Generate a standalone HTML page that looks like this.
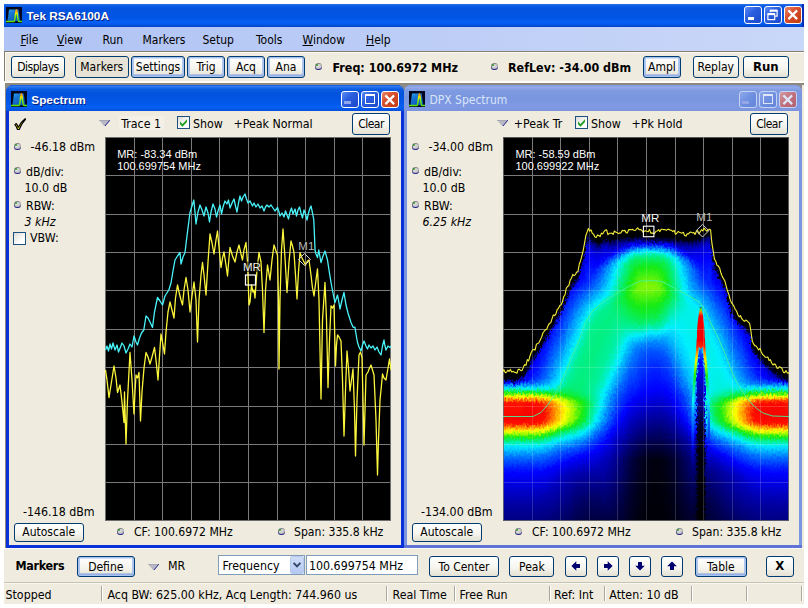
<!DOCTYPE html>
<html><head><meta charset="utf-8"><title>Tek RSA6100A</title>
<style>
html,body{margin:0;padding:0;background:#fff;}
body{width:808px;height:608px;position:relative;overflow:hidden;font-family:"DejaVu Sans Condensed","DejaVu Sans","Liberation Sans",sans-serif;font-size:12px;color:#000;}
.a{position:absolute;}
.t{position:absolute;white-space:nowrap;line-height:14px;height:14px;transform-origin:0 50%;}
.b{position:absolute;box-sizing:border-box;border:1px solid #003c74;border-radius:3px;background:linear-gradient(#fff 0%,#f6f5ef 55%,#e4e1d2 100%);text-align:center;white-space:nowrap;}
.b.d{box-shadow:inset 0 0 0 1.5px #a9c3f0,inset 0 -1px 0 1.5px #7f9fdf;}
.b.p{background:#e6e3d6;}
.b span{position:absolute;left:0;right:0;text-align:center;line-height:14px;}
.led{position:absolute;width:7px;height:7px;border-radius:50%;background:radial-gradient(circle at 35% 35%,#e8e8e8 0,#bdbdbd 60%,#9a9a9a 100%);box-shadow:inset 0 -1px 0 #20208a,inset 1px 1px 0 #888;}
.led i{position:absolute;left:1.3px;top:1.3px;width:2.2px;height:2.2px;border-radius:50%;background:#2f9a2f;}
.sep{position:absolute;top:586px;width:1px;height:15px;background:#aca899;box-shadow:1px 0 0 #fff;}
</style></head>
<body>
<div class="a" style="left:4px;top:4px;width:800px;height:23px;background:linear-gradient(#2b71e8 0%,#0a5be6 9%,#0353df 22%,#0255e5 60%,#0660f6 80%,#0453e0 92%,#0142c4 100%);"></div>
<svg class="a" style="left:6px;top:7px" width="16" height="16" viewBox="0 0 16 16"><defs><linearGradient id="ig6_7" x1="0" y1="0" x2="0.6" y2="1"><stop offset="0" stop-color="#2ea6ee"/><stop offset="0.35" stop-color="#1878d6"/><stop offset="1" stop-color="#0c58b8"/></linearGradient><linearGradient id="il6_7" x1="0" y1="0" x2="0" y2="1"><stop offset="0.12" stop-color="#ff9a00"/><stop offset="0.3" stop-color="#e6f000"/><stop offset="0.6" stop-color="#7cf000"/><stop offset="1" stop-color="#5ee000"/></linearGradient></defs><rect width="16" height="16" fill="#00061e"/><path d="M1.4 14.2L3 2.6H12.6L14.4 14.2Z" fill="url(#ig6_7)"/><path d="M0 14.6H7.8C9.3 14.6 9.5 2.8 10.4 2.8C11.3 2.8 11.5 14.6 13 14.6H16" fill="none" stroke="url(#il6_7)" stroke-width="1.5"/></svg>
<div class="t" id="ttl" style="left:26.5px;top:9.00px;font-size:11.8px;font-weight:bold;color:#fff;font-family:'Liberation Sans',sans-serif;text-shadow:1px 1px 0 #0a1f80;">Tek RSA6100A</div>
<div class="a" style="left:744px;top:6px;width:17.5px;height:17.5px;box-sizing:border-box;border:1px solid #fff;border-radius:3px;background:linear-gradient(135deg,#5c8cf4 0%,#2a5fe0 40%,#1c48c8 100%);"></div>
<div class="a" style="left:747.9px;top:17.2px;width:6.3px;height:2.9px;background:#fff;"></div>
<div class="a" style="left:764px;top:6px;width:17.5px;height:17.5px;box-sizing:border-box;border:1px solid #fff;border-radius:3px;background:linear-gradient(135deg,#5c8cf4 0%,#2a5fe0 40%,#1c48c8 100%);"></div>
<svg class="a" style="left:764px;top:6px" width="17.5" height="17.5" viewBox="0 0 18 18"><path d="M6.5 6.5V4.5H13.5V10.5H11.5" fill="none" stroke="#fff" stroke-width="1.2"/><path d="M6.5 4.9H13.5" stroke="#fff" stroke-width="2"/><rect x="4" y="8" width="7" height="6" fill="none" stroke="#fff" stroke-width="1.2"/><path d="M4 8.4H11" stroke="#fff" stroke-width="2"/></svg>
<div class="a" style="left:784.3px;top:6px;width:17.5px;height:17.5px;box-sizing:border-box;border:1px solid #fff;border-radius:3px;background:linear-gradient(135deg,#e9896b 0%,#d8502c 40%,#c03a12 100%);"></div>
<svg class="a" style="left:784.3px;top:6px" width="17.5" height="17.5" viewBox="0 0 18 18"><path d="M4.5 4.5L13.5 13.5M13.5 4.5L4.5 13.5" stroke="#fff" stroke-width="2.2" stroke-linecap="butt"/></svg>
<div class="a" style="left:802px;top:4px;width:2px;height:23px;background:#0a2cb8;"></div>
<div class="a" style="left:4px;top:27px;width:800px;height:24px;background:linear-gradient(90deg,#afc3f4,#c9d7f8);"></div>
<div class="t" id="m0" style="left:20.5px;top:33.00px;font-size:12px;"><u>F</u>ile</div>
<div class="t" id="m1" style="left:57px;top:33.00px;font-size:12px;"><u>V</u>iew</div>
<div class="t" id="m2" style="left:102.5px;top:33.00px;font-size:12px;">Run</div>
<div class="t" id="m3" style="left:142.5px;top:33.00px;font-size:12px;">Markers</div>
<div class="t" id="m4" style="left:202.5px;top:33.00px;font-size:12px;">Setup</div>
<div class="t" id="m5" style="left:256px;top:33.00px;font-size:12px;">Tools</div>
<div class="t" id="m6" style="left:302.5px;top:33.00px;font-size:12px;"><u>W</u>indow</div>
<div class="t" id="m7" style="left:366px;top:33.00px;font-size:12px;"><u>H</u>elp</div>
<div class="a" style="left:4px;top:51px;width:800px;height:30px;box-sizing:border-box;background:#efebde;border-top:1.5px solid #857f6c;border-left:1.5px solid #857f6c;box-shadow:inset 1px 1px 0 #fbfaf4;"></div>
<div class="a" style="left:4px;top:81px;width:800px;height:2px;background:#fdfcf8;"></div>
<div class="a" style="left:4px;top:83px;width:800px;height:466px;background:#efebde;"></div>
<div class="a" style="left:4px;top:83px;width:800px;height:2px;background:#8d8a7d;"></div>
<div class="a" style="left:4px;top:83px;width:2px;height:466px;background:linear-gradient(90deg,#fff 50%,#8d8a7d 50%);"></div>
<div class="b " style="left:11px;top:56px;width:54px;height:22px;"><span id="b0" style="top:3.00px;font-size:12px;letter-spacing:-0.5px;">Displays</span></div>
<div class="b p" style="left:75px;top:56px;width:53.5px;height:22px;"><span id="b1" style="top:3.00px;font-size:12px;">Markers</span></div>
<div class="b d" style="left:131px;top:56px;width:54px;height:22px;"><span id="b2" style="top:3.00px;font-size:12px;">Settings</span></div>
<div class="b d" style="left:187px;top:56px;width:38px;height:22px;"><span id="b3" style="top:3.00px;font-size:12px;">Trig</span></div>
<div class="b d" style="left:227px;top:56px;width:38px;height:22px;"><span id="b4" style="top:3.00px;font-size:12px;">Acq</span></div>
<div class="b d" style="left:267px;top:56px;width:38px;height:22px;"><span id="b5" style="top:3.00px;font-size:12px;">Ana</span></div>
<div class="led" style="left:314.5px;top:63.0px"><i></i></div>
<div class="t" id="freq" style="left:332.5px;top:60.50px;font-size:12.4px;font-weight:bold;">Freq: 100.6972 MHz</div>
<div class="led" style="left:490.5px;top:62.5px"><i></i></div>
<div class="t" id="ref" style="left:508px;top:60.50px;font-size:12.4px;font-weight:bold;">RefLev: -34.00 dBm</div>
<div class="b d" style="left:643px;top:56px;width:38px;height:22px;"><span id="b6" style="top:3.00px;font-size:12px;">Ampl</span></div>
<div class="b " style="left:693px;top:56px;width:45.5px;height:22px;"><span id="b7" style="top:3.00px;font-size:12px;">Replay</span></div>
<div class="b " style="left:743px;top:56px;width:45.5px;height:22px;"><span id="b8" style="top:3.00px;font-size:13px;font-weight:bold;">Run</span></div>
<div class="a" style="left:6px;top:85px;width:796px;height:6px;background:#8c8c8c;"></div>
<div class="a" style="left:6px;top:85px;width:398px;height:463px;background:#0831d9;border-radius:7px 7px 0 0;"></div>
<div class="a" style="left:6px;top:85px;width:398px;height:25.5px;background:linear-gradient(#0a5ce4 0%,#2f79f0 6%,#0b5ce2 16%,#0252dd 35%,#0358ea 70%,#0660f4 85%,#0550dc 100%);border-radius:7px 7px 0 0;"></div>
<div class="a" style="left:6px;top:544.5px;width:398px;height:3.5px;background:#0831d9;"></div>
<div class="a" style="left:9px;top:110.5px;width:392px;height:434.0px;background:#efebde;"></div>
<svg class="a" style="left:11px;top:91px" width="16" height="16" viewBox="0 0 16 16"><defs><linearGradient id="ig11_91" x1="0" y1="0" x2="0.6" y2="1"><stop offset="0" stop-color="#2ea6ee"/><stop offset="0.35" stop-color="#1878d6"/><stop offset="1" stop-color="#0c58b8"/></linearGradient><linearGradient id="il11_91" x1="0" y1="0" x2="0" y2="1"><stop offset="0.12" stop-color="#ff9a00"/><stop offset="0.3" stop-color="#e6f000"/><stop offset="0.6" stop-color="#7cf000"/><stop offset="1" stop-color="#5ee000"/></linearGradient></defs><rect width="16" height="16" fill="#00061e"/><path d="M1.4 14.2L3 2.6H12.6L14.4 14.2Z" fill="url(#ig11_91)"/><path d="M0 14.6H7.8C9.3 14.6 9.5 2.8 10.4 2.8C11.3 2.8 11.5 14.6 13 14.6H16" fill="none" stroke="url(#il11_91)" stroke-width="1.5"/></svg>
<div class="t" id="c1t" style="left:31.3px;top:92.50px;font-size:11.8px;font-weight:bold;color:#fff;font-family:'Liberation Sans',sans-serif;text-shadow:1px 1px 0 #0a1f80;">Spectrum</div>
<div class="a" style="left:341px;top:90.5px;width:17.5px;height:17.5px;box-sizing:border-box;border:1px solid #fff;border-radius:3px;background:linear-gradient(135deg,#5c8cf4 0%,#2a5fe0 40%,#1c48c8 100%);"></div>
<div class="a" style="left:344.4px;top:101.2px;width:6.3px;height:2.9px;background:#8fa6ee;"></div>
<div class="a" style="left:361px;top:90.5px;width:17.5px;height:17.5px;box-sizing:border-box;border:1px solid #fff;border-radius:3px;background:linear-gradient(135deg,#5c8cf4 0%,#2a5fe0 40%,#1c48c8 100%);"></div>
<div class="a" style="left:364.9px;top:94.4px;width:9.7px;height:9.7px;box-sizing:border-box;border:1.2px solid #fff;border-top-width:2.9px;"></div>
<div class="a" style="left:381.2px;top:90.5px;width:17.5px;height:17.5px;box-sizing:border-box;border:1px solid #fff;border-radius:3px;background:linear-gradient(135deg,#e9896b 0%,#d8502c 40%,#c03a12 100%);"></div>
<svg class="a" style="left:381.2px;top:90.5px" width="17.5" height="17.5" viewBox="0 0 18 18"><path d="M4.5 4.5L13.5 13.5M13.5 4.5L4.5 13.5" stroke="#fff" stroke-width="2.2" stroke-linecap="butt"/></svg>
<div class="a" style="left:404px;top:85px;width:398px;height:463px;background:#7b96e0;border-radius:7px 7px 0 0;"></div>
<div class="a" style="left:404px;top:85px;width:398px;height:25.5px;background:linear-gradient(#7b99e1 0%,#93aaea 8%,#7e9ae0 22%,#7a96df 50%,#8099e4 85%,#7b94dc 100%);border-radius:7px 7px 0 0;"></div>
<div class="a" style="left:404px;top:544.5px;width:398px;height:3.5px;background:#5f73d6;"></div>
<div class="a" style="left:407px;top:110.5px;width:392px;height:434.0px;background:#efebde;"></div>
<svg class="a" style="left:409px;top:91px" width="16" height="16" viewBox="0 0 16 16"><defs><linearGradient id="ig409_91" x1="0" y1="0" x2="0.6" y2="1"><stop offset="0" stop-color="#2ea6ee"/><stop offset="0.35" stop-color="#1878d6"/><stop offset="1" stop-color="#0c58b8"/></linearGradient><linearGradient id="il409_91" x1="0" y1="0" x2="0" y2="1"><stop offset="0.12" stop-color="#ff9a00"/><stop offset="0.3" stop-color="#e6f000"/><stop offset="0.6" stop-color="#7cf000"/><stop offset="1" stop-color="#5ee000"/></linearGradient></defs><rect width="16" height="16" fill="#00061e"/><path d="M1.4 14.2L3 2.6H12.6L14.4 14.2Z" fill="url(#ig409_91)"/><path d="M0 14.6H7.8C9.3 14.6 9.5 2.8 10.4 2.8C11.3 2.8 11.5 14.6 13 14.6H16" fill="none" stroke="url(#il409_91)" stroke-width="1.5"/></svg>
<div class="t" id="c2t" style="left:429.4px;top:92.50px;font-size:12px;color:#d8e4f8;">DPX Spectrum</div>
<div class="a" style="left:739px;top:90.5px;width:17.5px;height:17.5px;box-sizing:border-box;border:1px solid #c4d2f4;border-radius:3px;background:linear-gradient(135deg,#8ca8ec 0%,#6f8fe0 50%,#6383d8 100%);"></div>
<div class="a" style="left:742.4px;top:101.2px;width:6.3px;height:2.9px;background:#93a7e6;"></div>
<div class="a" style="left:759px;top:90.5px;width:17.5px;height:17.5px;box-sizing:border-box;border:1px solid #c4d2f4;border-radius:3px;background:linear-gradient(135deg,#8ca8ec 0%,#6f8fe0 50%,#6383d8 100%);"></div>
<div class="a" style="left:762.9px;top:94.4px;width:9.7px;height:9.7px;box-sizing:border-box;border:1.2px solid #dfe6f8;border-top-width:2.9px;"></div>
<div class="a" style="left:779.2px;top:90.5px;width:17.5px;height:17.5px;box-sizing:border-box;border:1px solid #c4d2f4;border-radius:3px;background:linear-gradient(135deg,#d49aa0 0%,#c1717e 50%,#b0606e 100%);"></div>
<svg class="a" style="left:779.2px;top:90.5px" width="17.5" height="17.5" viewBox="0 0 18 18"><path d="M4.5 4.5L13.5 13.5M13.5 4.5L4.5 13.5" stroke="#dfe6f8" stroke-width="2.2" stroke-linecap="butt"/></svg>
<svg class="a" style="left:13.5px;top:117.8px" width="12.4" height="12.4" viewBox="0 0 14 14"><path d="M1 7.5L2.6 6.3C3.6 7.6 4.3 8.8 4.9 10.4C6.8 6.4 9.4 3.2 12.6 0.8L13 1.5C10 4.6 7.6 8.4 5.9 13H3.9C3.3 10.8 2.4 9.1 1 7.5Z" fill="#ffe800" stroke="#000" stroke-width="1.3" stroke-linejoin="round"/></svg>
<svg class="a" style="left:99px;top:119.5px" width="11" height="6.5" viewBox="0 0 11 6.5"><path d="M0 0H11L5.5 6.5Z" fill="#b9b9c6"/><path d="M11 0L5.5 6.5" stroke="#1a1a8a" stroke-width="1" fill="none"/><path d="M0 0H11" stroke="#8a8a99" stroke-width="0.8"/></svg>
<div class="a" style="left:119px;top:116px;width:45px;height:14px;background:#f4f0e7;"></div>
<div class="t" id="tr1" style="left:121.3px;top:117.00px;font-size:12.3px;">Trace 1</div>
<div class="a" style="left:177px;top:116px;width:13px;height:13px;box-sizing:border-box;border:1px solid #1c5180;background:linear-gradient(135deg,#dcdcd7,#fff 70%);"></div>
<svg class="a" style="left:177px;top:116px" width="13" height="13" viewBox="0 0 13 13"><path d="M3 5.5L5.5 8L10 3.2V6L5.5 10.8L3 8.3Z" fill="#21a121"/></svg>
<div class="t" id="sh1" style="left:193px;top:117.00px;font-size:12.3px;">Show</div>
<div class="t" id="pk1" style="left:233.5px;top:117.00px;font-size:12.3px;">+Peak Normal</div>
<div class="b " style="left:352px;top:113px;width:38px;height:22px;"><span id="cl1" style="top:3.00px;font-size:12px;letter-spacing:-0.5px;">Clear</span></div>
<div class="led" style="left:13.5px;top:143.0px"><i></i></div>
<div class="t" id="l1a" style="left:30.5px;top:140.30px;font-size:12.3px;">-46.18 dBm</div>
<div class="led" style="left:13.5px;top:167.0px"><i></i></div>
<div class="t" id="l1b" style="left:26px;top:164.50px;font-size:12.3px;">dB/div:</div>
<div class="t" id="l1c" style="left:24.5px;top:180.70px;font-size:12.3px;">10.0 dB</div>
<div class="led" style="left:13.5px;top:200.8px"><i></i></div>
<div class="t" id="l1d" style="left:26px;top:198.50px;font-size:12.3px;">RBW:</div>
<div class="t" id="l1e" style="left:24.5px;top:214.70px;font-size:12.3px;font-style:italic;">3 kHz</div>
<div class="a" style="left:13px;top:232px;width:13px;height:13px;box-sizing:border-box;border:1px solid #1c5180;background:linear-gradient(135deg,#dcdcd7,#fff 70%);"></div>
<div class="t" id="l1f" style="left:30px;top:230.60px;font-size:12.3px;">VBW:</div>
<div class="t" id="l1g" style="left:23px;top:504.50px;font-size:12.3px;">-146.18 dBm</div>
<div class="b " style="left:14px;top:522.5px;width:69.5px;height:19.0px;"><span id="as1" style="top:1.50px;font-size:12px;">Autoscale</span></div>
<div class="led" style="left:116.5px;top:527.5px"><i></i></div>
<div class="t" id="cf1" style="left:134px;top:525.00px;font-size:12.1px;">CF: 100.6972 MHz</div>
<div class="led" style="left:277.5px;top:527.5px"><i></i></div>
<div class="t" id="sp1" style="left:294px;top:525.00px;font-size:12.1px;">Span: 335.8 kHz</div>
<svg class="a" style="left:497px;top:119.5px" width="11" height="6.5" viewBox="0 0 11 6.5"><path d="M0 0H11L5.5 6.5Z" fill="#b9b9c6"/><path d="M11 0L5.5 6.5" stroke="#1a1a8a" stroke-width="1" fill="none"/><path d="M0 0H11" stroke="#8a8a99" stroke-width="0.8"/></svg>
<div class="t" id="tr2" style="left:513.7px;top:117.00px;font-size:12.3px;">+Peak Tr</div>
<div class="a" style="left:575px;top:116px;width:13px;height:13px;box-sizing:border-box;border:1px solid #1c5180;background:linear-gradient(135deg,#dcdcd7,#fff 70%);"></div>
<svg class="a" style="left:575px;top:116px" width="13" height="13" viewBox="0 0 13 13"><path d="M3 5.5L5.5 8L10 3.2V6L5.5 10.8L3 8.3Z" fill="#21a121"/></svg>
<div class="t" id="sh2" style="left:591px;top:117.00px;font-size:12.3px;">Show</div>
<div class="t" id="pk2" style="left:631.5px;top:117.00px;font-size:12.3px;">+Pk Hold</div>
<div class="b " style="left:750px;top:113px;width:38px;height:22px;"><span id="cl2" style="top:3.00px;font-size:12px;letter-spacing:-0.5px;">Clear</span></div>
<div class="led" style="left:411.5px;top:143.0px"><i></i></div>
<div class="t" id="l2a" style="left:428.5px;top:140.30px;font-size:12.3px;">-34.00 dBm</div>
<div class="led" style="left:411.5px;top:167.0px"><i></i></div>
<div class="t" id="l2b" style="left:424px;top:164.50px;font-size:12.3px;">dB/div:</div>
<div class="t" id="l2c" style="left:422.5px;top:180.70px;font-size:12.3px;">10.0 dB</div>
<div class="led" style="left:411.5px;top:200.8px"><i></i></div>
<div class="t" id="l2d" style="left:424px;top:198.50px;font-size:12.3px;">RBW:</div>
<div class="t" id="l2e" style="left:422.5px;top:214.70px;font-size:12.3px;font-style:italic;">6.25 kHz</div>
<div class="t" id="l2g" style="left:421px;top:504.50px;font-size:12.3px;">-134.00 dBm</div>
<div class="b " style="left:412px;top:522.5px;width:69.5px;height:19.0px;"><span id="as2" style="top:1.50px;font-size:12px;">Autoscale</span></div>
<div class="led" style="left:514.5px;top:527.5px"><i></i></div>
<div class="t" id="cf2" style="left:532px;top:525.00px;font-size:12.1px;">CF: 100.6972 MHz</div>
<div class="led" style="left:675.5px;top:527.5px"><i></i></div>
<div class="t" id="sp2" style="left:692px;top:525.00px;font-size:12.1px;">Span: 335.8 kHz</div>
<svg class="a" style="left:105px;top:137px" width="286" height="384" viewBox="0 0 286 384">
<rect width="286" height="384" fill="#000"/>
<path d="M29.5 0V383.6M57.5 0V383.6M86.5 0V383.6M114.5 0V383.6M143.5 0V383.6M172.5 0V383.6M200.5 0V383.6M229.5 0V383.6M257.5 0V383.6M0 38.5H286M0 77.5H286M0 115.5H286M0 153.5H286M0 192.5H286M0 230.5H286M0 269.5H286M0 307.5H286M0 345.5H286" stroke="#7a7a7a" stroke-width="1" fill="none" opacity="1.0"/>
<rect x="0.5" y="0.5" width="285" height="383" fill="none" stroke="#6e6e6e"/>
<polyline points="0.5,213.0 2.0,209.0 3.5,214.0 5.0,207.0 6.5,212.0 8.0,206.0 10.0,213.0 12.0,208.0 13.5,215.0 15.5,210.0 17.0,206.0 19.0,209.0 21.0,216.0 23.0,212.0 25.0,207.0 27.0,210.0 29.0,199.0 31.0,205.0 32.5,208.0 34.5,201.0 36.5,196.0 38.8,193.0 41.0,179.0 43.0,181.0 45.0,185.0 47.5,190.5 49.5,175.0 52.5,160.5 55.0,164.0 57.5,168.0 60.0,159.0 63.8,153.0 66.0,146.0 68.0,134.0 70.0,123.0 72.5,119.0 75.0,115.5 76.0,127.0 78.0,120.0 80.0,115.5 81.5,103.0 83.0,91.0 85.0,75.5 87.0,69.0 88.8,63.0 90.0,75.0 91.0,87.0 93.0,75.0 95.0,68.0 97.0,73.0 99.0,79.0 101.0,70.0 103.0,76.0 104.5,85.0 106.0,75.0 108.0,67.0 110.0,72.0 111.5,80.0 113.0,74.0 115.0,68.0 116.5,77.0 118.0,70.0 120.0,64.0 122.0,67.0 123.5,63.0 125.0,71.0 127.0,66.0 129.0,62.0 130.5,69.0 132.0,75.0 133.5,66.0 135.0,59.0 136.5,64.0 138.0,60.0 140.0,57.0 141.5,62.0 143.0,66.0 145.0,64.0 147.5,69.0 149.0,66.0 151.0,70.0 153.0,67.0 155.0,71.0 157.0,69.0 159.0,74.0 160.5,70.0 162.0,68.0 164.0,70.0 166.0,68.0 168.0,71.0 170.0,74.0 172.5,70.5 174.0,75.0 175.0,79.0 177.0,76.0 179.0,80.0 180.5,74.0 182.0,78.0 183.5,82.0 185.0,75.0 186.5,71.0 188.0,77.0 190.0,72.0 191.5,79.0 193.0,73.0 194.5,70.0 196.0,76.0 197.5,81.0 199.0,73.0 200.5,77.0 202.0,83.0 203.5,76.0 205.0,71.0 206.0,69.0 207.5,76.0 208.8,83.0 209.5,99.0 210.0,113.0 211.0,117.0 212.5,120.5 213.8,113.0 215.0,120.0 216.0,125.5 218.0,119.0 220.0,114.0 222.5,123.0 224.0,133.0 226.0,145.5 228.0,156.0 230.0,165.5 232.5,158.0 234.0,166.0 235.0,172.0 237.0,163.0 239.0,155.5 241.0,168.0 243.0,176.0 246.0,185.5 248.0,190.0 250.0,190.5 251.0,197.0 252.5,205.5 254.0,210.0 256.0,214.0 257.5,208.0 259.0,204.0 261.0,209.0 262.5,212.0 264.0,208.0 266.0,211.0 268.0,209.0 270.0,213.0 272.0,210.0 274.0,215.0 276.0,218.0 277.5,209.0 279.0,203.0 280.0,209.0 281.0,213.0 283.0,209.0 285.0,210.5 286.0,209.0" fill="none" stroke="#48f4fa" stroke-width="1.3" stroke-linejoin="round"/>
<polyline points="0.5,233.0 2.0,243.0 4.0,260.5 6.0,248.0 9.0,229.0 11.0,241.0 12.5,255.5 14.0,251.0 15.0,248.0 17.0,265.0 19.0,285.5 19.5,255.0 21.0,307.0 22.5,263.0 25.0,215.5 27.0,243.0 29.0,277.0 30.0,255.0 31.0,238.0 32.5,241.0 34.0,235.5 35.5,284.0 37.0,255.0 39.0,231.0 41.0,215.5 43.0,220.0 45.0,227.0 47.0,220.0 49.5,210.5 51.0,223.0 53.0,243.0 54.5,219.0 56.0,197.0 58.0,208.0 59.5,217.0 61.0,195.0 63.0,175.0 65.0,165.0 67.0,173.0 69.0,181.0 70.5,161.0 72.5,148.0 74.0,155.0 76.0,163.0 77.5,168.0 79.0,153.0 81.0,140.5 83.0,153.0 85.0,175.0 87.0,159.0 89.0,145.0 91.0,163.0 92.5,205.0 94.0,163.0 96.0,138.0 97.5,125.5 99.0,138.0 101.0,158.0 103.0,125.0 105.0,97.0 107.0,106.0 109.0,117.0 111.0,103.0 112.5,94.0 114.0,110.0 116.0,130.5 117.5,121.0 119.0,115.0 121.0,128.0 122.5,139.0 124.0,121.0 125.0,110.5 127.5,119.0 130.0,125.0 132.0,115.0 134.0,108.0 136.0,117.0 137.5,123.0 139.0,113.0 141.0,105.5 142.5,125.0 144.0,168.0 145.0,165.0 146.5,148.0 148.0,155.0 149.0,153.0 150.0,161.0 152.0,133.0 154.0,115.5 156.0,125.0 157.5,153.0 159.0,195.5 160.5,153.0 162.5,128.0 164.0,137.0 165.0,143.0 167.0,123.0 169.0,108.0 171.0,114.0 172.5,118.0 173.5,163.0 174.0,232.0 175.0,163.0 176.5,113.0 178.0,92.0 180.0,121.0 182.0,155.5 184.0,125.0 186.0,104.0 187.5,109.0 189.0,115.5 190.5,138.0 192.0,162.0 193.5,135.0 195.0,115.5 197.0,121.0 199.0,125.0 200.5,128.0 202.5,124.0 204.0,123.0 206.0,138.0 207.5,151.0 209.0,159.0 211.0,143.0 212.5,132.0 214.0,163.0 216.0,262.0 217.5,183.0 220.0,145.5 221.5,183.0 223.0,250.5 224.5,203.0 226.0,169.0 227.5,171.0 229.0,168.0 230.5,229.0 231.5,208.0 232.5,198.0 234.0,200.0 236.0,204.0 237.5,243.0 239.0,299.0 240.5,253.0 242.0,214.0 243.5,231.0 245.0,254.0 246.5,243.0 248.0,232.0 249.5,273.0 250.5,319.0 252.0,263.0 254.0,218.0 255.5,215.0 257.0,220.5 258.0,263.0 259.0,308.0 260.0,273.0 261.0,238.0 263.0,235.0 264.5,231.0 266.0,228.0 267.5,233.0 269.0,238.0 271.0,283.0 272.5,338.0 273.5,303.0 275.0,263.0 276.5,248.0 277.5,237.0 279.0,241.0 281.0,243.0 283.0,231.0 284.5,222.0 286.0,233.0" fill="none" stroke="#fbf53c" stroke-width="1.3" stroke-linejoin="round"/>
<rect x="140.5" y="138" width="10" height="10" fill="none" stroke="#fff" stroke-width="1.2"/>
<rect x="138" y="124.5" width="17" height="10.5" fill="#000" opacity="0.55"/>
<text x="138" y="134" font-family="'Liberation Sans',sans-serif" font-size="11.5" fill="#ececec">MR</text>
<path d="M199.5 116.5l6 6l-6 6l-6 -6z" fill="none" stroke="#d0d0d0" stroke-width="1"/>
<rect x="193" y="103.5" width="15" height="10.5" fill="#000" opacity="0.55"/>
<text x="193.3" y="113.19999999999999" font-family="'Liberation Sans',sans-serif" font-size="11.5" fill="#b8b8b8">M1</text>
<text x="12.200000000000003" y="20.80000000000001" font-family="'Liberation Sans',sans-serif" font-size="11" fill="#fff">MR: -83.34 dBm</text>
<text x="12.200000000000003" y="33.099999999999994" font-family="'Liberation Sans',sans-serif" font-size="11" fill="#fff">100.699754 MHz</text>
</svg>
<svg class="a" style="left:503px;top:137px" width="286" height="384" viewBox="0 0 286 384">
<rect width="286" height="384" fill="#000"/>
<defs><linearGradient id="h0" gradientUnits="userSpaceOnUse" x1="0" y1="0" x2="0" y2="384"><stop offset="0.0013" stop-color="#000000"/><stop offset="0.6263" stop-color="#000000"/><stop offset="0.6315" stop-color="#000045"/><stop offset="0.6393" stop-color="#0000e9"/><stop offset="0.6419" stop-color="#002aff"/><stop offset="0.6445" stop-color="#0070ff"/><stop offset="0.6523" stop-color="#00d9ff"/><stop offset="0.6549" stop-color="#00f0ee"/><stop offset="0.6654" stop-color="#12eb1f"/><stop offset="0.6706" stop-color="#87f605"/><stop offset="0.6758" stop-color="#f4fe00"/><stop offset="0.6784" stop-color="#ffda00"/><stop offset="0.6862" stop-color="#ff5300"/><stop offset="0.6914" stop-color="#ff1200"/><stop offset="0.7331" stop-color="#f50500"/><stop offset="0.7461" stop-color="#ff0f00"/><stop offset="0.7643" stop-color="#fff000"/><stop offset="0.7669" stop-color="#edfe00"/><stop offset="0.7721" stop-color="#abfa00"/><stop offset="0.7799" stop-color="#2eee10"/><stop offset="0.7826" stop-color="#12eb1e"/><stop offset="0.7904" stop-color="#04ef76"/><stop offset="0.8008" stop-color="#00f0dd"/><stop offset="0.8060" stop-color="#00eaff"/><stop offset="0.8346" stop-color="#006fff"/><stop offset="0.8607" stop-color="#001fff"/><stop offset="0.8763" stop-color="#0001ff"/><stop offset="0.9596" stop-color="#00009f"/><stop offset="0.9987" stop-color="#000083"/></linearGradient><linearGradient id="h1" gradientUnits="userSpaceOnUse" x1="0" y1="0" x2="0" y2="384"><stop offset="0.0013" stop-color="#000000"/><stop offset="0.6289" stop-color="#000000"/><stop offset="0.6315" stop-color="#000013"/><stop offset="0.6341" stop-color="#00003f"/><stop offset="0.6419" stop-color="#0000ef"/><stop offset="0.6445" stop-color="#0033ff"/><stop offset="0.6497" stop-color="#00b8ff"/><stop offset="0.6523" stop-color="#00d9ff"/><stop offset="0.6549" stop-color="#00f0ee"/><stop offset="0.6654" stop-color="#12eb1f"/><stop offset="0.6706" stop-color="#87f605"/><stop offset="0.6758" stop-color="#f4fe00"/><stop offset="0.6784" stop-color="#ffda00"/><stop offset="0.6862" stop-color="#ff5300"/><stop offset="0.6914" stop-color="#ff1200"/><stop offset="0.7331" stop-color="#f50500"/><stop offset="0.7461" stop-color="#ff0f00"/><stop offset="0.7643" stop-color="#fff000"/><stop offset="0.7669" stop-color="#edfe00"/><stop offset="0.7721" stop-color="#abfa00"/><stop offset="0.7799" stop-color="#2eee10"/><stop offset="0.7826" stop-color="#12eb1e"/><stop offset="0.7904" stop-color="#04ef76"/><stop offset="0.8008" stop-color="#00f0dd"/><stop offset="0.8060" stop-color="#00eaff"/><stop offset="0.8346" stop-color="#006fff"/><stop offset="0.8607" stop-color="#001fff"/><stop offset="0.8763" stop-color="#0001ff"/><stop offset="0.9596" stop-color="#00009f"/><stop offset="0.9987" stop-color="#000083"/></linearGradient><linearGradient id="h2" gradientUnits="userSpaceOnUse" x1="0" y1="0" x2="0" y2="384"><stop offset="0.0013" stop-color="#000000"/><stop offset="0.6263" stop-color="#000000"/><stop offset="0.6289" stop-color="#000011"/><stop offset="0.6315" stop-color="#000038"/><stop offset="0.6393" stop-color="#0000db"/><stop offset="0.6419" stop-color="#001cff"/><stop offset="0.6471" stop-color="#0097ff"/><stop offset="0.6523" stop-color="#00d9ff"/><stop offset="0.6549" stop-color="#00f0ee"/><stop offset="0.6654" stop-color="#12eb1f"/><stop offset="0.6706" stop-color="#87f605"/><stop offset="0.6758" stop-color="#f4fe00"/><stop offset="0.6784" stop-color="#ffda00"/><stop offset="0.6862" stop-color="#ff5300"/><stop offset="0.6914" stop-color="#ff1200"/><stop offset="0.7331" stop-color="#f50500"/><stop offset="0.7461" stop-color="#ff0f00"/><stop offset="0.7643" stop-color="#fff000"/><stop offset="0.7669" stop-color="#edfe00"/><stop offset="0.7721" stop-color="#abfa00"/><stop offset="0.7799" stop-color="#2eee10"/><stop offset="0.7826" stop-color="#12eb1e"/><stop offset="0.7904" stop-color="#04ef76"/><stop offset="0.8008" stop-color="#00f0dd"/><stop offset="0.8060" stop-color="#00eaff"/><stop offset="0.8346" stop-color="#006fff"/><stop offset="0.8607" stop-color="#001fff"/><stop offset="0.8763" stop-color="#0001ff"/><stop offset="0.9596" stop-color="#00009f"/><stop offset="0.9987" stop-color="#000083"/></linearGradient><linearGradient id="h3" gradientUnits="userSpaceOnUse" x1="0" y1="0" x2="0" y2="384"><stop offset="0.0013" stop-color="#000000"/><stop offset="0.6237" stop-color="#000000"/><stop offset="0.6263" stop-color="#000010"/><stop offset="0.6289" stop-color="#000032"/><stop offset="0.6393" stop-color="#0006ff"/><stop offset="0.6445" stop-color="#0078ff"/><stop offset="0.6523" stop-color="#00d9ff"/><stop offset="0.6549" stop-color="#00f0ee"/><stop offset="0.6654" stop-color="#12eb1f"/><stop offset="0.6706" stop-color="#87f605"/><stop offset="0.6758" stop-color="#f4fe00"/><stop offset="0.6784" stop-color="#ffda00"/><stop offset="0.6862" stop-color="#ff5300"/><stop offset="0.6914" stop-color="#ff1200"/><stop offset="0.7331" stop-color="#f50500"/><stop offset="0.7461" stop-color="#ff0f00"/><stop offset="0.7643" stop-color="#fff000"/><stop offset="0.7669" stop-color="#edfe00"/><stop offset="0.7721" stop-color="#abfa00"/><stop offset="0.7799" stop-color="#2eee10"/><stop offset="0.7826" stop-color="#12eb1e"/><stop offset="0.7904" stop-color="#04ef76"/><stop offset="0.8008" stop-color="#00f0dd"/><stop offset="0.8060" stop-color="#00eaff"/><stop offset="0.8346" stop-color="#006fff"/><stop offset="0.8607" stop-color="#001fff"/><stop offset="0.8763" stop-color="#0001ff"/><stop offset="0.9596" stop-color="#00009f"/><stop offset="0.9987" stop-color="#000083"/></linearGradient><linearGradient id="h4" gradientUnits="userSpaceOnUse" x1="0" y1="0" x2="0" y2="384"><stop offset="0.0013" stop-color="#000000"/><stop offset="0.6289" stop-color="#000000"/><stop offset="0.6341" stop-color="#000054"/><stop offset="0.6419" stop-color="#0007ff"/><stop offset="0.6471" stop-color="#0097ff"/><stop offset="0.6523" stop-color="#00d9ff"/><stop offset="0.6549" stop-color="#00f0ee"/><stop offset="0.6654" stop-color="#12eb1f"/><stop offset="0.6706" stop-color="#87f605"/><stop offset="0.6758" stop-color="#f4fe00"/><stop offset="0.6784" stop-color="#ffda00"/><stop offset="0.6862" stop-color="#ff5300"/><stop offset="0.6914" stop-color="#ff1200"/><stop offset="0.7331" stop-color="#f50500"/><stop offset="0.7461" stop-color="#ff0f00"/><stop offset="0.7643" stop-color="#fff000"/><stop offset="0.7669" stop-color="#edfe00"/><stop offset="0.7721" stop-color="#abfa00"/><stop offset="0.7799" stop-color="#2eee10"/><stop offset="0.7826" stop-color="#12eb1e"/><stop offset="0.7904" stop-color="#04ef76"/><stop offset="0.8008" stop-color="#00f0dd"/><stop offset="0.8060" stop-color="#00eaff"/><stop offset="0.8346" stop-color="#006fff"/><stop offset="0.8607" stop-color="#001fff"/><stop offset="0.8763" stop-color="#0001ff"/><stop offset="0.9596" stop-color="#00009f"/><stop offset="0.9987" stop-color="#000083"/></linearGradient><linearGradient id="h5" gradientUnits="userSpaceOnUse" x1="0" y1="0" x2="0" y2="384"><stop offset="0.0013" stop-color="#000000"/><stop offset="0.6315" stop-color="#000000"/><stop offset="0.6341" stop-color="#000015"/><stop offset="0.6367" stop-color="#000047"/><stop offset="0.6445" stop-color="#0006ff"/><stop offset="0.6497" stop-color="#009cff"/><stop offset="0.6523" stop-color="#00d9ff"/><stop offset="0.6549" stop-color="#00f0ee"/><stop offset="0.6654" stop-color="#12eb1f"/><stop offset="0.6706" stop-color="#87f605"/><stop offset="0.6758" stop-color="#f4fe00"/><stop offset="0.6784" stop-color="#ffda00"/><stop offset="0.6862" stop-color="#ff5300"/><stop offset="0.6914" stop-color="#ff1200"/><stop offset="0.7331" stop-color="#f50500"/><stop offset="0.7461" stop-color="#ff1000"/><stop offset="0.7643" stop-color="#fff000"/><stop offset="0.7669" stop-color="#edfe00"/><stop offset="0.7721" stop-color="#abfa00"/><stop offset="0.7799" stop-color="#2eee10"/><stop offset="0.7826" stop-color="#12eb1e"/><stop offset="0.7904" stop-color="#04ef76"/><stop offset="0.8008" stop-color="#00f0dd"/><stop offset="0.8060" stop-color="#00eaff"/><stop offset="0.8346" stop-color="#006fff"/><stop offset="0.8607" stop-color="#001fff"/><stop offset="0.8763" stop-color="#0001ff"/><stop offset="0.9596" stop-color="#00009f"/><stop offset="0.9987" stop-color="#000083"/></linearGradient><linearGradient id="h6" gradientUnits="userSpaceOnUse" x1="0" y1="0" x2="0" y2="384"><stop offset="0.0013" stop-color="#000000"/><stop offset="0.6289" stop-color="#000000"/><stop offset="0.6341" stop-color="#000054"/><stop offset="0.6419" stop-color="#0007ff"/><stop offset="0.6471" stop-color="#0097ff"/><stop offset="0.6523" stop-color="#00d9ff"/><stop offset="0.6549" stop-color="#00f0ee"/><stop offset="0.6654" stop-color="#12eb1f"/><stop offset="0.6706" stop-color="#87f605"/><stop offset="0.6758" stop-color="#f4fe00"/><stop offset="0.6784" stop-color="#ffda00"/><stop offset="0.6862" stop-color="#ff5300"/><stop offset="0.6914" stop-color="#ff1200"/><stop offset="0.7331" stop-color="#f50500"/><stop offset="0.7461" stop-color="#ff1000"/><stop offset="0.7643" stop-color="#fff000"/><stop offset="0.7669" stop-color="#edfe00"/><stop offset="0.7721" stop-color="#abfa00"/><stop offset="0.7799" stop-color="#2eee10"/><stop offset="0.7826" stop-color="#12eb1e"/><stop offset="0.7904" stop-color="#04ef76"/><stop offset="0.8008" stop-color="#00f0dd"/><stop offset="0.8060" stop-color="#00eaff"/><stop offset="0.8346" stop-color="#006fff"/><stop offset="0.8607" stop-color="#001fff"/><stop offset="0.8763" stop-color="#0001ff"/><stop offset="0.9596" stop-color="#00009f"/><stop offset="0.9987" stop-color="#000083"/></linearGradient><linearGradient id="h7" gradientUnits="userSpaceOnUse" x1="0" y1="0" x2="0" y2="384"><stop offset="0.0013" stop-color="#000000"/><stop offset="0.6237" stop-color="#000000"/><stop offset="0.6263" stop-color="#000010"/><stop offset="0.6289" stop-color="#000032"/><stop offset="0.6393" stop-color="#0006ff"/><stop offset="0.6445" stop-color="#0078ff"/><stop offset="0.6523" stop-color="#00d9ff"/><stop offset="0.6549" stop-color="#00f0ee"/><stop offset="0.6654" stop-color="#12eb1f"/><stop offset="0.6706" stop-color="#87f605"/><stop offset="0.6758" stop-color="#f4fe00"/><stop offset="0.6784" stop-color="#ffda00"/><stop offset="0.6862" stop-color="#ff5300"/><stop offset="0.6914" stop-color="#ff1200"/><stop offset="0.7331" stop-color="#f50500"/><stop offset="0.7461" stop-color="#ff1000"/><stop offset="0.7643" stop-color="#fff000"/><stop offset="0.7669" stop-color="#edfe00"/><stop offset="0.7721" stop-color="#abfa00"/><stop offset="0.7799" stop-color="#2eee10"/><stop offset="0.7826" stop-color="#12eb1e"/><stop offset="0.7904" stop-color="#04ef76"/><stop offset="0.8008" stop-color="#00f0dd"/><stop offset="0.8060" stop-color="#00eaff"/><stop offset="0.8346" stop-color="#006eff"/><stop offset="0.8607" stop-color="#001fff"/><stop offset="0.8763" stop-color="#0001ff"/><stop offset="0.9596" stop-color="#00009f"/><stop offset="0.9987" stop-color="#000083"/></linearGradient><linearGradient id="h8" gradientUnits="userSpaceOnUse" x1="0" y1="0" x2="0" y2="384"><stop offset="0.0013" stop-color="#000000"/><stop offset="0.6211" stop-color="#000000"/><stop offset="0.6237" stop-color="#000005"/><stop offset="0.6263" stop-color="#000025"/><stop offset="0.6315" stop-color="#000078"/><stop offset="0.6367" stop-color="#0000e1"/><stop offset="0.6393" stop-color="#001fff"/><stop offset="0.6419" stop-color="#005aff"/><stop offset="0.6523" stop-color="#00d9ff"/><stop offset="0.6549" stop-color="#00f0ee"/><stop offset="0.6654" stop-color="#12eb1f"/><stop offset="0.6706" stop-color="#87f605"/><stop offset="0.6758" stop-color="#f4fe00"/><stop offset="0.6784" stop-color="#ffda00"/><stop offset="0.6862" stop-color="#ff5300"/><stop offset="0.6914" stop-color="#ff1200"/><stop offset="0.7331" stop-color="#f50500"/><stop offset="0.7461" stop-color="#ff1000"/><stop offset="0.7643" stop-color="#fff000"/><stop offset="0.7669" stop-color="#edfe00"/><stop offset="0.7721" stop-color="#aafa00"/><stop offset="0.7799" stop-color="#2eee11"/><stop offset="0.7826" stop-color="#12eb1e"/><stop offset="0.7904" stop-color="#04ef76"/><stop offset="0.8008" stop-color="#00f0dd"/><stop offset="0.8060" stop-color="#00eaff"/><stop offset="0.8346" stop-color="#006eff"/><stop offset="0.8607" stop-color="#001fff"/><stop offset="0.8763" stop-color="#0001ff"/><stop offset="0.9570" stop-color="#0000a2"/><stop offset="0.9987" stop-color="#000083"/></linearGradient><linearGradient id="h9" gradientUnits="userSpaceOnUse" x1="0" y1="0" x2="0" y2="384"><stop offset="0.0013" stop-color="#000000"/><stop offset="0.6185" stop-color="#000000"/><stop offset="0.6263" stop-color="#000059"/><stop offset="0.6341" stop-color="#0000e4"/><stop offset="0.6367" stop-color="#001eff"/><stop offset="0.6523" stop-color="#00d9ff"/><stop offset="0.6549" stop-color="#00f0ee"/><stop offset="0.6654" stop-color="#12eb1f"/><stop offset="0.6706" stop-color="#87f605"/><stop offset="0.6758" stop-color="#f4fe00"/><stop offset="0.6784" stop-color="#ffda00"/><stop offset="0.6862" stop-color="#ff5300"/><stop offset="0.6914" stop-color="#ff1200"/><stop offset="0.7331" stop-color="#f50500"/><stop offset="0.7461" stop-color="#ff1000"/><stop offset="0.7643" stop-color="#fff000"/><stop offset="0.7669" stop-color="#edfe00"/><stop offset="0.7721" stop-color="#aafa00"/><stop offset="0.7799" stop-color="#2eee11"/><stop offset="0.7826" stop-color="#12eb1e"/><stop offset="0.7904" stop-color="#04ef76"/><stop offset="0.8008" stop-color="#00f0dd"/><stop offset="0.8060" stop-color="#00eaff"/><stop offset="0.8346" stop-color="#006eff"/><stop offset="0.8607" stop-color="#001fff"/><stop offset="0.8763" stop-color="#0001ff"/><stop offset="0.9570" stop-color="#0000a2"/><stop offset="0.9987" stop-color="#000083"/></linearGradient><linearGradient id="h10" gradientUnits="userSpaceOnUse" x1="0" y1="0" x2="0" y2="384"><stop offset="0.0013" stop-color="#000000"/><stop offset="0.6107" stop-color="#000000"/><stop offset="0.6133" stop-color="#000010"/><stop offset="0.6237" stop-color="#00008b"/><stop offset="0.6315" stop-color="#0000f8"/><stop offset="0.6341" stop-color="#000eff"/><stop offset="0.6419" stop-color="#005bff"/><stop offset="0.6523" stop-color="#00d9ff"/><stop offset="0.6549" stop-color="#00f0ee"/><stop offset="0.6654" stop-color="#12eb1f"/><stop offset="0.6706" stop-color="#87f605"/><stop offset="0.6758" stop-color="#f4fe00"/><stop offset="0.6784" stop-color="#ffda00"/><stop offset="0.6862" stop-color="#ff5300"/><stop offset="0.6914" stop-color="#ff1200"/><stop offset="0.6992" stop-color="#f80600"/><stop offset="0.7331" stop-color="#f50500"/><stop offset="0.7461" stop-color="#ff1000"/><stop offset="0.7643" stop-color="#fff000"/><stop offset="0.7669" stop-color="#edfe00"/><stop offset="0.7721" stop-color="#aafa00"/><stop offset="0.7799" stop-color="#2eee11"/><stop offset="0.7826" stop-color="#12eb1e"/><stop offset="0.7904" stop-color="#04ef76"/><stop offset="0.8008" stop-color="#00f0dd"/><stop offset="0.8060" stop-color="#00eaff"/><stop offset="0.8346" stop-color="#006eff"/><stop offset="0.8607" stop-color="#001fff"/><stop offset="0.8763" stop-color="#0001ff"/><stop offset="0.9570" stop-color="#0000a2"/><stop offset="0.9987" stop-color="#000083"/></linearGradient><linearGradient id="h11" gradientUnits="userSpaceOnUse" x1="0" y1="0" x2="0" y2="384"><stop offset="0.0013" stop-color="#000000"/><stop offset="0.6029" stop-color="#000000"/><stop offset="0.6055" stop-color="#000006"/><stop offset="0.6237" stop-color="#0000d9"/><stop offset="0.6315" stop-color="#0000ff"/><stop offset="0.6393" stop-color="#0041ff"/><stop offset="0.6523" stop-color="#00d9ff"/><stop offset="0.6549" stop-color="#00f0ee"/><stop offset="0.6654" stop-color="#12eb1f"/><stop offset="0.6706" stop-color="#86f605"/><stop offset="0.6758" stop-color="#f3fe00"/><stop offset="0.6784" stop-color="#ffdb00"/><stop offset="0.6862" stop-color="#ff5300"/><stop offset="0.6914" stop-color="#ff1200"/><stop offset="0.6992" stop-color="#f80700"/><stop offset="0.7331" stop-color="#f50500"/><stop offset="0.7461" stop-color="#ff1000"/><stop offset="0.7643" stop-color="#fff000"/><stop offset="0.7669" stop-color="#edfe00"/><stop offset="0.7721" stop-color="#aafa00"/><stop offset="0.7799" stop-color="#2eee11"/><stop offset="0.7826" stop-color="#12eb1f"/><stop offset="0.7904" stop-color="#04ef76"/><stop offset="0.8008" stop-color="#00f0dd"/><stop offset="0.8060" stop-color="#00eaff"/><stop offset="0.8346" stop-color="#006eff"/><stop offset="0.8607" stop-color="#001fff"/><stop offset="0.8763" stop-color="#0001ff"/><stop offset="0.9570" stop-color="#0000a2"/><stop offset="0.9987" stop-color="#000083"/></linearGradient><linearGradient id="h12" gradientUnits="userSpaceOnUse" x1="0" y1="0" x2="0" y2="384"><stop offset="0.0013" stop-color="#000000"/><stop offset="0.5951" stop-color="#000000"/><stop offset="0.5977" stop-color="#000006"/><stop offset="0.6081" stop-color="#000093"/><stop offset="0.6159" stop-color="#0000e4"/><stop offset="0.6315" stop-color="#0008ff"/><stop offset="0.6393" stop-color="#0044ff"/><stop offset="0.6523" stop-color="#00d9ff"/><stop offset="0.6549" stop-color="#00f0ee"/><stop offset="0.6654" stop-color="#12eb1f"/><stop offset="0.6706" stop-color="#86f605"/><stop offset="0.6758" stop-color="#f3fe00"/><stop offset="0.6784" stop-color="#ffdb00"/><stop offset="0.6862" stop-color="#ff5400"/><stop offset="0.6914" stop-color="#ff1300"/><stop offset="0.6992" stop-color="#f80700"/><stop offset="0.7305" stop-color="#f40500"/><stop offset="0.7461" stop-color="#ff1100"/><stop offset="0.7643" stop-color="#fff100"/><stop offset="0.7669" stop-color="#ecfe00"/><stop offset="0.7721" stop-color="#aafa00"/><stop offset="0.7799" stop-color="#2dee11"/><stop offset="0.7826" stop-color="#12eb1f"/><stop offset="0.7904" stop-color="#04ef77"/><stop offset="0.8008" stop-color="#00f0de"/><stop offset="0.8060" stop-color="#00eaff"/><stop offset="0.8346" stop-color="#006eff"/><stop offset="0.8607" stop-color="#001fff"/><stop offset="0.8763" stop-color="#0001ff"/><stop offset="0.9570" stop-color="#0000a1"/><stop offset="0.9987" stop-color="#000083"/></linearGradient><linearGradient id="h13" gradientUnits="userSpaceOnUse" x1="0" y1="0" x2="0" y2="384"><stop offset="0.0013" stop-color="#000000"/><stop offset="0.5872" stop-color="#000000"/><stop offset="0.5898" stop-color="#000012"/><stop offset="0.6055" stop-color="#0000e2"/><stop offset="0.6081" stop-color="#0000f2"/><stop offset="0.6263" stop-color="#0001ff"/><stop offset="0.6341" stop-color="#0021ff"/><stop offset="0.6393" stop-color="#0049ff"/><stop offset="0.6523" stop-color="#00daff"/><stop offset="0.6549" stop-color="#00f0ee"/><stop offset="0.6654" stop-color="#12eb20"/><stop offset="0.6706" stop-color="#85f605"/><stop offset="0.6758" stop-color="#f2fe00"/><stop offset="0.6784" stop-color="#ffdb00"/><stop offset="0.6862" stop-color="#ff5400"/><stop offset="0.6914" stop-color="#ff1300"/><stop offset="0.6966" stop-color="#fa0800"/><stop offset="0.7305" stop-color="#f40500"/><stop offset="0.7461" stop-color="#ff1200"/><stop offset="0.7643" stop-color="#fff100"/><stop offset="0.7669" stop-color="#ebfe00"/><stop offset="0.7721" stop-color="#a9fa00"/><stop offset="0.7799" stop-color="#2ced11"/><stop offset="0.7826" stop-color="#12eb20"/><stop offset="0.7904" stop-color="#03ef77"/><stop offset="0.8008" stop-color="#00f0de"/><stop offset="0.8060" stop-color="#00e9ff"/><stop offset="0.8346" stop-color="#006eff"/><stop offset="0.8607" stop-color="#001eff"/><stop offset="0.8763" stop-color="#0000ff"/><stop offset="0.9570" stop-color="#0000a1"/><stop offset="0.9987" stop-color="#000083"/></linearGradient><linearGradient id="h14" gradientUnits="userSpaceOnUse" x1="0" y1="0" x2="0" y2="384"><stop offset="0.0013" stop-color="#000000"/><stop offset="0.5742" stop-color="#000000"/><stop offset="0.5768" stop-color="#000012"/><stop offset="0.5924" stop-color="#0000e3"/><stop offset="0.5951" stop-color="#0000f4"/><stop offset="0.6133" stop-color="#0001ff"/><stop offset="0.6263" stop-color="#0010ff"/><stop offset="0.6341" stop-color="#002cff"/><stop offset="0.6419" stop-color="#0066ff"/><stop offset="0.6523" stop-color="#00dbff"/><stop offset="0.6549" stop-color="#00f0ed"/><stop offset="0.6654" stop-color="#12ec21"/><stop offset="0.6706" stop-color="#84f605"/><stop offset="0.6758" stop-color="#f1fe00"/><stop offset="0.6784" stop-color="#ffdd00"/><stop offset="0.6888" stop-color="#ff3200"/><stop offset="0.6940" stop-color="#fd0900"/><stop offset="0.7305" stop-color="#f50500"/><stop offset="0.7461" stop-color="#ff1300"/><stop offset="0.7643" stop-color="#fff300"/><stop offset="0.7721" stop-color="#a7fa00"/><stop offset="0.7799" stop-color="#2bed11"/><stop offset="0.7826" stop-color="#12ec21"/><stop offset="0.7904" stop-color="#03ef79"/><stop offset="0.8008" stop-color="#00f0df"/><stop offset="0.8060" stop-color="#00e9ff"/><stop offset="0.8346" stop-color="#006dff"/><stop offset="0.8607" stop-color="#001eff"/><stop offset="0.8763" stop-color="#0000ff"/><stop offset="0.9570" stop-color="#0000a1"/><stop offset="0.9987" stop-color="#000082"/></linearGradient><linearGradient id="h15" gradientUnits="userSpaceOnUse" x1="0" y1="0" x2="0" y2="384"><stop offset="0.0013" stop-color="#000000"/><stop offset="0.5690" stop-color="#000000"/><stop offset="0.5716" stop-color="#000012"/><stop offset="0.5872" stop-color="#0000e7"/><stop offset="0.5898" stop-color="#0000f8"/><stop offset="0.6003" stop-color="#0001ff"/><stop offset="0.6315" stop-color="#002cff"/><stop offset="0.6419" stop-color="#006dff"/><stop offset="0.6523" stop-color="#00dcff"/><stop offset="0.6549" stop-color="#00f0ec"/><stop offset="0.6602" stop-color="#00f089"/><stop offset="0.6654" stop-color="#12ec22"/><stop offset="0.6680" stop-color="#42f00e"/><stop offset="0.6758" stop-color="#effe00"/><stop offset="0.6784" stop-color="#ffdf00"/><stop offset="0.6888" stop-color="#ff3500"/><stop offset="0.6940" stop-color="#fe0900"/><stop offset="0.7279" stop-color="#f50500"/><stop offset="0.7435" stop-color="#fd0900"/><stop offset="0.7461" stop-color="#ff1600"/><stop offset="0.7643" stop-color="#fff500"/><stop offset="0.7721" stop-color="#a4f901"/><stop offset="0.7799" stop-color="#28ed11"/><stop offset="0.7826" stop-color="#12ec23"/><stop offset="0.7904" stop-color="#03ef7a"/><stop offset="0.8008" stop-color="#00f0e1"/><stop offset="0.8060" stop-color="#00e8ff"/><stop offset="0.8320" stop-color="#0075ff"/><stop offset="0.8607" stop-color="#001dff"/><stop offset="0.8737" stop-color="#0003ff"/><stop offset="0.9570" stop-color="#0000a0"/><stop offset="0.9987" stop-color="#000082"/></linearGradient><linearGradient id="h16" gradientUnits="userSpaceOnUse" x1="0" y1="0" x2="0" y2="384"><stop offset="0.0013" stop-color="#000000"/><stop offset="0.5612" stop-color="#000000"/><stop offset="0.5794" stop-color="#0000f9"/><stop offset="0.5872" stop-color="#0000ff"/><stop offset="0.6159" stop-color="#001aff"/><stop offset="0.6315" stop-color="#0039ff"/><stop offset="0.6419" stop-color="#0074ff"/><stop offset="0.6523" stop-color="#00deff"/><stop offset="0.6549" stop-color="#00f0eb"/><stop offset="0.6602" stop-color="#00f08a"/><stop offset="0.6654" stop-color="#11ec24"/><stop offset="0.6680" stop-color="#3fef0e"/><stop offset="0.6758" stop-color="#ecfe00"/><stop offset="0.6784" stop-color="#ffe200"/><stop offset="0.6862" stop-color="#ff5d00"/><stop offset="0.6940" stop-color="#ff0a00"/><stop offset="0.7201" stop-color="#f50500"/><stop offset="0.7435" stop-color="#fe0a00"/><stop offset="0.7487" stop-color="#ff3500"/><stop offset="0.7643" stop-color="#fff900"/><stop offset="0.7669" stop-color="#e4fd00"/><stop offset="0.7799" stop-color="#24ed12"/><stop offset="0.7826" stop-color="#11ec26"/><stop offset="0.7982" stop-color="#00f0cc"/><stop offset="0.8034" stop-color="#00f0f9"/><stop offset="0.8060" stop-color="#00e6ff"/><stop offset="0.8320" stop-color="#0074ff"/><stop offset="0.8607" stop-color="#001cff"/><stop offset="0.8737" stop-color="#0002ff"/><stop offset="0.9570" stop-color="#00009f"/><stop offset="0.9987" stop-color="#000081"/></linearGradient><linearGradient id="h17" gradientUnits="userSpaceOnUse" x1="0" y1="0" x2="0" y2="384"><stop offset="0.0013" stop-color="#000000"/><stop offset="0.5508" stop-color="#000000"/><stop offset="0.5534" stop-color="#000013"/><stop offset="0.5690" stop-color="#0000eb"/><stop offset="0.5716" stop-color="#0000fd"/><stop offset="0.5768" stop-color="#0001ff"/><stop offset="0.6133" stop-color="#0022ff"/><stop offset="0.6289" stop-color="#003eff"/><stop offset="0.6419" stop-color="#007dff"/><stop offset="0.6523" stop-color="#00e1ff"/><stop offset="0.6549" stop-color="#00f0e9"/><stop offset="0.6602" stop-color="#00f08b"/><stop offset="0.6654" stop-color="#11ec27"/><stop offset="0.6680" stop-color="#3bef0f"/><stop offset="0.6758" stop-color="#e7fe00"/><stop offset="0.6784" stop-color="#ffe700"/><stop offset="0.6888" stop-color="#ff4000"/><stop offset="0.6940" stop-color="#ff0e00"/><stop offset="0.6966" stop-color="#fd0900"/><stop offset="0.7435" stop-color="#ff0d00"/><stop offset="0.7513" stop-color="#ff5a00"/><stop offset="0.7643" stop-color="#fffe00"/><stop offset="0.7721" stop-color="#98f802"/><stop offset="0.7799" stop-color="#1dec13"/><stop offset="0.7904" stop-color="#02f082"/><stop offset="0.7982" stop-color="#00f0cf"/><stop offset="0.8034" stop-color="#00f0fd"/><stop offset="0.8060" stop-color="#00e4ff"/><stop offset="0.8320" stop-color="#0072ff"/><stop offset="0.8607" stop-color="#001bff"/><stop offset="0.8737" stop-color="#0000ff"/><stop offset="0.9544" stop-color="#0000a1"/><stop offset="0.9987" stop-color="#000080"/></linearGradient><linearGradient id="h18" gradientUnits="userSpaceOnUse" x1="0" y1="0" x2="0" y2="384"><stop offset="0.0013" stop-color="#000000"/><stop offset="0.5456" stop-color="#000000"/><stop offset="0.5482" stop-color="#000013"/><stop offset="0.5638" stop-color="#0000f0"/><stop offset="0.5664" stop-color="#0003ff"/><stop offset="0.6107" stop-color="#002bff"/><stop offset="0.6289" stop-color="#004aff"/><stop offset="0.6419" stop-color="#0086ff"/><stop offset="0.6523" stop-color="#00e4ff"/><stop offset="0.6549" stop-color="#00f0e7"/><stop offset="0.6602" stop-color="#00f08c"/><stop offset="0.6654" stop-color="#10ec2a"/><stop offset="0.6680" stop-color="#35ee10"/><stop offset="0.6732" stop-color="#affa00"/><stop offset="0.6758" stop-color="#e0fd00"/><stop offset="0.6784" stop-color="#ffed00"/><stop offset="0.6888" stop-color="#ff4900"/><stop offset="0.6966" stop-color="#ff0a00"/><stop offset="0.7409" stop-color="#ff0a00"/><stop offset="0.7487" stop-color="#ff4600"/><stop offset="0.7643" stop-color="#f8ff00"/><stop offset="0.7799" stop-color="#14eb14"/><stop offset="0.7930" stop-color="#00f0a3"/><stop offset="0.8034" stop-color="#00eeff"/><stop offset="0.8320" stop-color="#0070ff"/><stop offset="0.8711" stop-color="#0003ff"/><stop offset="0.9544" stop-color="#0000a0"/><stop offset="0.9987" stop-color="#00007f"/></linearGradient><linearGradient id="h19" gradientUnits="userSpaceOnUse" x1="0" y1="0" x2="0" y2="384"><stop offset="0.0013" stop-color="#000000"/><stop offset="0.5326" stop-color="#000000"/><stop offset="0.5352" stop-color="#000013"/><stop offset="0.5508" stop-color="#0000f0"/><stop offset="0.5534" stop-color="#0003ff"/><stop offset="0.6263" stop-color="#0051ff"/><stop offset="0.6393" stop-color="#0080ff"/><stop offset="0.6523" stop-color="#00e7ff"/><stop offset="0.6549" stop-color="#00f0e4"/><stop offset="0.6602" stop-color="#00f08d"/><stop offset="0.6654" stop-color="#10ec2f"/><stop offset="0.6680" stop-color="#2eee11"/><stop offset="0.6732" stop-color="#a7fa00"/><stop offset="0.6784" stop-color="#fff600"/><stop offset="0.6862" stop-color="#ff7900"/><stop offset="0.6914" stop-color="#ff3a00"/><stop offset="0.6966" stop-color="#ff1600"/><stop offset="0.7018" stop-color="#fe0a00"/><stop offset="0.7383" stop-color="#ff0a00"/><stop offset="0.7461" stop-color="#ff3b00"/><stop offset="0.7617" stop-color="#fff000"/><stop offset="0.7643" stop-color="#edfe00"/><stop offset="0.7695" stop-color="#aafa00"/><stop offset="0.7773" stop-color="#2fee10"/><stop offset="0.7799" stop-color="#12eb1e"/><stop offset="0.7956" stop-color="#00f0c4"/><stop offset="0.8034" stop-color="#00e9ff"/><stop offset="0.8320" stop-color="#006cff"/><stop offset="0.8711" stop-color="#0000ff"/><stop offset="0.9518" stop-color="#0000a1"/><stop offset="0.9987" stop-color="#00007d"/></linearGradient><linearGradient id="h20" gradientUnits="userSpaceOnUse" x1="0" y1="0" x2="0" y2="384"><stop offset="0.0013" stop-color="#000000"/><stop offset="0.5247" stop-color="#000000"/><stop offset="0.5273" stop-color="#000006"/><stop offset="0.5378" stop-color="#0000a3"/><stop offset="0.5456" stop-color="#0007ff"/><stop offset="0.5924" stop-color="#0031ff"/><stop offset="0.6263" stop-color="#0060ff"/><stop offset="0.6393" stop-color="#008bff"/><stop offset="0.6523" stop-color="#00eaff"/><stop offset="0.6602" stop-color="#00f08f"/><stop offset="0.6654" stop-color="#0fec34"/><stop offset="0.6680" stop-color="#25ed12"/><stop offset="0.6732" stop-color="#9bf802"/><stop offset="0.6784" stop-color="#feff00"/><stop offset="0.6810" stop-color="#ffd500"/><stop offset="0.6888" stop-color="#ff6500"/><stop offset="0.6966" stop-color="#ff2700"/><stop offset="0.7096" stop-color="#ff0b00"/><stop offset="0.7305" stop-color="#ff0a00"/><stop offset="0.7383" stop-color="#ff1b00"/><stop offset="0.7435" stop-color="#ff3700"/><stop offset="0.7487" stop-color="#ff6500"/><stop offset="0.7617" stop-color="#fffd00"/><stop offset="0.7695" stop-color="#9af802"/><stop offset="0.7773" stop-color="#20ec12"/><stop offset="0.7878" stop-color="#02f080"/><stop offset="0.7982" stop-color="#00f0e5"/><stop offset="0.8008" stop-color="#00f0fc"/><stop offset="0.8034" stop-color="#00e3ff"/><stop offset="0.8294" stop-color="#0071ff"/><stop offset="0.8685" stop-color="#0002ff"/><stop offset="0.9518" stop-color="#00009f"/><stop offset="0.9987" stop-color="#00007c"/></linearGradient><linearGradient id="h21" gradientUnits="userSpaceOnUse" x1="0" y1="0" x2="0" y2="384"><stop offset="0.0013" stop-color="#000000"/><stop offset="0.5169" stop-color="#000000"/><stop offset="0.5195" stop-color="#000014"/><stop offset="0.5352" stop-color="#0000f8"/><stop offset="0.5378" stop-color="#000bff"/><stop offset="0.5872" stop-color="#0039ff"/><stop offset="0.6263" stop-color="#006fff"/><stop offset="0.6393" stop-color="#0097ff"/><stop offset="0.6523" stop-color="#00eeff"/><stop offset="0.6602" stop-color="#00f091"/><stop offset="0.6680" stop-color="#1bec13"/><stop offset="0.6784" stop-color="#f0fe00"/><stop offset="0.6810" stop-color="#ffe200"/><stop offset="0.6888" stop-color="#ff7700"/><stop offset="0.6966" stop-color="#ff3a00"/><stop offset="0.7044" stop-color="#ff2500"/><stop offset="0.7201" stop-color="#ff1900"/><stop offset="0.7331" stop-color="#ff2200"/><stop offset="0.7409" stop-color="#ff3c00"/><stop offset="0.7487" stop-color="#ff7800"/><stop offset="0.7591" stop-color="#ffed00"/><stop offset="0.7617" stop-color="#f0fe00"/><stop offset="0.7669" stop-color="#aefa00"/><stop offset="0.7747" stop-color="#34ee10"/><stop offset="0.7773" stop-color="#13eb19"/><stop offset="0.7904" stop-color="#00f0a7"/><stop offset="0.8008" stop-color="#00ebff"/><stop offset="0.8294" stop-color="#006cff"/><stop offset="0.8685" stop-color="#0000fe"/><stop offset="0.9466" stop-color="#0000a2"/><stop offset="0.9987" stop-color="#00007a"/></linearGradient><linearGradient id="h22" gradientUnits="userSpaceOnUse" x1="0" y1="0" x2="0" y2="384"><stop offset="0.0013" stop-color="#000000"/><stop offset="0.5065" stop-color="#000000"/><stop offset="0.5091" stop-color="#000014"/><stop offset="0.5247" stop-color="#0000f9"/><stop offset="0.5273" stop-color="#000cff"/><stop offset="0.6237" stop-color="#007aff"/><stop offset="0.6393" stop-color="#00a3ff"/><stop offset="0.6497" stop-color="#00ddff"/><stop offset="0.6523" stop-color="#00f0fd"/><stop offset="0.6602" stop-color="#00f093"/><stop offset="0.6680" stop-color="#13eb17"/><stop offset="0.6758" stop-color="#b5fb00"/><stop offset="0.6810" stop-color="#fff000"/><stop offset="0.6888" stop-color="#ff8a00"/><stop offset="0.6966" stop-color="#ff4f00"/><stop offset="0.7174" stop-color="#ff3000"/><stop offset="0.7331" stop-color="#ff3a00"/><stop offset="0.7409" stop-color="#ff5300"/><stop offset="0.7487" stop-color="#ff8e00"/><stop offset="0.7591" stop-color="#ffff00"/><stop offset="0.7747" stop-color="#1fec13"/><stop offset="0.7852" stop-color="#02f080"/><stop offset="0.7956" stop-color="#00f0e5"/><stop offset="0.7982" stop-color="#00f0fc"/><stop offset="0.8008" stop-color="#00e3ff"/><stop offset="0.8294" stop-color="#0066ff"/><stop offset="0.8659" stop-color="#0000ff"/><stop offset="0.9258" stop-color="#0000b5"/><stop offset="0.9987" stop-color="#000078"/></linearGradient><linearGradient id="h23" gradientUnits="userSpaceOnUse" x1="0" y1="0" x2="0" y2="384"><stop offset="0.0013" stop-color="#000000"/><stop offset="0.4987" stop-color="#000000"/><stop offset="0.5013" stop-color="#000007"/><stop offset="0.5169" stop-color="#0000f1"/><stop offset="0.5195" stop-color="#000fff"/><stop offset="0.6211" stop-color="#0087ff"/><stop offset="0.6367" stop-color="#00a8ff"/><stop offset="0.6497" stop-color="#00e4ff"/><stop offset="0.6523" stop-color="#00f0f7"/><stop offset="0.6602" stop-color="#00f095"/><stop offset="0.6680" stop-color="#12eb1f"/><stop offset="0.6706" stop-color="#3aef0f"/><stop offset="0.6758" stop-color="#a8fa00"/><stop offset="0.6810" stop-color="#fffe00"/><stop offset="0.6888" stop-color="#ff9c00"/><stop offset="0.6966" stop-color="#ff6500"/><stop offset="0.7174" stop-color="#ff4900"/><stop offset="0.7383" stop-color="#ff6000"/><stop offset="0.7487" stop-color="#ffa400"/><stop offset="0.7565" stop-color="#fff400"/><stop offset="0.7643" stop-color="#a8fa00"/><stop offset="0.7721" stop-color="#2eee10"/><stop offset="0.7747" stop-color="#12eb1e"/><stop offset="0.7826" stop-color="#04ef75"/><stop offset="0.7956" stop-color="#00f0f2"/><stop offset="0.7982" stop-color="#00e9ff"/><stop offset="0.8268" stop-color="#0069ff"/><stop offset="0.8633" stop-color="#0002ff"/><stop offset="0.9206" stop-color="#0000b7"/><stop offset="0.9987" stop-color="#000075"/></linearGradient><linearGradient id="h24" gradientUnits="userSpaceOnUse" x1="0" y1="0" x2="0" y2="384"><stop offset="0.0013" stop-color="#000000"/><stop offset="0.4883" stop-color="#000000"/><stop offset="0.4909" stop-color="#000014"/><stop offset="0.5065" stop-color="#0000fe"/><stop offset="0.5091" stop-color="#0011ff"/><stop offset="0.6237" stop-color="#009dff"/><stop offset="0.6393" stop-color="#00beff"/><stop offset="0.6497" stop-color="#00ebff"/><stop offset="0.6523" stop-color="#00f0ef"/><stop offset="0.6602" stop-color="#00f095"/><stop offset="0.6680" stop-color="#11ec26"/><stop offset="0.6706" stop-color="#2fee10"/><stop offset="0.6810" stop-color="#f0fe00"/><stop offset="0.6836" stop-color="#ffe800"/><stop offset="0.6888" stop-color="#ffae00"/><stop offset="0.6966" stop-color="#ff7d00"/><stop offset="0.7174" stop-color="#ff6300"/><stop offset="0.7383" stop-color="#ff7b00"/><stop offset="0.7461" stop-color="#ffa600"/><stop offset="0.7539" stop-color="#ffed00"/><stop offset="0.7565" stop-color="#f4fe00"/><stop offset="0.7617" stop-color="#b3fb00"/><stop offset="0.7721" stop-color="#15eb14"/><stop offset="0.7826" stop-color="#01f087"/><stop offset="0.7956" stop-color="#00efff"/><stop offset="0.8060" stop-color="#00b6ff"/><stop offset="0.8268" stop-color="#0062ff"/><stop offset="0.8633" stop-color="#0000fc"/><stop offset="0.9154" stop-color="#0000b9"/><stop offset="0.9987" stop-color="#000073"/></linearGradient><linearGradient id="h25" gradientUnits="userSpaceOnUse" x1="0" y1="0" x2="0" y2="384"><stop offset="0.0013" stop-color="#000000"/><stop offset="0.4779" stop-color="#000000"/><stop offset="0.4805" stop-color="#000014"/><stop offset="0.4961" stop-color="#0000ff"/><stop offset="0.4987" stop-color="#0012ff"/><stop offset="0.6263" stop-color="#00b1ff"/><stop offset="0.6471" stop-color="#00e7ff"/><stop offset="0.6523" stop-color="#00f0e3"/><stop offset="0.6602" stop-color="#00f091"/><stop offset="0.6680" stop-color="#10ec2a"/><stop offset="0.6706" stop-color="#26ed12"/><stop offset="0.6784" stop-color="#b9fb00"/><stop offset="0.6836" stop-color="#fff800"/><stop offset="0.6888" stop-color="#ffc100"/><stop offset="0.6966" stop-color="#ff9300"/><stop offset="0.7174" stop-color="#ff7d00"/><stop offset="0.7383" stop-color="#ff9500"/><stop offset="0.7461" stop-color="#ffbd00"/><stop offset="0.7539" stop-color="#fbff00"/><stop offset="0.7617" stop-color="#98f802"/><stop offset="0.7695" stop-color="#21ec12"/><stop offset="0.7799" stop-color="#02ef7e"/><stop offset="0.7904" stop-color="#00f0e2"/><stop offset="0.7956" stop-color="#00e5ff"/><stop offset="0.8060" stop-color="#00adff"/><stop offset="0.8268" stop-color="#005bff"/><stop offset="0.8607" stop-color="#0000fd"/><stop offset="0.9076" stop-color="#0000bd"/><stop offset="0.9987" stop-color="#000070"/></linearGradient><linearGradient id="h26" gradientUnits="userSpaceOnUse" x1="0" y1="0" x2="0" y2="384"><stop offset="0.0013" stop-color="#000000"/><stop offset="0.4727" stop-color="#000000"/><stop offset="0.4753" stop-color="#000015"/><stop offset="0.4831" stop-color="#000096"/><stop offset="0.4909" stop-color="#0007ff"/><stop offset="0.4935" stop-color="#0019ff"/><stop offset="0.6263" stop-color="#00c1ff"/><stop offset="0.6445" stop-color="#00eaff"/><stop offset="0.6497" stop-color="#00f0e7"/><stop offset="0.6602" stop-color="#00f08a"/><stop offset="0.6706" stop-color="#1fec13"/><stop offset="0.6810" stop-color="#d1fc00"/><stop offset="0.6836" stop-color="#f5fe00"/><stop offset="0.6862" stop-color="#ffec00"/><stop offset="0.6914" stop-color="#ffc100"/><stop offset="0.6992" stop-color="#ffa200"/><stop offset="0.7201" stop-color="#ff9700"/><stop offset="0.7383" stop-color="#ffae00"/><stop offset="0.7435" stop-color="#ffc500"/><stop offset="0.7513" stop-color="#feff00"/><stop offset="0.7591" stop-color="#a3f901"/><stop offset="0.7669" stop-color="#2bed11"/><stop offset="0.7695" stop-color="#12eb1f"/><stop offset="0.7773" stop-color="#04ef76"/><stop offset="0.7904" stop-color="#00f0f1"/><stop offset="0.7930" stop-color="#00eaff"/><stop offset="0.8060" stop-color="#00a4ff"/><stop offset="0.8242" stop-color="#005cff"/><stop offset="0.8581" stop-color="#0000fe"/><stop offset="0.8945" stop-color="#0000c6"/><stop offset="0.9987" stop-color="#00006d"/></linearGradient><linearGradient id="h27" gradientUnits="userSpaceOnUse" x1="0" y1="0" x2="0" y2="384"><stop offset="0.0013" stop-color="#000000"/><stop offset="0.4622" stop-color="#000000"/><stop offset="0.4648" stop-color="#000015"/><stop offset="0.4727" stop-color="#000098"/><stop offset="0.4805" stop-color="#000aff"/><stop offset="0.4831" stop-color="#001dff"/><stop offset="0.5299" stop-color="#004fff"/><stop offset="0.6393" stop-color="#00ecff"/><stop offset="0.6497" stop-color="#00f0d2"/><stop offset="0.6602" stop-color="#02f080"/><stop offset="0.6706" stop-color="#19eb13"/><stop offset="0.6810" stop-color="#c1fb00"/><stop offset="0.6862" stop-color="#fffd00"/><stop offset="0.6966" stop-color="#ffbe00"/><stop offset="0.7148" stop-color="#ffae00"/><stop offset="0.7357" stop-color="#ffc000"/><stop offset="0.7487" stop-color="#fdff00"/><stop offset="0.7565" stop-color="#acfa00"/><stop offset="0.7643" stop-color="#35ee10"/><stop offset="0.7669" stop-color="#13eb17"/><stop offset="0.7773" stop-color="#01f089"/><stop offset="0.7904" stop-color="#00efff"/><stop offset="0.8034" stop-color="#00a7ff"/><stop offset="0.8216" stop-color="#005eff"/><stop offset="0.8555" stop-color="#0000ff"/><stop offset="0.8867" stop-color="#0000ca"/><stop offset="0.9987" stop-color="#00006b"/></linearGradient><linearGradient id="h28" gradientUnits="userSpaceOnUse" x1="0" y1="0" x2="0" y2="384"><stop offset="0.0013" stop-color="#000000"/><stop offset="0.4518" stop-color="#000000"/><stop offset="0.4544" stop-color="#000016"/><stop offset="0.4622" stop-color="#00009a"/><stop offset="0.4674" stop-color="#0000e7"/><stop offset="0.4701" stop-color="#000eff"/><stop offset="0.4727" stop-color="#0021ff"/><stop offset="0.5143" stop-color="#004aff"/><stop offset="0.6315" stop-color="#00efff"/><stop offset="0.6445" stop-color="#00f0d5"/><stop offset="0.6576" stop-color="#00f08c"/><stop offset="0.6706" stop-color="#14eb15"/><stop offset="0.6810" stop-color="#b1fa00"/><stop offset="0.6888" stop-color="#fffa00"/><stop offset="0.6992" stop-color="#ffcd00"/><stop offset="0.7148" stop-color="#ffc500"/><stop offset="0.7331" stop-color="#ffd300"/><stop offset="0.7461" stop-color="#f9ff00"/><stop offset="0.7539" stop-color="#b1fa00"/><stop offset="0.7643" stop-color="#1aec13"/><stop offset="0.7747" stop-color="#02f081"/><stop offset="0.7826" stop-color="#00f0cc"/><stop offset="0.7878" stop-color="#00f0fa"/><stop offset="0.7904" stop-color="#00e4ff"/><stop offset="0.8034" stop-color="#009fff"/><stop offset="0.8216" stop-color="#0057ff"/><stop offset="0.8529" stop-color="#0001ff"/><stop offset="0.8841" stop-color="#0000c8"/><stop offset="0.9987" stop-color="#000068"/></linearGradient><linearGradient id="h29" gradientUnits="userSpaceOnUse" x1="0" y1="0" x2="0" y2="384"><stop offset="0.0013" stop-color="#000000"/><stop offset="0.4440" stop-color="#000000"/><stop offset="0.4596" stop-color="#0000f9"/><stop offset="0.4622" stop-color="#001fff"/><stop offset="0.5117" stop-color="#0056ff"/><stop offset="0.6185" stop-color="#00edff"/><stop offset="0.6445" stop-color="#00f0bd"/><stop offset="0.6602" stop-color="#05ef6f"/><stop offset="0.6706" stop-color="#13eb1a"/><stop offset="0.6836" stop-color="#befb00"/><stop offset="0.6914" stop-color="#fffe00"/><stop offset="0.6992" stop-color="#ffe300"/><stop offset="0.7148" stop-color="#ffdb00"/><stop offset="0.7305" stop-color="#ffe600"/><stop offset="0.7409" stop-color="#feff00"/><stop offset="0.7513" stop-color="#b3fb00"/><stop offset="0.7617" stop-color="#24ed12"/><stop offset="0.7643" stop-color="#11ec25"/><stop offset="0.7721" stop-color="#03ef78"/><stop offset="0.7852" stop-color="#00f0f2"/><stop offset="0.7878" stop-color="#00eaff"/><stop offset="0.8008" stop-color="#00a3ff"/><stop offset="0.8164" stop-color="#0062ff"/><stop offset="0.8503" stop-color="#0002ff"/><stop offset="0.8841" stop-color="#0000c3"/><stop offset="0.9987" stop-color="#000065"/></linearGradient><linearGradient id="h30" gradientUnits="userSpaceOnUse" x1="0" y1="0" x2="0" y2="384"><stop offset="0.0013" stop-color="#000000"/><stop offset="0.4310" stop-color="#000000"/><stop offset="0.4466" stop-color="#0000fd"/><stop offset="0.4492" stop-color="#0023ff"/><stop offset="0.5065" stop-color="#005fff"/><stop offset="0.6081" stop-color="#00f0ff"/><stop offset="0.6471" stop-color="#00f0a1"/><stop offset="0.6628" stop-color="#08ee5a"/><stop offset="0.6706" stop-color="#12ec21"/><stop offset="0.6732" stop-color="#21ec12"/><stop offset="0.6836" stop-color="#acfa00"/><stop offset="0.6914" stop-color="#eafe00"/><stop offset="0.6966" stop-color="#fffe00"/><stop offset="0.7122" stop-color="#fff100"/><stop offset="0.7305" stop-color="#fffd00"/><stop offset="0.7383" stop-color="#effe00"/><stop offset="0.7487" stop-color="#b3fb00"/><stop offset="0.7591" stop-color="#2eee11"/><stop offset="0.7617" stop-color="#13eb1c"/><stop offset="0.7669" stop-color="#09ee55"/><stop offset="0.7852" stop-color="#00f0ff"/><stop offset="0.8112" stop-color="#006fff"/><stop offset="0.8477" stop-color="#0002ff"/><stop offset="0.8815" stop-color="#0000c1"/><stop offset="0.9987" stop-color="#000062"/></linearGradient><linearGradient id="h31" gradientUnits="userSpaceOnUse" x1="0" y1="0" x2="0" y2="384"><stop offset="0.0013" stop-color="#000000"/><stop offset="0.4154" stop-color="#000000"/><stop offset="0.4310" stop-color="#0000f5"/><stop offset="0.4336" stop-color="#001bff"/><stop offset="0.5065" stop-color="#0070ff"/><stop offset="0.5951" stop-color="#00efff"/><stop offset="0.6497" stop-color="#00f08c"/><stop offset="0.6628" stop-color="#09ee59"/><stop offset="0.6732" stop-color="#14eb14"/><stop offset="0.6862" stop-color="#b0fa00"/><stop offset="0.6914" stop-color="#d4fc00"/><stop offset="0.6992" stop-color="#effe00"/><stop offset="0.7122" stop-color="#f7ff00"/><stop offset="0.7305" stop-color="#e9fe00"/><stop offset="0.7409" stop-color="#cdfc00"/><stop offset="0.7487" stop-color="#97f803"/><stop offset="0.7591" stop-color="#14eb14"/><stop offset="0.7747" stop-color="#00f0b2"/><stop offset="0.7826" stop-color="#00f0f6"/><stop offset="0.7852" stop-color="#00e7ff"/><stop offset="0.8112" stop-color="#0068ff"/><stop offset="0.8451" stop-color="#0003ff"/><stop offset="0.8815" stop-color="#0000bd"/><stop offset="0.9987" stop-color="#00005f"/></linearGradient><linearGradient id="h32" gradientUnits="userSpaceOnUse" x1="0" y1="0" x2="0" y2="384"><stop offset="0.0013" stop-color="#000000"/><stop offset="0.4023" stop-color="#000000"/><stop offset="0.4049" stop-color="#000014"/><stop offset="0.4128" stop-color="#000093"/><stop offset="0.4206" stop-color="#0006ff"/><stop offset="0.4232" stop-color="#0019ff"/><stop offset="0.5820" stop-color="#00efff"/><stop offset="0.6133" stop-color="#00f0bb"/><stop offset="0.6497" stop-color="#02f082"/><stop offset="0.6628" stop-color="#08ee5b"/><stop offset="0.6732" stop-color="#12eb1f"/><stop offset="0.6758" stop-color="#21ec12"/><stop offset="0.6862" stop-color="#99f802"/><stop offset="0.6940" stop-color="#cafc00"/><stop offset="0.7122" stop-color="#e0fd00"/><stop offset="0.7305" stop-color="#d2fc00"/><stop offset="0.7409" stop-color="#b5fb00"/><stop offset="0.7487" stop-color="#7af506"/><stop offset="0.7565" stop-color="#1eec13"/><stop offset="0.7695" stop-color="#00f091"/><stop offset="0.7826" stop-color="#00eeff"/><stop offset="0.8112" stop-color="#0063ff"/><stop offset="0.8294" stop-color="#0024ff"/><stop offset="0.8451" stop-color="#0000fc"/><stop offset="0.8815" stop-color="#0000b8"/><stop offset="0.9987" stop-color="#00005c"/></linearGradient><linearGradient id="h33" gradientUnits="userSpaceOnUse" x1="0" y1="0" x2="0" y2="384"><stop offset="0.0013" stop-color="#000000"/><stop offset="0.3919" stop-color="#000000"/><stop offset="0.3945" stop-color="#000014"/><stop offset="0.4102" stop-color="#0003ff"/><stop offset="0.4128" stop-color="#0016ff"/><stop offset="0.5690" stop-color="#00efff"/><stop offset="0.6029" stop-color="#00f0b7"/><stop offset="0.6523" stop-color="#03ef7a"/><stop offset="0.6628" stop-color="#08ee5f"/><stop offset="0.6758" stop-color="#14eb15"/><stop offset="0.6862" stop-color="#81f605"/><stop offset="0.6940" stop-color="#b5fb00"/><stop offset="0.7122" stop-color="#c9fc00"/><stop offset="0.7383" stop-color="#a9fa00"/><stop offset="0.7461" stop-color="#77f507"/><stop offset="0.7539" stop-color="#25ed12"/><stop offset="0.7565" stop-color="#12eb20"/><stop offset="0.7669" stop-color="#01f088"/><stop offset="0.7799" stop-color="#00f0f8"/><stop offset="0.7826" stop-color="#00e6ff"/><stop offset="0.8086" stop-color="#0067ff"/><stop offset="0.8424" stop-color="#0000fd"/><stop offset="0.8789" stop-color="#0000b7"/><stop offset="0.9987" stop-color="#000059"/></linearGradient><linearGradient id="h34" gradientUnits="userSpaceOnUse" x1="0" y1="0" x2="0" y2="384"><stop offset="0.0013" stop-color="#000000"/><stop offset="0.3789" stop-color="#000000"/><stop offset="0.3815" stop-color="#000013"/><stop offset="0.3971" stop-color="#0000f8"/><stop offset="0.3997" stop-color="#000dff"/><stop offset="0.5560" stop-color="#00edff"/><stop offset="0.5977" stop-color="#00f0aa"/><stop offset="0.6523" stop-color="#03ef7a"/><stop offset="0.6628" stop-color="#07ee62"/><stop offset="0.6784" stop-color="#1dec13"/><stop offset="0.6862" stop-color="#6af409"/><stop offset="0.6940" stop-color="#9df902"/><stop offset="0.7122" stop-color="#b3fb00"/><stop offset="0.7279" stop-color="#a8fa00"/><stop offset="0.7383" stop-color="#8df704"/><stop offset="0.7461" stop-color="#5cf20a"/><stop offset="0.7539" stop-color="#13eb1a"/><stop offset="0.7669" stop-color="#00f096"/><stop offset="0.7799" stop-color="#00edff"/><stop offset="0.8086" stop-color="#0062ff"/><stop offset="0.8398" stop-color="#0000ff"/><stop offset="0.8789" stop-color="#0000b3"/><stop offset="0.9987" stop-color="#000056"/></linearGradient><linearGradient id="h35" gradientUnits="userSpaceOnUse" x1="0" y1="0" x2="0" y2="384"><stop offset="0.0013" stop-color="#000000"/><stop offset="0.3737" stop-color="#000000"/><stop offset="0.3763" stop-color="#000013"/><stop offset="0.3919" stop-color="#0000f8"/><stop offset="0.3945" stop-color="#000dff"/><stop offset="0.4701" stop-color="#008cff"/><stop offset="0.5456" stop-color="#00f0ff"/><stop offset="0.5690" stop-color="#00f0c5"/><stop offset="0.5924" stop-color="#00f09f"/><stop offset="0.6497" stop-color="#03ef7c"/><stop offset="0.6628" stop-color="#06ee66"/><stop offset="0.6706" stop-color="#0bed49"/><stop offset="0.6784" stop-color="#13eb19"/><stop offset="0.6810" stop-color="#25ed12"/><stop offset="0.6888" stop-color="#67f309"/><stop offset="0.6940" stop-color="#82f605"/><stop offset="0.7122" stop-color="#98f802"/><stop offset="0.7357" stop-color="#7af506"/><stop offset="0.7435" stop-color="#54f10b"/><stop offset="0.7513" stop-color="#14eb17"/><stop offset="0.7747" stop-color="#00f0e5"/><stop offset="0.7799" stop-color="#00e5ff"/><stop offset="0.8060" stop-color="#0067ff"/><stop offset="0.8372" stop-color="#0001ff"/><stop offset="0.8789" stop-color="#0000b0"/><stop offset="0.9622" stop-color="#000066"/><stop offset="0.9987" stop-color="#000053"/></linearGradient><linearGradient id="h36" gradientUnits="userSpaceOnUse" x1="0" y1="0" x2="0" y2="384"><stop offset="0.0013" stop-color="#000000"/><stop offset="0.3685" stop-color="#000000"/><stop offset="0.3867" stop-color="#0003ff"/><stop offset="0.4674" stop-color="#0099ff"/><stop offset="0.5352" stop-color="#00f0fc"/><stop offset="0.5794" stop-color="#00f09f"/><stop offset="0.6055" stop-color="#01f088"/><stop offset="0.6523" stop-color="#03ef7a"/><stop offset="0.6706" stop-color="#0aed50"/><stop offset="0.6810" stop-color="#14eb14"/><stop offset="0.6940" stop-color="#68f309"/><stop offset="0.7122" stop-color="#7bf506"/><stop offset="0.7357" stop-color="#5ef20a"/><stop offset="0.7487" stop-color="#13eb17"/><stop offset="0.7617" stop-color="#01f086"/><stop offset="0.7773" stop-color="#00ebff"/><stop offset="0.8060" stop-color="#0061ff"/><stop offset="0.8372" stop-color="#0000fc"/><stop offset="0.8789" stop-color="#0000ad"/><stop offset="0.9596" stop-color="#000065"/><stop offset="0.9987" stop-color="#000051"/></linearGradient><linearGradient id="h37" gradientUnits="userSpaceOnUse" x1="0" y1="0" x2="0" y2="384"><stop offset="0.0013" stop-color="#000000"/><stop offset="0.3607" stop-color="#000000"/><stop offset="0.3633" stop-color="#000013"/><stop offset="0.3789" stop-color="#0000f2"/><stop offset="0.3815" stop-color="#0007ff"/><stop offset="0.4674" stop-color="#00aaff"/><stop offset="0.5221" stop-color="#00f0fe"/><stop offset="0.5482" stop-color="#00f0c0"/><stop offset="0.5742" stop-color="#00f096"/><stop offset="0.6523" stop-color="#03ef7a"/><stop offset="0.6680" stop-color="#07ee60"/><stop offset="0.6836" stop-color="#16eb14"/><stop offset="0.6940" stop-color="#4ff10c"/><stop offset="0.7096" stop-color="#60f30a"/><stop offset="0.7305" stop-color="#4ef10c"/><stop offset="0.7461" stop-color="#13eb1b"/><stop offset="0.7747" stop-color="#00efff"/><stop offset="0.8060" stop-color="#005aff"/><stop offset="0.8346" stop-color="#0000fe"/><stop offset="0.8789" stop-color="#0000aa"/><stop offset="0.9596" stop-color="#000062"/><stop offset="0.9987" stop-color="#00004e"/></linearGradient><linearGradient id="h38" gradientUnits="userSpaceOnUse" x1="0" y1="0" x2="0" y2="384"><stop offset="0.0013" stop-color="#000000"/><stop offset="0.3398" stop-color="#000000"/><stop offset="0.3424" stop-color="#000011"/><stop offset="0.3581" stop-color="#0000de"/><stop offset="0.3607" stop-color="#0000f0"/><stop offset="0.3711" stop-color="#0000fd"/><stop offset="0.4596" stop-color="#00acff"/><stop offset="0.5091" stop-color="#00f0fc"/><stop offset="0.5430" stop-color="#00f0b3"/><stop offset="0.5690" stop-color="#00f08f"/><stop offset="0.6602" stop-color="#04ef75"/><stop offset="0.6732" stop-color="#09ee56"/><stop offset="0.6862" stop-color="#14eb15"/><stop offset="0.6940" stop-color="#37ee0f"/><stop offset="0.7174" stop-color="#41ef0e"/><stop offset="0.7409" stop-color="#13eb19"/><stop offset="0.7513" stop-color="#09ee55"/><stop offset="0.7721" stop-color="#00f0fb"/><stop offset="0.7747" stop-color="#00e5ff"/><stop offset="0.8034" stop-color="#005dff"/><stop offset="0.8320" stop-color="#0002ff"/><stop offset="0.8789" stop-color="#0000a8"/><stop offset="0.9570" stop-color="#000062"/><stop offset="0.9987" stop-color="#00004b"/></linearGradient><linearGradient id="h39" gradientUnits="userSpaceOnUse" x1="0" y1="0" x2="0" y2="384"><stop offset="0.0013" stop-color="#000000"/><stop offset="0.3216" stop-color="#000000"/><stop offset="0.3242" stop-color="#000010"/><stop offset="0.3398" stop-color="#0000ca"/><stop offset="0.3424" stop-color="#0000dc"/><stop offset="0.3685" stop-color="#0001ff"/><stop offset="0.3971" stop-color="#0034ff"/><stop offset="0.4414" stop-color="#009bff"/><stop offset="0.4935" stop-color="#00f0fb"/><stop offset="0.5352" stop-color="#00f0ac"/><stop offset="0.5612" stop-color="#00f08c"/><stop offset="0.6628" stop-color="#03ef77"/><stop offset="0.6732" stop-color="#07ee60"/><stop offset="0.6888" stop-color="#13eb1a"/><stop offset="0.6940" stop-color="#1fec13"/><stop offset="0.7070" stop-color="#29ed11"/><stop offset="0.7279" stop-color="#15eb14"/><stop offset="0.7383" stop-color="#11ec28"/><stop offset="0.7487" stop-color="#08ee5a"/><stop offset="0.7695" stop-color="#00f0f9"/><stop offset="0.7721" stop-color="#00e6ff"/><stop offset="0.8034" stop-color="#0055ff"/><stop offset="0.8320" stop-color="#0000fc"/><stop offset="0.8789" stop-color="#0000a7"/><stop offset="0.9570" stop-color="#00005f"/><stop offset="0.9987" stop-color="#000049"/></linearGradient><linearGradient id="h40" gradientUnits="userSpaceOnUse" x1="0" y1="0" x2="0" y2="384"><stop offset="0.0013" stop-color="#000000"/><stop offset="0.3008" stop-color="#000000"/><stop offset="0.3034" stop-color="#000010"/><stop offset="0.3138" stop-color="#000086"/><stop offset="0.3216" stop-color="#0000bc"/><stop offset="0.3320" stop-color="#0000de"/><stop offset="0.3633" stop-color="#0001ff"/><stop offset="0.3945" stop-color="#0038ff"/><stop offset="0.4388" stop-color="#00a6ff"/><stop offset="0.4805" stop-color="#00f0f9"/><stop offset="0.5091" stop-color="#00f0c1"/><stop offset="0.5534" stop-color="#00f089"/><stop offset="0.6628" stop-color="#02ef7d"/><stop offset="0.6732" stop-color="#06ef6a"/><stop offset="0.6914" stop-color="#11ec25"/><stop offset="0.6992" stop-color="#13eb1a"/><stop offset="0.7201" stop-color="#11ec24"/><stop offset="0.7383" stop-color="#0ced43"/><stop offset="0.7487" stop-color="#04ef74"/><stop offset="0.7669" stop-color="#00f0fa"/><stop offset="0.7695" stop-color="#00e6ff"/><stop offset="0.8008" stop-color="#0056ff"/><stop offset="0.8294" stop-color="#0000ff"/><stop offset="0.8555" stop-color="#0000c7"/><stop offset="0.8789" stop-color="#0000a6"/><stop offset="0.9570" stop-color="#00005d"/><stop offset="0.9987" stop-color="#000047"/></linearGradient><linearGradient id="h41" gradientUnits="userSpaceOnUse" x1="0" y1="0" x2="0" y2="384"><stop offset="0.0013" stop-color="#000000"/><stop offset="0.2643" stop-color="#000000"/><stop offset="0.2669" stop-color="#000010"/><stop offset="0.2773" stop-color="#000086"/><stop offset="0.2930" stop-color="#0000d6"/><stop offset="0.3268" stop-color="#0000ff"/><stop offset="0.3815" stop-color="#0027ff"/><stop offset="0.4362" stop-color="#00aeff"/><stop offset="0.4701" stop-color="#00f0fb"/><stop offset="0.4935" stop-color="#00f0c0"/><stop offset="0.5352" stop-color="#00f08e"/><stop offset="0.5924" stop-color="#02ef7f"/><stop offset="0.6602" stop-color="#01f085"/><stop offset="0.6706" stop-color="#03ef79"/><stop offset="0.6888" stop-color="#0ded3e"/><stop offset="0.6992" stop-color="#0fec30"/><stop offset="0.7201" stop-color="#0ded3e"/><stop offset="0.7383" stop-color="#07ee60"/><stop offset="0.7487" stop-color="#00f090"/><stop offset="0.7643" stop-color="#00f0fe"/><stop offset="0.7982" stop-color="#0056ff"/><stop offset="0.8268" stop-color="#0001ff"/><stop offset="0.8763" stop-color="#0000a8"/><stop offset="0.9544" stop-color="#00005d"/><stop offset="0.9987" stop-color="#000045"/></linearGradient><linearGradient id="h42" gradientUnits="userSpaceOnUse" x1="0" y1="0" x2="0" y2="384"><stop offset="0.0013" stop-color="#000000"/><stop offset="0.2513" stop-color="#000000"/><stop offset="0.2539" stop-color="#000010"/><stop offset="0.2643" stop-color="#000086"/><stop offset="0.2799" stop-color="#0000d6"/><stop offset="0.3138" stop-color="#0000ff"/><stop offset="0.3451" stop-color="#001dff"/><stop offset="0.3763" stop-color="#0027ff"/><stop offset="0.4622" stop-color="#00f0f8"/><stop offset="0.4857" stop-color="#00f0b7"/><stop offset="0.5195" stop-color="#00f090"/><stop offset="0.5872" stop-color="#02ef7f"/><stop offset="0.6628" stop-color="#00f08a"/><stop offset="0.6732" stop-color="#02ef7e"/><stop offset="0.6914" stop-color="#0bed4d"/><stop offset="0.6992" stop-color="#0bed47"/><stop offset="0.7201" stop-color="#09ee59"/><stop offset="0.7357" stop-color="#04ef77"/><stop offset="0.7461" stop-color="#00f09f"/><stop offset="0.7591" stop-color="#00f0f3"/><stop offset="0.7617" stop-color="#00ecff"/><stop offset="0.7982" stop-color="#004bff"/><stop offset="0.8268" stop-color="#0000fb"/><stop offset="0.8763" stop-color="#0000a8"/><stop offset="0.9544" stop-color="#00005c"/><stop offset="0.9987" stop-color="#000043"/></linearGradient><linearGradient id="h43" gradientUnits="userSpaceOnUse" x1="0" y1="0" x2="0" y2="384"><stop offset="0.0013" stop-color="#000000"/><stop offset="0.2591" stop-color="#000000"/><stop offset="0.2617" stop-color="#000010"/><stop offset="0.2721" stop-color="#000086"/><stop offset="0.2878" stop-color="#0000d6"/><stop offset="0.3216" stop-color="#0000ff"/><stop offset="0.3789" stop-color="#0036ff"/><stop offset="0.4518" stop-color="#00f0fe"/><stop offset="0.4805" stop-color="#00f0ad"/><stop offset="0.5065" stop-color="#00f08e"/><stop offset="0.5820" stop-color="#02ef7f"/><stop offset="0.6628" stop-color="#00f091"/><stop offset="0.6966" stop-color="#07ee5f"/><stop offset="0.7174" stop-color="#04ef72"/><stop offset="0.7357" stop-color="#00f096"/><stop offset="0.7461" stop-color="#00f0bd"/><stop offset="0.7565" stop-color="#00f0fd"/><stop offset="0.7930" stop-color="#0053ff"/><stop offset="0.8242" stop-color="#0000fc"/><stop offset="0.8763" stop-color="#0000a7"/><stop offset="0.9544" stop-color="#00005b"/><stop offset="0.9987" stop-color="#000042"/></linearGradient><linearGradient id="h44" gradientUnits="userSpaceOnUse" x1="0" y1="0" x2="0" y2="384"><stop offset="0.0013" stop-color="#000000"/><stop offset="0.2617" stop-color="#000000"/><stop offset="0.2643" stop-color="#000005"/><stop offset="0.2747" stop-color="#000081"/><stop offset="0.2930" stop-color="#0000dd"/><stop offset="0.3242" stop-color="#0000fe"/><stop offset="0.3555" stop-color="#001cff"/><stop offset="0.3815" stop-color="#0046ff"/><stop offset="0.4466" stop-color="#00f0f9"/><stop offset="0.4701" stop-color="#00f0af"/><stop offset="0.4987" stop-color="#00f089"/><stop offset="0.5794" stop-color="#02ef7f"/><stop offset="0.6680" stop-color="#00f09a"/><stop offset="0.6966" stop-color="#03ef78"/><stop offset="0.7331" stop-color="#00f0af"/><stop offset="0.7513" stop-color="#00f0fa"/><stop offset="0.7904" stop-color="#0050ff"/><stop offset="0.8216" stop-color="#0000fd"/><stop offset="0.8737" stop-color="#0000aa"/><stop offset="0.9544" stop-color="#00005b"/><stop offset="0.9987" stop-color="#000041"/></linearGradient><linearGradient id="h45" gradientUnits="userSpaceOnUse" x1="0" y1="0" x2="0" y2="384"><stop offset="0.0013" stop-color="#000000"/><stop offset="0.2669" stop-color="#000000"/><stop offset="0.2695" stop-color="#000010"/><stop offset="0.2799" stop-color="#000086"/><stop offset="0.2956" stop-color="#0000d6"/><stop offset="0.3294" stop-color="#0000ff"/><stop offset="0.3424" stop-color="#000cff"/><stop offset="0.3867" stop-color="#005eff"/><stop offset="0.4414" stop-color="#00f0fa"/><stop offset="0.4570" stop-color="#00f0bb"/><stop offset="0.4805" stop-color="#00f08f"/><stop offset="0.5586" stop-color="#02ef7f"/><stop offset="0.6367" stop-color="#00f091"/><stop offset="0.6680" stop-color="#00f0a8"/><stop offset="0.6966" stop-color="#00f092"/><stop offset="0.7305" stop-color="#00f0ca"/><stop offset="0.7461" stop-color="#00f0fe"/><stop offset="0.7852" stop-color="#0055ff"/><stop offset="0.8190" stop-color="#0000fc"/><stop offset="0.8737" stop-color="#0000aa"/><stop offset="0.9544" stop-color="#00005b"/><stop offset="0.9987" stop-color="#000040"/></linearGradient><linearGradient id="h46" gradientUnits="userSpaceOnUse" x1="0" y1="0" x2="0" y2="384"><stop offset="0.0013" stop-color="#000000"/><stop offset="0.2721" stop-color="#000000"/><stop offset="0.2747" stop-color="#000010"/><stop offset="0.2852" stop-color="#000086"/><stop offset="0.3008" stop-color="#0000d6"/><stop offset="0.3320" stop-color="#0000fc"/><stop offset="0.3529" stop-color="#0033ff"/><stop offset="0.3919" stop-color="#0077ff"/><stop offset="0.4362" stop-color="#00f0fd"/><stop offset="0.4544" stop-color="#00f0b1"/><stop offset="0.4727" stop-color="#00f08e"/><stop offset="0.5456" stop-color="#02ef7f"/><stop offset="0.6289" stop-color="#00f094"/><stop offset="0.6706" stop-color="#00f0b7"/><stop offset="0.6940" stop-color="#00f0ac"/><stop offset="0.7383" stop-color="#00efff"/><stop offset="0.7826" stop-color="#004fff"/><stop offset="0.8138" stop-color="#0001ff"/><stop offset="0.8685" stop-color="#0000ae"/><stop offset="0.9544" stop-color="#00005b"/><stop offset="0.9987" stop-color="#000040"/></linearGradient><linearGradient id="h47" gradientUnits="userSpaceOnUse" x1="0" y1="0" x2="0" y2="384"><stop offset="0.0013" stop-color="#000000"/><stop offset="0.2721" stop-color="#000000"/><stop offset="0.2747" stop-color="#000010"/><stop offset="0.2852" stop-color="#000086"/><stop offset="0.3008" stop-color="#0000d6"/><stop offset="0.3294" stop-color="#0000ff"/><stop offset="0.3503" stop-color="#003eff"/><stop offset="0.3893" stop-color="#0080ff"/><stop offset="0.4310" stop-color="#00efff"/><stop offset="0.4336" stop-color="#00f0f4"/><stop offset="0.4492" stop-color="#00f0b2"/><stop offset="0.4674" stop-color="#00f08b"/><stop offset="0.5378" stop-color="#02ef7f"/><stop offset="0.6289" stop-color="#00f09b"/><stop offset="0.6706" stop-color="#00f0c9"/><stop offset="0.6966" stop-color="#00f0cb"/><stop offset="0.7227" stop-color="#00f0fc"/><stop offset="0.7435" stop-color="#00caff"/><stop offset="0.7773" stop-color="#0051ff"/><stop offset="0.8086" stop-color="#0004ff"/><stop offset="0.8659" stop-color="#0000b0"/><stop offset="0.9544" stop-color="#00005c"/><stop offset="0.9987" stop-color="#000040"/></linearGradient><linearGradient id="h48" gradientUnits="userSpaceOnUse" x1="0" y1="0" x2="0" y2="384"><stop offset="0.0013" stop-color="#000000"/><stop offset="0.2721" stop-color="#000000"/><stop offset="0.2747" stop-color="#000010"/><stop offset="0.2852" stop-color="#000086"/><stop offset="0.3008" stop-color="#0000d6"/><stop offset="0.3242" stop-color="#0000fa"/><stop offset="0.3503" stop-color="#0051ff"/><stop offset="0.3893" stop-color="#0090ff"/><stop offset="0.4284" stop-color="#00f0f9"/><stop offset="0.4440" stop-color="#00f0b4"/><stop offset="0.4596" stop-color="#00f08d"/><stop offset="0.5195" stop-color="#02ef7f"/><stop offset="0.6159" stop-color="#00f09b"/><stop offset="0.7070" stop-color="#00f0fe"/><stop offset="0.7409" stop-color="#00b9ff"/><stop offset="0.7773" stop-color="#0042ff"/><stop offset="0.8060" stop-color="#0000ff"/><stop offset="0.8529" stop-color="#0000ba"/><stop offset="0.9544" stop-color="#00005d"/><stop offset="0.9987" stop-color="#000041"/></linearGradient><linearGradient id="h49" gradientUnits="userSpaceOnUse" x1="0" y1="0" x2="0" y2="384"><stop offset="0.0013" stop-color="#000000"/><stop offset="0.2695" stop-color="#000000"/><stop offset="0.2799" stop-color="#000079"/><stop offset="0.2982" stop-color="#0000da"/><stop offset="0.3216" stop-color="#0000fe"/><stop offset="0.3477" stop-color="#005eff"/><stop offset="0.3893" stop-color="#00a1ff"/><stop offset="0.4232" stop-color="#00f0fe"/><stop offset="0.4388" stop-color="#00f0b7"/><stop offset="0.4544" stop-color="#00f08e"/><stop offset="0.5039" stop-color="#02ef7f"/><stop offset="0.6029" stop-color="#00f09b"/><stop offset="0.6445" stop-color="#00f0c1"/><stop offset="0.6732" stop-color="#00f0f9"/><stop offset="0.6914" stop-color="#00ecff"/><stop offset="0.7383" stop-color="#00a7ff"/><stop offset="0.7747" stop-color="#003aff"/><stop offset="0.8008" stop-color="#0000ff"/><stop offset="0.8424" stop-color="#0000c0"/><stop offset="0.9987" stop-color="#000041"/></linearGradient><linearGradient id="h50" gradientUnits="userSpaceOnUse" x1="0" y1="0" x2="0" y2="384"><stop offset="0.0013" stop-color="#000000"/><stop offset="0.2643" stop-color="#000000"/><stop offset="0.2669" stop-color="#000010"/><stop offset="0.2773" stop-color="#000086"/><stop offset="0.2930" stop-color="#0000d6"/><stop offset="0.3164" stop-color="#0000f6"/><stop offset="0.3451" stop-color="#006dff"/><stop offset="0.3841" stop-color="#00a9ff"/><stop offset="0.4180" stop-color="#00efff"/><stop offset="0.4206" stop-color="#00f0f5"/><stop offset="0.4362" stop-color="#00f0b2"/><stop offset="0.4518" stop-color="#00f08b"/><stop offset="0.4961" stop-color="#02ef7f"/><stop offset="0.5924" stop-color="#00f09c"/><stop offset="0.6419" stop-color="#00f0ce"/><stop offset="0.6628" stop-color="#00f0ff"/><stop offset="0.6992" stop-color="#00cdff"/><stop offset="0.7357" stop-color="#0095ff"/><stop offset="0.7956" stop-color="#0000ff"/><stop offset="0.8424" stop-color="#0000bb"/><stop offset="0.9987" stop-color="#000042"/></linearGradient><linearGradient id="h51" gradientUnits="userSpaceOnUse" x1="0" y1="0" x2="0" y2="384"><stop offset="0.0013" stop-color="#000000"/><stop offset="0.2591" stop-color="#000000"/><stop offset="0.2617" stop-color="#000010"/><stop offset="0.2721" stop-color="#000086"/><stop offset="0.2878" stop-color="#0000d6"/><stop offset="0.3138" stop-color="#0000fa"/><stop offset="0.3346" stop-color="#0062ff"/><stop offset="0.3451" stop-color="#0083ff"/><stop offset="0.4128" stop-color="#00f0ff"/><stop offset="0.4310" stop-color="#00f0b4"/><stop offset="0.4440" stop-color="#00f091"/><stop offset="0.4831" stop-color="#02ef7f"/><stop offset="0.5794" stop-color="#00f09b"/><stop offset="0.6237" stop-color="#00f0c7"/><stop offset="0.6523" stop-color="#00f0fd"/><stop offset="0.7357" stop-color="#007fff"/><stop offset="0.7878" stop-color="#0003ff"/><stop offset="0.8424" stop-color="#0000b5"/><stop offset="0.9987" stop-color="#000042"/></linearGradient><linearGradient id="h52" gradientUnits="userSpaceOnUse" x1="0" y1="0" x2="0" y2="384"><stop offset="0.0013" stop-color="#000000"/><stop offset="0.2669" stop-color="#000000"/><stop offset="0.2773" stop-color="#000079"/><stop offset="0.2799" stop-color="#00008b"/><stop offset="0.2956" stop-color="#0000da"/><stop offset="0.3060" stop-color="#0000e7"/><stop offset="0.3112" stop-color="#0000fd"/><stop offset="0.3320" stop-color="#0070ff"/><stop offset="0.3424" stop-color="#0094ff"/><stop offset="0.4076" stop-color="#00f0f9"/><stop offset="0.4258" stop-color="#00f0b3"/><stop offset="0.4414" stop-color="#00f08d"/><stop offset="0.4805" stop-color="#02ef7f"/><stop offset="0.5690" stop-color="#00f09c"/><stop offset="0.6081" stop-color="#00f0c4"/><stop offset="0.6445" stop-color="#00efff"/><stop offset="0.6732" stop-color="#00b8ff"/><stop offset="0.7383" stop-color="#0066ff"/><stop offset="0.7826" stop-color="#0001ff"/><stop offset="0.8398" stop-color="#0000b1"/><stop offset="0.9987" stop-color="#000042"/></linearGradient><linearGradient id="h53" gradientUnits="userSpaceOnUse" x1="0" y1="0" x2="0" y2="384"><stop offset="0.0013" stop-color="#000000"/><stop offset="0.2695" stop-color="#000000"/><stop offset="0.2799" stop-color="#00007e"/><stop offset="0.2982" stop-color="#0000dc"/><stop offset="0.3034" stop-color="#0000e2"/><stop offset="0.3086" stop-color="#0001ff"/><stop offset="0.3294" stop-color="#007eff"/><stop offset="0.3398" stop-color="#00a5ff"/><stop offset="0.3971" stop-color="#00f0fd"/><stop offset="0.4362" stop-color="#00f08b"/><stop offset="0.4727" stop-color="#02ef7f"/><stop offset="0.5612" stop-color="#00f09f"/><stop offset="0.5951" stop-color="#00f0c2"/><stop offset="0.6315" stop-color="#00efff"/><stop offset="0.6732" stop-color="#00a3ff"/><stop offset="0.7383" stop-color="#0052ff"/><stop offset="0.7747" stop-color="#0003ff"/><stop offset="0.8398" stop-color="#0000aa"/><stop offset="0.9987" stop-color="#000042"/></linearGradient><linearGradient id="h54" gradientUnits="userSpaceOnUse" x1="0" y1="0" x2="0" y2="384"><stop offset="0.0013" stop-color="#000000"/><stop offset="0.2669" stop-color="#000000"/><stop offset="0.2773" stop-color="#00007e"/><stop offset="0.2956" stop-color="#0000dc"/><stop offset="0.3034" stop-color="#0000f1"/><stop offset="0.3060" stop-color="#0003ff"/><stop offset="0.3242" stop-color="#007dff"/><stop offset="0.3346" stop-color="#00aeff"/><stop offset="0.3477" stop-color="#00caff"/><stop offset="0.3815" stop-color="#00f0ff"/><stop offset="0.3997" stop-color="#00f0dd"/><stop offset="0.4258" stop-color="#00f08f"/><stop offset="0.4440" stop-color="#03ef7c"/><stop offset="0.5508" stop-color="#00f0a1"/><stop offset="0.5846" stop-color="#00f0c4"/><stop offset="0.6185" stop-color="#00efff"/><stop offset="0.6758" stop-color="#008aff"/><stop offset="0.7383" stop-color="#0040ff"/><stop offset="0.7695" stop-color="#0000ff"/><stop offset="0.7982" stop-color="#0000cf"/><stop offset="0.8398" stop-color="#0000a2"/><stop offset="0.9987" stop-color="#000040"/></linearGradient><linearGradient id="h55" gradientUnits="userSpaceOnUse" x1="0" y1="0" x2="0" y2="384"><stop offset="0.0013" stop-color="#000000"/><stop offset="0.2643" stop-color="#000000"/><stop offset="0.2773" stop-color="#000089"/><stop offset="0.2930" stop-color="#0000d9"/><stop offset="0.3008" stop-color="#0000f1"/><stop offset="0.3034" stop-color="#0004ff"/><stop offset="0.3216" stop-color="#0088ff"/><stop offset="0.3320" stop-color="#00bdff"/><stop offset="0.3451" stop-color="#00dcff"/><stop offset="0.3659" stop-color="#00f0fb"/><stop offset="0.3945" stop-color="#00f0cf"/><stop offset="0.4232" stop-color="#02f082"/><stop offset="0.4362" stop-color="#04ef74"/><stop offset="0.5508" stop-color="#00f0ac"/><stop offset="0.5768" stop-color="#00f0ca"/><stop offset="0.6055" stop-color="#00f0ff"/><stop offset="0.6445" stop-color="#00b6ff"/><stop offset="0.6732" stop-color="#007aff"/><stop offset="0.7331" stop-color="#0036ff"/><stop offset="0.7617" stop-color="#0003ff"/><stop offset="0.7930" stop-color="#0000cb"/><stop offset="0.8398" stop-color="#00009a"/><stop offset="0.9987" stop-color="#00003e"/></linearGradient><linearGradient id="h56" gradientUnits="userSpaceOnUse" x1="0" y1="0" x2="0" y2="384"><stop offset="0.0013" stop-color="#000000"/><stop offset="0.2617" stop-color="#000000"/><stop offset="0.2643" stop-color="#000003"/><stop offset="0.2747" stop-color="#000080"/><stop offset="0.2982" stop-color="#0000f2"/><stop offset="0.3008" stop-color="#0005ff"/><stop offset="0.3190" stop-color="#0092ff"/><stop offset="0.3268" stop-color="#00c1ff"/><stop offset="0.3451" stop-color="#00f0fe"/><stop offset="0.3893" stop-color="#00f0be"/><stop offset="0.4180" stop-color="#03ef78"/><stop offset="0.4310" stop-color="#06ef6a"/><stop offset="0.5482" stop-color="#00f0b7"/><stop offset="0.5951" stop-color="#00eeff"/><stop offset="0.6732" stop-color="#0067ff"/><stop offset="0.7539" stop-color="#0004ff"/><stop offset="0.7904" stop-color="#0000c4"/><stop offset="0.8398" stop-color="#000091"/><stop offset="0.9987" stop-color="#00003c"/></linearGradient><linearGradient id="h57" gradientUnits="userSpaceOnUse" x1="0" y1="0" x2="0" y2="384"><stop offset="0.0013" stop-color="#000000"/><stop offset="0.2617" stop-color="#000000"/><stop offset="0.2643" stop-color="#000010"/><stop offset="0.2747" stop-color="#000086"/><stop offset="0.2956" stop-color="#0000f2"/><stop offset="0.3008" stop-color="#001aff"/><stop offset="0.3216" stop-color="#00bfff"/><stop offset="0.3346" stop-color="#00f0fa"/><stop offset="0.4258" stop-color="#08ee5d"/><stop offset="0.5456" stop-color="#00f0c3"/><stop offset="0.5820" stop-color="#00f0ff"/><stop offset="0.6706" stop-color="#005bff"/><stop offset="0.7487" stop-color="#0000ff"/><stop offset="0.7852" stop-color="#0000c1"/><stop offset="0.8398" stop-color="#000087"/><stop offset="0.9987" stop-color="#000038"/></linearGradient><linearGradient id="h58" gradientUnits="userSpaceOnUse" x1="0" y1="0" x2="0" y2="384"><stop offset="0.0013" stop-color="#000000"/><stop offset="0.2617" stop-color="#000000"/><stop offset="0.2721" stop-color="#000079"/><stop offset="0.2930" stop-color="#0000f3"/><stop offset="0.2982" stop-color="#001cff"/><stop offset="0.3164" stop-color="#00b8ff"/><stop offset="0.3268" stop-color="#00f0fd"/><stop offset="0.3451" stop-color="#00f0c5"/><stop offset="0.4206" stop-color="#0aed4f"/><stop offset="0.4961" stop-color="#00f094"/><stop offset="0.5716" stop-color="#00eeff"/><stop offset="0.6706" stop-color="#004dff"/><stop offset="0.7383" stop-color="#0002ff"/><stop offset="0.7826" stop-color="#0000ba"/><stop offset="0.8398" stop-color="#00007c"/><stop offset="0.9987" stop-color="#000034"/></linearGradient><linearGradient id="h59" gradientUnits="userSpaceOnUse" x1="0" y1="0" x2="0" y2="384"><stop offset="0.0013" stop-color="#000000"/><stop offset="0.2591" stop-color="#000000"/><stop offset="0.2617" stop-color="#000005"/><stop offset="0.2721" stop-color="#000081"/><stop offset="0.2930" stop-color="#0009ff"/><stop offset="0.3138" stop-color="#00c2ff"/><stop offset="0.3216" stop-color="#00f0fb"/><stop offset="0.3294" stop-color="#00f0d1"/><stop offset="0.3424" stop-color="#00f0af"/><stop offset="0.4076" stop-color="#0bed48"/><stop offset="0.4206" stop-color="#0ded3e"/><stop offset="0.4935" stop-color="#00f093"/><stop offset="0.5560" stop-color="#00f0fd"/><stop offset="0.6680" stop-color="#0044ff"/><stop offset="0.7305" stop-color="#0000fe"/><stop offset="0.7773" stop-color="#0000b8"/><stop offset="0.8398" stop-color="#000071"/><stop offset="0.9987" stop-color="#000030"/></linearGradient><linearGradient id="h60" gradientUnits="userSpaceOnUse" x1="0" y1="0" x2="0" y2="384"><stop offset="0.0013" stop-color="#000000"/><stop offset="0.2591" stop-color="#000000"/><stop offset="0.2617" stop-color="#000010"/><stop offset="0.2721" stop-color="#000086"/><stop offset="0.2904" stop-color="#0009ff"/><stop offset="0.3086" stop-color="#00b4ff"/><stop offset="0.3164" stop-color="#00efff"/><stop offset="0.3268" stop-color="#00f0bf"/><stop offset="0.3372" stop-color="#00f0a0"/><stop offset="0.4154" stop-color="#10ec2e"/><stop offset="0.4909" stop-color="#00f090"/><stop offset="0.5404" stop-color="#00f0fc"/><stop offset="0.6706" stop-color="#0036ff"/><stop offset="0.7201" stop-color="#0000fe"/><stop offset="0.8398" stop-color="#000066"/><stop offset="0.9987" stop-color="#00002c"/></linearGradient><linearGradient id="h61" gradientUnits="userSpaceOnUse" x1="0" y1="0" x2="0" y2="384"><stop offset="0.0013" stop-color="#000000"/><stop offset="0.2591" stop-color="#000000"/><stop offset="0.2617" stop-color="#000010"/><stop offset="0.2721" stop-color="#000086"/><stop offset="0.2878" stop-color="#0008ff"/><stop offset="0.3086" stop-color="#00d1ff"/><stop offset="0.3138" stop-color="#00f0f4"/><stop offset="0.3242" stop-color="#00f0af"/><stop offset="0.3398" stop-color="#02f082"/><stop offset="0.4128" stop-color="#13eb1c"/><stop offset="0.4883" stop-color="#00f08b"/><stop offset="0.5273" stop-color="#00f0f9"/><stop offset="0.6159" stop-color="#006fff"/><stop offset="0.7096" stop-color="#0000ff"/><stop offset="0.8398" stop-color="#00005c"/><stop offset="0.9987" stop-color="#000027"/></linearGradient><linearGradient id="h62" gradientUnits="userSpaceOnUse" x1="0" y1="0" x2="0" y2="384"><stop offset="0.0013" stop-color="#000000"/><stop offset="0.2591" stop-color="#000000"/><stop offset="0.2617" stop-color="#000010"/><stop offset="0.2695" stop-color="#00006e"/><stop offset="0.2747" stop-color="#000094"/><stop offset="0.2799" stop-color="#0000d5"/><stop offset="0.2852" stop-color="#0003ff"/><stop offset="0.3086" stop-color="#00ecff"/><stop offset="0.3190" stop-color="#00f0ae"/><stop offset="0.3346" stop-color="#04ef76"/><stop offset="0.3971" stop-color="#14eb14"/><stop offset="0.4076" stop-color="#1fec13"/><stop offset="0.4206" stop-color="#14eb17"/><stop offset="0.4831" stop-color="#02ef7f"/><stop offset="0.5039" stop-color="#00f0b2"/><stop offset="0.5221" stop-color="#00f0f7"/><stop offset="0.6029" stop-color="#0071ff"/><stop offset="0.7018" stop-color="#0000ff"/><stop offset="0.8398" stop-color="#000052"/><stop offset="0.9987" stop-color="#000022"/></linearGradient><linearGradient id="h63" gradientUnits="userSpaceOnUse" x1="0" y1="0" x2="0" y2="384"><stop offset="0.0013" stop-color="#000000"/><stop offset="0.2591" stop-color="#000000"/><stop offset="0.2617" stop-color="#000010"/><stop offset="0.2695" stop-color="#00006e"/><stop offset="0.2747" stop-color="#000096"/><stop offset="0.2799" stop-color="#0000e2"/><stop offset="0.2826" stop-color="#0000fb"/><stop offset="0.2852" stop-color="#0013ff"/><stop offset="0.3060" stop-color="#00efff"/><stop offset="0.3112" stop-color="#00f0cb"/><stop offset="0.3190" stop-color="#00f095"/><stop offset="0.3346" stop-color="#07ee61"/><stop offset="0.3841" stop-color="#15eb14"/><stop offset="0.4049" stop-color="#34ee10"/><stop offset="0.4258" stop-color="#14eb16"/><stop offset="0.4779" stop-color="#05ef70"/><stop offset="0.5013" stop-color="#00f0ab"/><stop offset="0.5195" stop-color="#00f0f6"/><stop offset="0.5404" stop-color="#00bdff"/><stop offset="0.5898" stop-color="#0073ff"/><stop offset="0.6940" stop-color="#0000ff"/><stop offset="0.8398" stop-color="#000048"/><stop offset="0.9987" stop-color="#00001e"/></linearGradient><linearGradient id="h64" gradientUnits="userSpaceOnUse" x1="0" y1="0" x2="0" y2="384"><stop offset="0.0013" stop-color="#000000"/><stop offset="0.2591" stop-color="#000000"/><stop offset="0.2695" stop-color="#000079"/><stop offset="0.2747" stop-color="#0000a5"/><stop offset="0.2799" stop-color="#0000ef"/><stop offset="0.2826" stop-color="#0009ff"/><stop offset="0.3034" stop-color="#00ecff"/><stop offset="0.3112" stop-color="#00f0b2"/><stop offset="0.3164" stop-color="#00f08e"/><stop offset="0.3346" stop-color="#0aed4e"/><stop offset="0.3685" stop-color="#14eb15"/><stop offset="0.4023" stop-color="#47f00d"/><stop offset="0.4310" stop-color="#14eb16"/><stop offset="0.4753" stop-color="#06ee65"/><stop offset="0.4987" stop-color="#00f0a2"/><stop offset="0.5195" stop-color="#00f0fe"/><stop offset="0.5404" stop-color="#00afff"/><stop offset="0.5612" stop-color="#008cff"/><stop offset="0.6888" stop-color="#0000fe"/><stop offset="0.8398" stop-color="#000040"/><stop offset="0.9987" stop-color="#00001a"/></linearGradient><linearGradient id="h65" gradientUnits="userSpaceOnUse" x1="0" y1="0" x2="0" y2="384"><stop offset="0.0013" stop-color="#000000"/><stop offset="0.2565" stop-color="#000000"/><stop offset="0.2591" stop-color="#000005"/><stop offset="0.2695" stop-color="#000081"/><stop offset="0.2721" stop-color="#000090"/><stop offset="0.2773" stop-color="#0000e0"/><stop offset="0.2799" stop-color="#0000f9"/><stop offset="0.2826" stop-color="#0013ff"/><stop offset="0.3008" stop-color="#00e3ff"/><stop offset="0.3034" stop-color="#00f0ee"/><stop offset="0.3086" stop-color="#00f0b5"/><stop offset="0.3164" stop-color="#02ef7d"/><stop offset="0.3398" stop-color="#0fec32"/><stop offset="0.3581" stop-color="#16eb14"/><stop offset="0.3997" stop-color="#58f20b"/><stop offset="0.4336" stop-color="#16eb14"/><stop offset="0.4727" stop-color="#08ee5a"/><stop offset="0.4961" stop-color="#00f097"/><stop offset="0.5169" stop-color="#00f0f6"/><stop offset="0.5404" stop-color="#00a4ff"/><stop offset="0.5586" stop-color="#0080ff"/><stop offset="0.6471" stop-color="#002eff"/><stop offset="0.6836" stop-color="#0000fe"/><stop offset="0.8398" stop-color="#000038"/><stop offset="0.9987" stop-color="#000017"/></linearGradient><linearGradient id="h66" gradientUnits="userSpaceOnUse" x1="0" y1="0" x2="0" y2="384"><stop offset="0.0013" stop-color="#000000"/><stop offset="0.2565" stop-color="#000000"/><stop offset="0.2591" stop-color="#000010"/><stop offset="0.2669" stop-color="#00006e"/><stop offset="0.2721" stop-color="#000097"/><stop offset="0.2773" stop-color="#0000e7"/><stop offset="0.2799" stop-color="#0002ff"/><stop offset="0.3008" stop-color="#00efff"/><stop offset="0.3060" stop-color="#00f0c0"/><stop offset="0.3138" stop-color="#02f080"/><stop offset="0.3216" stop-color="#08ee5b"/><stop offset="0.3372" stop-color="#10ec2c"/><stop offset="0.3503" stop-color="#18eb13"/><stop offset="0.3971" stop-color="#67f309"/><stop offset="0.4076" stop-color="#5cf20a"/><stop offset="0.4388" stop-color="#14eb15"/><stop offset="0.4701" stop-color="#0aed4f"/><stop offset="0.4935" stop-color="#00f08a"/><stop offset="0.5195" stop-color="#00eaff"/><stop offset="0.5404" stop-color="#009bff"/><stop offset="0.5560" stop-color="#0078ff"/><stop offset="0.6471" stop-color="#0029ff"/><stop offset="0.6784" stop-color="#0000ff"/><stop offset="0.8398" stop-color="#000031"/><stop offset="0.9987" stop-color="#000014"/></linearGradient><linearGradient id="h67" gradientUnits="userSpaceOnUse" x1="0" y1="0" x2="0" y2="384"><stop offset="0.0013" stop-color="#000000"/><stop offset="0.2565" stop-color="#000000"/><stop offset="0.2591" stop-color="#000010"/><stop offset="0.2669" stop-color="#00006e"/><stop offset="0.2721" stop-color="#00009a"/><stop offset="0.2773" stop-color="#0000ec"/><stop offset="0.2799" stop-color="#0007ff"/><stop offset="0.3008" stop-color="#00f0f6"/><stop offset="0.3060" stop-color="#00f0b7"/><stop offset="0.3138" stop-color="#03ef79"/><stop offset="0.3216" stop-color="#09ee54"/><stop offset="0.3398" stop-color="#12eb1d"/><stop offset="0.3867" stop-color="#6af408"/><stop offset="0.3971" stop-color="#72f407"/><stop offset="0.4414" stop-color="#14eb15"/><stop offset="0.4701" stop-color="#0bed4a"/><stop offset="0.4909" stop-color="#02ef7e"/><stop offset="0.5169" stop-color="#00f0fd"/><stop offset="0.5195" stop-color="#00e7ff"/><stop offset="0.5404" stop-color="#0093ff"/><stop offset="0.5560" stop-color="#0070ff"/><stop offset="0.6003" stop-color="#0041ff"/><stop offset="0.6471" stop-color="#0024ff"/><stop offset="0.6758" stop-color="#0000fe"/><stop offset="0.8398" stop-color="#00002a"/><stop offset="0.9987" stop-color="#000011"/></linearGradient><linearGradient id="h68" gradientUnits="userSpaceOnUse" x1="0" y1="0" x2="0" y2="384"><stop offset="0.0013" stop-color="#000000"/><stop offset="0.2565" stop-color="#000000"/><stop offset="0.2591" stop-color="#000010"/><stop offset="0.2669" stop-color="#00006e"/><stop offset="0.2721" stop-color="#00009c"/><stop offset="0.2773" stop-color="#0000ef"/><stop offset="0.2799" stop-color="#000aff"/><stop offset="0.2982" stop-color="#00dfff"/><stop offset="0.3008" stop-color="#00f0f0"/><stop offset="0.3060" stop-color="#00f0b2"/><stop offset="0.3138" stop-color="#04ef75"/><stop offset="0.3398" stop-color="#13eb19"/><stop offset="0.3815" stop-color="#6df408"/><stop offset="0.3945" stop-color="#7bf506"/><stop offset="0.4440" stop-color="#14eb16"/><stop offset="0.4727" stop-color="#0bed4c"/><stop offset="0.4909" stop-color="#03ef7d"/><stop offset="0.5169" stop-color="#00eeff"/><stop offset="0.5404" stop-color="#008dff"/><stop offset="0.5586" stop-color="#0065ff"/><stop offset="0.6732" stop-color="#0000fe"/><stop offset="0.8398" stop-color="#000025"/><stop offset="0.9987" stop-color="#00000f"/></linearGradient><linearGradient id="h69" gradientUnits="userSpaceOnUse" x1="0" y1="0" x2="0" y2="384"><stop offset="0.0013" stop-color="#000000"/><stop offset="0.2565" stop-color="#000000"/><stop offset="0.2591" stop-color="#000010"/><stop offset="0.2669" stop-color="#00006e"/><stop offset="0.2721" stop-color="#00009d"/><stop offset="0.2773" stop-color="#0000f1"/><stop offset="0.2799" stop-color="#000cff"/><stop offset="0.2982" stop-color="#00e2ff"/><stop offset="0.3008" stop-color="#00f0ed"/><stop offset="0.3060" stop-color="#00f0af"/><stop offset="0.3138" stop-color="#04ef73"/><stop offset="0.3398" stop-color="#14eb17"/><stop offset="0.3919" stop-color="#80f606"/><stop offset="0.4440" stop-color="#14eb14"/><stop offset="0.4727" stop-color="#0bed4a"/><stop offset="0.4909" stop-color="#02ef7f"/><stop offset="0.5169" stop-color="#00eaff"/><stop offset="0.5404" stop-color="#0088ff"/><stop offset="0.5586" stop-color="#005eff"/><stop offset="0.6706" stop-color="#0000fe"/><stop offset="0.8398" stop-color="#000020"/><stop offset="0.9987" stop-color="#00000d"/></linearGradient><linearGradient id="h70" gradientUnits="userSpaceOnUse" x1="0" y1="0" x2="0" y2="384"><stop offset="0.0013" stop-color="#000000"/><stop offset="0.2565" stop-color="#000000"/><stop offset="0.2591" stop-color="#000005"/><stop offset="0.2721" stop-color="#000097"/><stop offset="0.2773" stop-color="#0000f4"/><stop offset="0.2799" stop-color="#000eff"/><stop offset="0.2982" stop-color="#00e4ff"/><stop offset="0.3008" stop-color="#00f0ea"/><stop offset="0.3060" stop-color="#00f0ad"/><stop offset="0.3138" stop-color="#04ef72"/><stop offset="0.3398" stop-color="#14eb16"/><stop offset="0.3789" stop-color="#71f408"/><stop offset="0.3919" stop-color="#82f605"/><stop offset="0.4440" stop-color="#14eb15"/><stop offset="0.4727" stop-color="#0bed4a"/><stop offset="0.4883" stop-color="#03ef79"/><stop offset="0.5143" stop-color="#00efff"/><stop offset="0.5378" stop-color="#008bff"/><stop offset="0.5586" stop-color="#0059ff"/><stop offset="0.6680" stop-color="#0000fe"/><stop offset="0.8398" stop-color="#00001c"/><stop offset="0.9987" stop-color="#00000b"/></linearGradient><linearGradient id="h71" gradientUnits="userSpaceOnUse" x1="0" y1="0" x2="0" y2="384"><stop offset="0.0013" stop-color="#000000"/><stop offset="0.2591" stop-color="#000000"/><stop offset="0.2721" stop-color="#000090"/><stop offset="0.2773" stop-color="#0000f1"/><stop offset="0.2799" stop-color="#0010ff"/><stop offset="0.2982" stop-color="#00e7ff"/><stop offset="0.3008" stop-color="#00f0e7"/><stop offset="0.3060" stop-color="#00f0ab"/><stop offset="0.3138" stop-color="#05ef70"/><stop offset="0.3398" stop-color="#14eb15"/><stop offset="0.3789" stop-color="#72f407"/><stop offset="0.3919" stop-color="#83f605"/><stop offset="0.4414" stop-color="#16eb14"/><stop offset="0.4701" stop-color="#0bed47"/><stop offset="0.4857" stop-color="#04ef76"/><stop offset="0.5117" stop-color="#00f0fe"/><stop offset="0.5143" stop-color="#00e6ff"/><stop offset="0.5378" stop-color="#0086ff"/><stop offset="0.5586" stop-color="#0055ff"/><stop offset="0.6654" stop-color="#0000ff"/><stop offset="0.8398" stop-color="#000018"/><stop offset="0.9987" stop-color="#000009"/></linearGradient><linearGradient id="h72" gradientUnits="userSpaceOnUse" x1="0" y1="0" x2="0" y2="384"><stop offset="0.0013" stop-color="#000000"/><stop offset="0.2591" stop-color="#000000"/><stop offset="0.2617" stop-color="#000010"/><stop offset="0.2721" stop-color="#000088"/><stop offset="0.2773" stop-color="#0000e8"/><stop offset="0.2799" stop-color="#0013ff"/><stop offset="0.2982" stop-color="#00e9ff"/><stop offset="0.3008" stop-color="#00f0e4"/><stop offset="0.3060" stop-color="#00f0a9"/><stop offset="0.3138" stop-color="#05ef6f"/><stop offset="0.3398" stop-color="#14eb15"/><stop offset="0.3789" stop-color="#72f407"/><stop offset="0.3919" stop-color="#83f605"/><stop offset="0.4414" stop-color="#14eb15"/><stop offset="0.4701" stop-color="#0bed4b"/><stop offset="0.4831" stop-color="#04ef74"/><stop offset="0.5117" stop-color="#00e8ff"/><stop offset="0.5352" stop-color="#008aff"/><stop offset="0.5586" stop-color="#0052ff"/><stop offset="0.6628" stop-color="#0001ff"/><stop offset="0.8398" stop-color="#000015"/><stop offset="0.9987" stop-color="#000008"/></linearGradient><linearGradient id="h73" gradientUnits="userSpaceOnUse" x1="0" y1="0" x2="0" y2="384"><stop offset="0.0013" stop-color="#000000"/><stop offset="0.2591" stop-color="#000000"/><stop offset="0.2617" stop-color="#000005"/><stop offset="0.2721" stop-color="#000081"/><stop offset="0.2773" stop-color="#0000df"/><stop offset="0.2799" stop-color="#0014ff"/><stop offset="0.2982" stop-color="#00ebff"/><stop offset="0.3008" stop-color="#00f0e2"/><stop offset="0.3060" stop-color="#00f0a8"/><stop offset="0.3138" stop-color="#05ef6e"/><stop offset="0.3398" stop-color="#14eb14"/><stop offset="0.3789" stop-color="#73f407"/><stop offset="0.3919" stop-color="#83f605"/><stop offset="0.4414" stop-color="#14eb15"/><stop offset="0.4674" stop-color="#0bed48"/><stop offset="0.4831" stop-color="#03ef78"/><stop offset="0.5091" stop-color="#00eeff"/><stop offset="0.5352" stop-color="#0087ff"/><stop offset="0.5586" stop-color="#0050ff"/><stop offset="0.5924" stop-color="#002dff"/><stop offset="0.6628" stop-color="#0000fd"/><stop offset="0.8398" stop-color="#000013"/><stop offset="0.9987" stop-color="#000007"/></linearGradient><linearGradient id="h74" gradientUnits="userSpaceOnUse" x1="0" y1="0" x2="0" y2="384"><stop offset="0.0013" stop-color="#000000"/><stop offset="0.2617" stop-color="#000000"/><stop offset="0.2721" stop-color="#000079"/><stop offset="0.2773" stop-color="#0000d5"/><stop offset="0.2799" stop-color="#000fff"/><stop offset="0.2982" stop-color="#00ebff"/><stop offset="0.3060" stop-color="#00f0a7"/><stop offset="0.3138" stop-color="#05ef6e"/><stop offset="0.3372" stop-color="#13eb1b"/><stop offset="0.3815" stop-color="#78f507"/><stop offset="0.3919" stop-color="#83f605"/><stop offset="0.4414" stop-color="#14eb16"/><stop offset="0.4701" stop-color="#0bed4d"/><stop offset="0.4857" stop-color="#02f081"/><stop offset="0.5091" stop-color="#00efff"/><stop offset="0.5326" stop-color="#008eff"/><stop offset="0.5586" stop-color="#0050ff"/><stop offset="0.5924" stop-color="#002bff"/><stop offset="0.6602" stop-color="#0000fe"/><stop offset="0.8398" stop-color="#000011"/><stop offset="0.9987" stop-color="#000007"/></linearGradient><linearGradient id="h75" gradientUnits="userSpaceOnUse" x1="0" y1="0" x2="0" y2="384"><stop offset="0.0013" stop-color="#000000"/><stop offset="0.2617" stop-color="#000000"/><stop offset="0.2643" stop-color="#000010"/><stop offset="0.2721" stop-color="#00006e"/><stop offset="0.2799" stop-color="#0004ff"/><stop offset="0.2826" stop-color="#002eff"/><stop offset="0.2982" stop-color="#00e9ff"/><stop offset="0.3008" stop-color="#00f0e4"/><stop offset="0.3060" stop-color="#00f0a9"/><stop offset="0.3138" stop-color="#05ef6f"/><stop offset="0.3398" stop-color="#14eb15"/><stop offset="0.3789" stop-color="#71f408"/><stop offset="0.3919" stop-color="#82f605"/><stop offset="0.4414" stop-color="#14eb16"/><stop offset="0.4701" stop-color="#0bed4c"/><stop offset="0.4857" stop-color="#02ef7d"/><stop offset="0.5117" stop-color="#00e7ff"/><stop offset="0.5352" stop-color="#0085ff"/><stop offset="0.5586" stop-color="#0051ff"/><stop offset="0.5951" stop-color="#0028ff"/><stop offset="0.6576" stop-color="#0000ff"/><stop offset="0.8398" stop-color="#000010"/><stop offset="0.9987" stop-color="#000006"/></linearGradient><linearGradient id="h76" gradientUnits="userSpaceOnUse" x1="0" y1="0" x2="0" y2="384"><stop offset="0.0013" stop-color="#000000"/><stop offset="0.2617" stop-color="#000000"/><stop offset="0.2721" stop-color="#000079"/><stop offset="0.2799" stop-color="#000bff"/><stop offset="0.2982" stop-color="#00e5ff"/><stop offset="0.3008" stop-color="#00f0e9"/><stop offset="0.3060" stop-color="#00f0ad"/><stop offset="0.3138" stop-color="#04ef72"/><stop offset="0.3398" stop-color="#14eb17"/><stop offset="0.3789" stop-color="#6ef408"/><stop offset="0.3919" stop-color="#7ff606"/><stop offset="0.4388" stop-color="#15eb14"/><stop offset="0.4674" stop-color="#0bed4a"/><stop offset="0.4857" stop-color="#02ef7d"/><stop offset="0.5117" stop-color="#00e9ff"/><stop offset="0.5352" stop-color="#0086ff"/><stop offset="0.5586" stop-color="#0052ff"/><stop offset="0.5951" stop-color="#0028ff"/><stop offset="0.6576" stop-color="#0000fe"/><stop offset="0.8398" stop-color="#000010"/><stop offset="0.9987" stop-color="#000006"/></linearGradient><linearGradient id="h77" gradientUnits="userSpaceOnUse" x1="0" y1="0" x2="0" y2="384"><stop offset="0.0013" stop-color="#000000"/><stop offset="0.2591" stop-color="#000000"/><stop offset="0.2617" stop-color="#000005"/><stop offset="0.2721" stop-color="#000081"/><stop offset="0.2799" stop-color="#000bff"/><stop offset="0.2982" stop-color="#00e0ff"/><stop offset="0.3008" stop-color="#00f0f0"/><stop offset="0.3060" stop-color="#00f0b2"/><stop offset="0.3138" stop-color="#04ef75"/><stop offset="0.3398" stop-color="#13eb1a"/><stop offset="0.3919" stop-color="#78f507"/><stop offset="0.4362" stop-color="#15eb14"/><stop offset="0.4622" stop-color="#0bed47"/><stop offset="0.4857" stop-color="#01f085"/><stop offset="0.5091" stop-color="#00f0fd"/><stop offset="0.5352" stop-color="#0087ff"/><stop offset="0.5586" stop-color="#0054ff"/><stop offset="0.5951" stop-color="#0029ff"/><stop offset="0.6549" stop-color="#0001ff"/><stop offset="0.8398" stop-color="#000010"/><stop offset="0.9987" stop-color="#000006"/></linearGradient><linearGradient id="h78" gradientUnits="userSpaceOnUse" x1="0" y1="0" x2="0" y2="384"><stop offset="0.0013" stop-color="#000000"/><stop offset="0.2591" stop-color="#000000"/><stop offset="0.2617" stop-color="#000010"/><stop offset="0.2721" stop-color="#000086"/><stop offset="0.2799" stop-color="#0006ff"/><stop offset="0.3008" stop-color="#00f0f9"/><stop offset="0.3060" stop-color="#00f0b9"/><stop offset="0.3138" stop-color="#03ef7b"/><stop offset="0.3372" stop-color="#11ec26"/><stop offset="0.3451" stop-color="#14eb14"/><stop offset="0.3919" stop-color="#6cf408"/><stop offset="0.4023" stop-color="#5ff20a"/><stop offset="0.4310" stop-color="#17eb14"/><stop offset="0.4544" stop-color="#0ced42"/><stop offset="0.4857" stop-color="#00f091"/><stop offset="0.5091" stop-color="#00ecff"/><stop offset="0.5326" stop-color="#0090ff"/><stop offset="0.5612" stop-color="#0052ff"/><stop offset="0.5951" stop-color="#002bff"/><stop offset="0.6549" stop-color="#0002ff"/><stop offset="0.8398" stop-color="#000012"/><stop offset="0.9987" stop-color="#000007"/></linearGradient><linearGradient id="h79" gradientUnits="userSpaceOnUse" x1="0" y1="0" x2="0" y2="384"><stop offset="0.0013" stop-color="#000000"/><stop offset="0.2591" stop-color="#000000"/><stop offset="0.2617" stop-color="#000010"/><stop offset="0.2721" stop-color="#000086"/><stop offset="0.2799" stop-color="#0001ff"/><stop offset="0.3008" stop-color="#00edff"/><stop offset="0.3086" stop-color="#00f0aa"/><stop offset="0.3138" stop-color="#01f083"/><stop offset="0.3216" stop-color="#08ee5e"/><stop offset="0.3372" stop-color="#0fec2f"/><stop offset="0.3503" stop-color="#14eb14"/><stop offset="0.3945" stop-color="#5af20b"/><stop offset="0.4258" stop-color="#15eb14"/><stop offset="0.4492" stop-color="#0ced45"/><stop offset="0.4857" stop-color="#00f0a1"/><stop offset="0.5065" stop-color="#00eeff"/><stop offset="0.5299" stop-color="#009aff"/><stop offset="0.5638" stop-color="#0051ff"/><stop offset="0.6549" stop-color="#0003ff"/><stop offset="0.8398" stop-color="#000013"/><stop offset="0.9987" stop-color="#000007"/></linearGradient><linearGradient id="h80" gradientUnits="userSpaceOnUse" x1="0" y1="0" x2="0" y2="384"><stop offset="0.0013" stop-color="#000000"/><stop offset="0.2591" stop-color="#000000"/><stop offset="0.2617" stop-color="#000010"/><stop offset="0.2747" stop-color="#0000a4"/><stop offset="0.2799" stop-color="#0000fa"/><stop offset="0.2826" stop-color="#0014ff"/><stop offset="0.3008" stop-color="#00e4ff"/><stop offset="0.3034" stop-color="#00f0ed"/><stop offset="0.3086" stop-color="#00f0b5"/><stop offset="0.3164" stop-color="#02ef7f"/><stop offset="0.3372" stop-color="#0ded3b"/><stop offset="0.3607" stop-color="#15eb14"/><stop offset="0.3945" stop-color="#44f00e"/><stop offset="0.4049" stop-color="#3aef0f"/><stop offset="0.4206" stop-color="#14eb16"/><stop offset="0.4388" stop-color="#0ded3e"/><stop offset="0.4831" stop-color="#00f0a9"/><stop offset="0.5039" stop-color="#00f0ff"/><stop offset="0.5273" stop-color="#00a3ff"/><stop offset="0.5664" stop-color="#0052ff"/><stop offset="0.6602" stop-color="#0000fd"/><stop offset="0.8398" stop-color="#000016"/><stop offset="0.9987" stop-color="#000008"/></linearGradient><linearGradient id="h81" gradientUnits="userSpaceOnUse" x1="0" y1="0" x2="0" y2="384"><stop offset="0.0013" stop-color="#000000"/><stop offset="0.2591" stop-color="#000000"/><stop offset="0.2617" stop-color="#000010"/><stop offset="0.2747" stop-color="#0000a0"/><stop offset="0.2799" stop-color="#0000f3"/><stop offset="0.2826" stop-color="#000dff"/><stop offset="0.3034" stop-color="#00f0fd"/><stop offset="0.3086" stop-color="#00f0c4"/><stop offset="0.3164" stop-color="#00f08e"/><stop offset="0.3346" stop-color="#0aee52"/><stop offset="0.3763" stop-color="#14eb15"/><stop offset="0.3971" stop-color="#2aed11"/><stop offset="0.4128" stop-color="#14eb15"/><stop offset="0.4414" stop-color="#09ee54"/><stop offset="0.4805" stop-color="#00f0b2"/><stop offset="0.5013" stop-color="#00f0fd"/><stop offset="0.5273" stop-color="#00a7ff"/><stop offset="0.5716" stop-color="#0052ff"/><stop offset="0.6628" stop-color="#0000fe"/><stop offset="0.8398" stop-color="#000019"/><stop offset="0.9987" stop-color="#00000a"/></linearGradient><linearGradient id="h82" gradientUnits="userSpaceOnUse" x1="0" y1="0" x2="0" y2="384"><stop offset="0.0013" stop-color="#000000"/><stop offset="0.2591" stop-color="#000000"/><stop offset="0.2617" stop-color="#000005"/><stop offset="0.2721" stop-color="#000081"/><stop offset="0.2747" stop-color="#000093"/><stop offset="0.2799" stop-color="#0000eb"/><stop offset="0.2826" stop-color="#0005ff"/><stop offset="0.3008" stop-color="#00caff"/><stop offset="0.3060" stop-color="#00f0f2"/><stop offset="0.3164" stop-color="#00f0a0"/><stop offset="0.3346" stop-color="#06ee65"/><stop offset="0.3529" stop-color="#0ced45"/><stop offset="0.3997" stop-color="#13eb19"/><stop offset="0.4128" stop-color="#11ec27"/><stop offset="0.4701" stop-color="#00f0a7"/><stop offset="0.4987" stop-color="#00f0fc"/><stop offset="0.5273" stop-color="#00adff"/><stop offset="0.5768" stop-color="#0057ff"/><stop offset="0.6654" stop-color="#0000ff"/><stop offset="0.8398" stop-color="#00001e"/><stop offset="0.9987" stop-color="#00000b"/></linearGradient><linearGradient id="h83" gradientUnits="userSpaceOnUse" x1="0" y1="0" x2="0" y2="384"><stop offset="0.0013" stop-color="#000000"/><stop offset="0.2617" stop-color="#000000"/><stop offset="0.2721" stop-color="#000079"/><stop offset="0.2747" stop-color="#00008b"/><stop offset="0.2826" stop-color="#0000f9"/><stop offset="0.2852" stop-color="#0011ff"/><stop offset="0.3034" stop-color="#00d0ff"/><stop offset="0.3086" stop-color="#00f0f2"/><stop offset="0.3190" stop-color="#00f0aa"/><stop offset="0.3372" stop-color="#03ef77"/><stop offset="0.3555" stop-color="#08ee5b"/><stop offset="0.4023" stop-color="#0fec32"/><stop offset="0.4180" stop-color="#0ced45"/><stop offset="0.4961" stop-color="#00f0fc"/><stop offset="0.5846" stop-color="#005aff"/><stop offset="0.6706" stop-color="#0000ff"/><stop offset="0.8398" stop-color="#000022"/><stop offset="0.9987" stop-color="#00000d"/></linearGradient><linearGradient id="h84" gradientUnits="userSpaceOnUse" x1="0" y1="0" x2="0" y2="384"><stop offset="0.0013" stop-color="#000000"/><stop offset="0.2617" stop-color="#000000"/><stop offset="0.2643" stop-color="#000010"/><stop offset="0.2721" stop-color="#00006e"/><stop offset="0.2773" stop-color="#00009d"/><stop offset="0.2826" stop-color="#0000ec"/><stop offset="0.2852" stop-color="#0004ff"/><stop offset="0.3034" stop-color="#00b8ff"/><stop offset="0.3112" stop-color="#00f0f9"/><stop offset="0.3216" stop-color="#00f0b9"/><stop offset="0.3372" stop-color="#00f091"/><stop offset="0.3555" stop-color="#04ef75"/><stop offset="0.4049" stop-color="#0bed4b"/><stop offset="0.4180" stop-color="#09ee59"/><stop offset="0.4935" stop-color="#00f0fb"/><stop offset="0.6003" stop-color="#0055ff"/><stop offset="0.6758" stop-color="#0001ff"/><stop offset="0.8398" stop-color="#000028"/><stop offset="0.9987" stop-color="#000010"/></linearGradient><linearGradient id="h85" gradientUnits="userSpaceOnUse" x1="0" y1="0" x2="0" y2="384"><stop offset="0.0013" stop-color="#000000"/><stop offset="0.2617" stop-color="#000000"/><stop offset="0.2643" stop-color="#000005"/><stop offset="0.2747" stop-color="#000081"/><stop offset="0.2773" stop-color="#000090"/><stop offset="0.2826" stop-color="#0000dd"/><stop offset="0.2878" stop-color="#000aff"/><stop offset="0.3086" stop-color="#00c9ff"/><stop offset="0.3164" stop-color="#00f0f3"/><stop offset="0.3268" stop-color="#00f0c4"/><stop offset="0.3451" stop-color="#00f0a0"/><stop offset="0.4076" stop-color="#06ee65"/><stop offset="0.4206" stop-color="#04ef72"/><stop offset="0.4935" stop-color="#00f0fe"/><stop offset="0.6862" stop-color="#0000fe"/><stop offset="0.8398" stop-color="#00002e"/><stop offset="0.9987" stop-color="#000012"/></linearGradient><linearGradient id="h86" gradientUnits="userSpaceOnUse" x1="0" y1="0" x2="0" y2="384"><stop offset="0.0013" stop-color="#000000"/><stop offset="0.2643" stop-color="#000000"/><stop offset="0.2747" stop-color="#000079"/><stop offset="0.2799" stop-color="#0000a1"/><stop offset="0.2826" stop-color="#0000c9"/><stop offset="0.2904" stop-color="#000cff"/><stop offset="0.3112" stop-color="#00bfff"/><stop offset="0.3216" stop-color="#00f0f8"/><stop offset="0.3320" stop-color="#00f0d4"/><stop offset="0.3503" stop-color="#00f0b6"/><stop offset="0.4128" stop-color="#02ef7f"/><stop offset="0.4935" stop-color="#00f0fe"/><stop offset="0.5404" stop-color="#00c9ff"/><stop offset="0.6680" stop-color="#001cff"/><stop offset="0.6966" stop-color="#0000fe"/><stop offset="0.7930" stop-color="#00006e"/><stop offset="0.8398" stop-color="#000035"/><stop offset="0.9987" stop-color="#000015"/></linearGradient><linearGradient id="h87" gradientUnits="userSpaceOnUse" x1="0" y1="0" x2="0" y2="384"><stop offset="0.0013" stop-color="#000000"/><stop offset="0.2643" stop-color="#000000"/><stop offset="0.2669" stop-color="#000010"/><stop offset="0.2747" stop-color="#00006e"/><stop offset="0.2799" stop-color="#000094"/><stop offset="0.2852" stop-color="#0000d0"/><stop offset="0.2930" stop-color="#000aff"/><stop offset="0.3138" stop-color="#00b3ff"/><stop offset="0.3268" stop-color="#00edff"/><stop offset="0.3555" stop-color="#00f0ce"/><stop offset="0.4154" stop-color="#00f097"/><stop offset="0.4961" stop-color="#00f0fd"/><stop offset="0.5482" stop-color="#00ccff"/><stop offset="0.6706" stop-color="#0023ff"/><stop offset="0.7070" stop-color="#0000fe"/><stop offset="0.7930" stop-color="#000076"/><stop offset="0.8398" stop-color="#00003d"/><stop offset="0.9987" stop-color="#000019"/></linearGradient><linearGradient id="h88" gradientUnits="userSpaceOnUse" x1="0" y1="0" x2="0" y2="384"><stop offset="0.0013" stop-color="#000000"/><stop offset="0.2643" stop-color="#000000"/><stop offset="0.2669" stop-color="#000005"/><stop offset="0.2773" stop-color="#000081"/><stop offset="0.2956" stop-color="#0007ff"/><stop offset="0.3190" stop-color="#00b4ff"/><stop offset="0.3294" stop-color="#00dcff"/><stop offset="0.3398" stop-color="#00eeff"/><stop offset="0.4180" stop-color="#00f0ad"/><stop offset="0.4753" stop-color="#00f0ec"/><stop offset="0.5065" stop-color="#00f0fe"/><stop offset="0.5612" stop-color="#00c9ff"/><stop offset="0.6445" stop-color="#005fff"/><stop offset="0.6706" stop-color="#002fff"/><stop offset="0.7174" stop-color="#0000ff"/><stop offset="0.7930" stop-color="#00007f"/><stop offset="0.8398" stop-color="#000045"/><stop offset="0.9987" stop-color="#00001c"/></linearGradient><linearGradient id="h89" gradientUnits="userSpaceOnUse" x1="0" y1="0" x2="0" y2="384"><stop offset="0.0013" stop-color="#000000"/><stop offset="0.2669" stop-color="#000000"/><stop offset="0.2773" stop-color="#000079"/><stop offset="0.2982" stop-color="#0003ff"/><stop offset="0.3216" stop-color="#00a5ff"/><stop offset="0.3320" stop-color="#00caff"/><stop offset="0.3424" stop-color="#00dbff"/><stop offset="0.3815" stop-color="#00f0f6"/><stop offset="0.4232" stop-color="#00f0c0"/><stop offset="0.4753" stop-color="#00f0ed"/><stop offset="0.5169" stop-color="#00f0fe"/><stop offset="0.5794" stop-color="#00c1ff"/><stop offset="0.6445" stop-color="#0070ff"/><stop offset="0.6732" stop-color="#0039ff"/><stop offset="0.7279" stop-color="#0000ff"/><stop offset="0.7799" stop-color="#00009b"/><stop offset="0.8398" stop-color="#00004e"/><stop offset="0.9987" stop-color="#00001f"/></linearGradient><linearGradient id="h90" gradientUnits="userSpaceOnUse" x1="0" y1="0" x2="0" y2="384"><stop offset="0.0013" stop-color="#000000"/><stop offset="0.2669" stop-color="#000000"/><stop offset="0.2695" stop-color="#000010"/><stop offset="0.2799" stop-color="#000086"/><stop offset="0.3008" stop-color="#0000ff"/><stop offset="0.3034" stop-color="#0010ff"/><stop offset="0.3242" stop-color="#0097ff"/><stop offset="0.3346" stop-color="#00b9ff"/><stop offset="0.3451" stop-color="#00c8ff"/><stop offset="0.3971" stop-color="#00f0fe"/><stop offset="0.4258" stop-color="#00f0d1"/><stop offset="0.5273" stop-color="#00f0fe"/><stop offset="0.5924" stop-color="#00c0ff"/><stop offset="0.6445" stop-color="#0081ff"/><stop offset="0.6732" stop-color="#0049ff"/><stop offset="0.7383" stop-color="#0000fd"/><stop offset="0.7826" stop-color="#0000a0"/><stop offset="0.8398" stop-color="#000056"/><stop offset="0.9987" stop-color="#000022"/></linearGradient><linearGradient id="h91" gradientUnits="userSpaceOnUse" x1="0" y1="0" x2="0" y2="384"><stop offset="0.0013" stop-color="#000000"/><stop offset="0.2669" stop-color="#000000"/><stop offset="0.2695" stop-color="#000010"/><stop offset="0.2799" stop-color="#000086"/><stop offset="0.3034" stop-color="#0000fc"/><stop offset="0.3060" stop-color="#000cff"/><stop offset="0.3268" stop-color="#008aff"/><stop offset="0.3451" stop-color="#00b4ff"/><stop offset="0.4076" stop-color="#00f0fe"/><stop offset="0.4310" stop-color="#00f0dd"/><stop offset="0.5378" stop-color="#00f0fe"/><stop offset="0.5846" stop-color="#00d3ff"/><stop offset="0.6263" stop-color="#00a7ff"/><stop offset="0.6732" stop-color="#0058ff"/><stop offset="0.7461" stop-color="#0000fc"/><stop offset="0.7826" stop-color="#0000a9"/><stop offset="0.8398" stop-color="#00005f"/><stop offset="0.9987" stop-color="#000025"/></linearGradient><linearGradient id="h92" gradientUnits="userSpaceOnUse" x1="0" y1="0" x2="0" y2="384"><stop offset="0.0013" stop-color="#000000"/><stop offset="0.2669" stop-color="#000000"/><stop offset="0.2695" stop-color="#000010"/><stop offset="0.2799" stop-color="#000086"/><stop offset="0.2956" stop-color="#0000d6"/><stop offset="0.3060" stop-color="#0000fc"/><stop offset="0.3086" stop-color="#000cff"/><stop offset="0.3268" stop-color="#0076ff"/><stop offset="0.3372" stop-color="#0097ff"/><stop offset="0.3945" stop-color="#00cdff"/><stop offset="0.4154" stop-color="#00f0fd"/><stop offset="0.4362" stop-color="#00f0e5"/><stop offset="0.5456" stop-color="#00f0fe"/><stop offset="0.5924" stop-color="#00d4ff"/><stop offset="0.6419" stop-color="#00a1ff"/><stop offset="0.6732" stop-color="#0066ff"/><stop offset="0.7227" stop-color="#0030ff"/><stop offset="0.7513" stop-color="#0000fc"/><stop offset="0.7852" stop-color="#0000ac"/><stop offset="0.8398" stop-color="#000066"/><stop offset="0.9987" stop-color="#000027"/></linearGradient><linearGradient id="h93" gradientUnits="userSpaceOnUse" x1="0" y1="0" x2="0" y2="384"><stop offset="0.0013" stop-color="#000000"/><stop offset="0.2669" stop-color="#000000"/><stop offset="0.2695" stop-color="#000010"/><stop offset="0.2799" stop-color="#000086"/><stop offset="0.2956" stop-color="#0000d6"/><stop offset="0.3034" stop-color="#0000e3"/><stop offset="0.3086" stop-color="#0000fe"/><stop offset="0.3112" stop-color="#000eff"/><stop offset="0.3268" stop-color="#0066ff"/><stop offset="0.3372" stop-color="#0089ff"/><stop offset="0.3945" stop-color="#00c2ff"/><stop offset="0.4206" stop-color="#00f0fd"/><stop offset="0.4362" stop-color="#00f0ea"/><stop offset="0.4753" stop-color="#00f0e9"/><stop offset="0.5534" stop-color="#00f0ff"/><stop offset="0.6029" stop-color="#00d3ff"/><stop offset="0.6445" stop-color="#00a8ff"/><stop offset="0.6732" stop-color="#0071ff"/><stop offset="0.7331" stop-color="#002dff"/><stop offset="0.7539" stop-color="#0001ff"/><stop offset="0.7878" stop-color="#0000ae"/><stop offset="0.8398" stop-color="#00006b"/><stop offset="0.9987" stop-color="#000028"/></linearGradient><linearGradient id="h94" gradientUnits="userSpaceOnUse" x1="0" y1="0" x2="0" y2="384"><stop offset="0.0013" stop-color="#000000"/><stop offset="0.2669" stop-color="#000000"/><stop offset="0.2695" stop-color="#000010"/><stop offset="0.2799" stop-color="#000086"/><stop offset="0.2956" stop-color="#0000d6"/><stop offset="0.3060" stop-color="#0000e6"/><stop offset="0.3112" stop-color="#0003ff"/><stop offset="0.3294" stop-color="#0063ff"/><stop offset="0.3398" stop-color="#0082ff"/><stop offset="0.3971" stop-color="#00bcff"/><stop offset="0.4232" stop-color="#00efff"/><stop offset="0.4388" stop-color="#00f0ed"/><stop offset="0.4779" stop-color="#00f0e9"/><stop offset="0.5586" stop-color="#00f0fe"/><stop offset="0.6445" stop-color="#00b0ff"/><stop offset="0.6706" stop-color="#007fff"/><stop offset="0.6966" stop-color="#006bff"/><stop offset="0.7331" stop-color="#0039ff"/><stop offset="0.7591" stop-color="#0000fc"/><stop offset="0.7904" stop-color="#0000b0"/><stop offset="0.8398" stop-color="#000070"/><stop offset="0.9987" stop-color="#000029"/></linearGradient><linearGradient id="h95" gradientUnits="userSpaceOnUse" x1="0" y1="0" x2="0" y2="384"><stop offset="0.0013" stop-color="#000000"/><stop offset="0.2669" stop-color="#000000"/><stop offset="0.2799" stop-color="#000087"/><stop offset="0.2956" stop-color="#0000d7"/><stop offset="0.3086" stop-color="#0000ea"/><stop offset="0.3138" stop-color="#0007ff"/><stop offset="0.3294" stop-color="#0057ff"/><stop offset="0.3398" stop-color="#0077ff"/><stop offset="0.3971" stop-color="#00b4ff"/><stop offset="0.4284" stop-color="#00f0fe"/><stop offset="0.4414" stop-color="#00f0ee"/><stop offset="0.4857" stop-color="#00f0e9"/><stop offset="0.5638" stop-color="#00f0fe"/><stop offset="0.6445" stop-color="#00b8ff"/><stop offset="0.6706" stop-color="#0088ff"/><stop offset="0.6966" stop-color="#0077ff"/><stop offset="0.7331" stop-color="#0044ff"/><stop offset="0.7617" stop-color="#0000fe"/><stop offset="0.7930" stop-color="#0000b2"/><stop offset="0.8398" stop-color="#000074"/><stop offset="0.9987" stop-color="#000029"/></linearGradient><linearGradient id="h96" gradientUnits="userSpaceOnUse" x1="0" y1="0" x2="0" y2="384"><stop offset="0.0013" stop-color="#000000"/><stop offset="0.2669" stop-color="#000000"/><stop offset="0.2773" stop-color="#000076"/><stop offset="0.2826" stop-color="#000098"/><stop offset="0.2956" stop-color="#0000d9"/><stop offset="0.3086" stop-color="#0000ea"/><stop offset="0.3138" stop-color="#0000fd"/><stop offset="0.3164" stop-color="#000bff"/><stop offset="0.3294" stop-color="#004aff"/><stop offset="0.3398" stop-color="#006cff"/><stop offset="0.3971" stop-color="#00acff"/><stop offset="0.4310" stop-color="#00f0ff"/><stop offset="0.4466" stop-color="#00f0ed"/><stop offset="0.4909" stop-color="#00f0e9"/><stop offset="0.5716" stop-color="#00f0ff"/><stop offset="0.6289" stop-color="#00ceff"/><stop offset="0.6732" stop-color="#008eff"/><stop offset="0.7018" stop-color="#007cff"/><stop offset="0.7383" stop-color="#0046ff"/><stop offset="0.7643" stop-color="#0000ff"/><stop offset="0.7956" stop-color="#0000b3"/><stop offset="0.8398" stop-color="#000078"/><stop offset="0.9987" stop-color="#00002a"/></linearGradient><linearGradient id="h97" gradientUnits="userSpaceOnUse" x1="0" y1="0" x2="0" y2="384"><stop offset="0.0013" stop-color="#000000"/><stop offset="0.2669" stop-color="#000000"/><stop offset="0.2773" stop-color="#00007b"/><stop offset="0.2799" stop-color="#00008d"/><stop offset="0.2956" stop-color="#0000db"/><stop offset="0.3112" stop-color="#0000ed"/><stop offset="0.3164" stop-color="#0002ff"/><stop offset="0.3320" stop-color="#0049ff"/><stop offset="0.3424" stop-color="#0066ff"/><stop offset="0.3997" stop-color="#00a8ff"/><stop offset="0.4336" stop-color="#00f0ff"/><stop offset="0.4466" stop-color="#00f0ee"/><stop offset="0.4961" stop-color="#00f0e9"/><stop offset="0.5768" stop-color="#00f0fe"/><stop offset="0.6341" stop-color="#00d0ff"/><stop offset="0.6706" stop-color="#009aff"/><stop offset="0.7018" stop-color="#0088ff"/><stop offset="0.7383" stop-color="#0051ff"/><stop offset="0.7669" stop-color="#0001ff"/><stop offset="0.7956" stop-color="#0000b9"/><stop offset="0.8398" stop-color="#00007d"/><stop offset="0.9987" stop-color="#00002a"/></linearGradient><linearGradient id="h98" gradientUnits="userSpaceOnUse" x1="0" y1="0" x2="0" y2="384"><stop offset="0.0013" stop-color="#000000"/><stop offset="0.2643" stop-color="#000000"/><stop offset="0.2669" stop-color="#000003"/><stop offset="0.2773" stop-color="#00007f"/><stop offset="0.2956" stop-color="#0000dd"/><stop offset="0.3190" stop-color="#0005ff"/><stop offset="0.3424" stop-color="#005cff"/><stop offset="0.3997" stop-color="#00a1ff"/><stop offset="0.4362" stop-color="#00f0fd"/><stop offset="0.4492" stop-color="#00f0ee"/><stop offset="0.5013" stop-color="#00f0e9"/><stop offset="0.5820" stop-color="#00f0fe"/><stop offset="0.6393" stop-color="#00d2ff"/><stop offset="0.6706" stop-color="#00a2ff"/><stop offset="0.7018" stop-color="#0094ff"/><stop offset="0.7383" stop-color="#005dff"/><stop offset="0.7721" stop-color="#0000f9"/><stop offset="0.8008" stop-color="#0000b5"/><stop offset="0.8424" stop-color="#00007e"/><stop offset="0.9987" stop-color="#00002a"/></linearGradient><linearGradient id="h99" gradientUnits="userSpaceOnUse" x1="0" y1="0" x2="0" y2="384"><stop offset="0.0013" stop-color="#000000"/><stop offset="0.2643" stop-color="#000000"/><stop offset="0.2669" stop-color="#000008"/><stop offset="0.2773" stop-color="#000082"/><stop offset="0.2930" stop-color="#0000d3"/><stop offset="0.3216" stop-color="#0007ff"/><stop offset="0.3424" stop-color="#0051ff"/><stop offset="0.4023" stop-color="#009eff"/><stop offset="0.4362" stop-color="#00eeff"/><stop offset="0.4518" stop-color="#00f0ef"/><stop offset="0.5065" stop-color="#00f0e9"/><stop offset="0.5898" stop-color="#00f0ff"/><stop offset="0.6445" stop-color="#00d3ff"/><stop offset="0.6706" stop-color="#00abff"/><stop offset="0.7044" stop-color="#009cff"/><stop offset="0.7383" stop-color="#0068ff"/><stop offset="0.7747" stop-color="#0000fa"/><stop offset="0.8034" stop-color="#0000b6"/><stop offset="0.8424" stop-color="#000082"/><stop offset="0.9987" stop-color="#00002a"/></linearGradient><linearGradient id="h100" gradientUnits="userSpaceOnUse" x1="0" y1="0" x2="0" y2="384"><stop offset="0.0013" stop-color="#000000"/><stop offset="0.2643" stop-color="#000000"/><stop offset="0.2669" stop-color="#00000d"/><stop offset="0.2773" stop-color="#000085"/><stop offset="0.2930" stop-color="#0000d5"/><stop offset="0.3242" stop-color="#0009ff"/><stop offset="0.3424" stop-color="#0047ff"/><stop offset="0.4023" stop-color="#0098ff"/><stop offset="0.4388" stop-color="#00efff"/><stop offset="0.4570" stop-color="#00f0ee"/><stop offset="0.5117" stop-color="#00f0e9"/><stop offset="0.5951" stop-color="#00f0fe"/><stop offset="0.6159" stop-color="#00e7ff"/><stop offset="0.6263" stop-color="#00c4ff"/><stop offset="0.6680" stop-color="#0095ff"/><stop offset="0.6940" stop-color="#008eff"/><stop offset="0.7174" stop-color="#0072ff"/><stop offset="0.7409" stop-color="#004cff"/><stop offset="0.7669" stop-color="#0001ff"/><stop offset="0.7982" stop-color="#0000b2"/><stop offset="0.8424" stop-color="#000076"/><stop offset="0.9987" stop-color="#000026"/></linearGradient><linearGradient id="h101" gradientUnits="userSpaceOnUse" x1="0" y1="0" x2="0" y2="384"><stop offset="0.0013" stop-color="#000000"/><stop offset="0.2643" stop-color="#000000"/><stop offset="0.2773" stop-color="#000089"/><stop offset="0.2930" stop-color="#0000d8"/><stop offset="0.3242" stop-color="#0001ff"/><stop offset="0.3451" stop-color="#0043ff"/><stop offset="0.4023" stop-color="#0092ff"/><stop offset="0.4414" stop-color="#00eeff"/><stop offset="0.4622" stop-color="#00f0ee"/><stop offset="0.5169" stop-color="#00f0e9"/><stop offset="0.5872" stop-color="#00f0fe"/><stop offset="0.6263" stop-color="#005dff"/><stop offset="0.7201" stop-color="#0001ff"/><stop offset="0.7904" stop-color="#00007c"/><stop offset="0.8268" stop-color="#000052"/><stop offset="0.9987" stop-color="#000015"/></linearGradient><linearGradient id="h102" gradientUnits="userSpaceOnUse" x1="0" y1="0" x2="0" y2="384"><stop offset="0.0013" stop-color="#000000"/><stop offset="0.2643" stop-color="#000000"/><stop offset="0.2747" stop-color="#00007e"/><stop offset="0.2930" stop-color="#0000dc"/><stop offset="0.3268" stop-color="#0002ff"/><stop offset="0.3451" stop-color="#0039ff"/><stop offset="0.4023" stop-color="#008cff"/><stop offset="0.4310" stop-color="#00d9ff"/><stop offset="0.4466" stop-color="#00f0ff"/><stop offset="0.4648" stop-color="#00f0ef"/><stop offset="0.5169" stop-color="#00f0e9"/><stop offset="0.5638" stop-color="#00f0f8"/><stop offset="0.6237" stop-color="#0000fd"/><stop offset="0.6289" stop-color="#0000eb"/><stop offset="0.6992" stop-color="#000097"/><stop offset="0.7487" stop-color="#000044"/><stop offset="0.7773" stop-color="#00002c"/><stop offset="0.8424" stop-color="#000013"/><stop offset="0.9987" stop-color="#000004"/></linearGradient><linearGradient id="h103" gradientUnits="userSpaceOnUse" x1="0" y1="0" x2="0" y2="384"><stop offset="0.0013" stop-color="#000000"/><stop offset="0.2617" stop-color="#000000"/><stop offset="0.2643" stop-color="#00000b"/><stop offset="0.2747" stop-color="#000083"/><stop offset="0.2904" stop-color="#0000d4"/><stop offset="0.3268" stop-color="#0002ff"/><stop offset="0.3477" stop-color="#0035ff"/><stop offset="0.4049" stop-color="#008cff"/><stop offset="0.4310" stop-color="#00d3ff"/><stop offset="0.4466" stop-color="#00ebff"/><stop offset="0.4701" stop-color="#00f0ee"/><stop offset="0.5247" stop-color="#00f0e9"/><stop offset="0.5352" stop-color="#00f0eb"/><stop offset="0.5430" stop-color="#00f0fc"/><stop offset="0.5638" stop-color="#00acff"/><stop offset="0.5977" stop-color="#0001ff"/><stop offset="0.6888" stop-color="#00008a"/><stop offset="0.7513" stop-color="#000023"/><stop offset="0.8320" stop-color="#00000a"/><stop offset="0.9987" stop-color="#000001"/></linearGradient><linearGradient id="h104" gradientUnits="userSpaceOnUse" x1="0" y1="0" x2="0" y2="384"><stop offset="0.0013" stop-color="#000000"/><stop offset="0.2617" stop-color="#000000"/><stop offset="0.2747" stop-color="#000089"/><stop offset="0.2904" stop-color="#0000d8"/><stop offset="0.3242" stop-color="#0000ff"/><stop offset="0.3867" stop-color="#0063ff"/><stop offset="0.4336" stop-color="#00d3ff"/><stop offset="0.4492" stop-color="#00e9ff"/><stop offset="0.4779" stop-color="#00f0ee"/><stop offset="0.5352" stop-color="#00f0f0"/><stop offset="0.5378" stop-color="#00f0ff"/><stop offset="0.5430" stop-color="#00d7ff"/><stop offset="0.5742" stop-color="#0025ff"/><stop offset="0.5872" stop-color="#0000ff"/><stop offset="0.6888" stop-color="#00008d"/><stop offset="0.7513" stop-color="#000024"/><stop offset="0.8320" stop-color="#00000a"/><stop offset="0.9987" stop-color="#000001"/></linearGradient><linearGradient id="h105" gradientUnits="userSpaceOnUse" x1="0" y1="0" x2="0" y2="384"><stop offset="0.0013" stop-color="#000000"/><stop offset="0.2617" stop-color="#000000"/><stop offset="0.2721" stop-color="#00007e"/><stop offset="0.2904" stop-color="#0000dc"/><stop offset="0.3242" stop-color="#0001ff"/><stop offset="0.3841" stop-color="#0057ff"/><stop offset="0.4336" stop-color="#00cbff"/><stop offset="0.4518" stop-color="#00e7ff"/><stop offset="0.4909" stop-color="#00f0ed"/><stop offset="0.5326" stop-color="#00f0e9"/><stop offset="0.5352" stop-color="#00f0f6"/><stop offset="0.5560" stop-color="#005bff"/><stop offset="0.5872" stop-color="#0001ff"/><stop offset="0.6914" stop-color="#00008d"/><stop offset="0.7513" stop-color="#000025"/><stop offset="0.8320" stop-color="#00000a"/><stop offset="0.9987" stop-color="#000001"/></linearGradient><linearGradient id="h106" gradientUnits="userSpaceOnUse" x1="0" y1="0" x2="0" y2="384"><stop offset="0.0013" stop-color="#000000"/><stop offset="0.2591" stop-color="#000000"/><stop offset="0.2617" stop-color="#00000b"/><stop offset="0.2721" stop-color="#000083"/><stop offset="0.2878" stop-color="#0000d4"/><stop offset="0.3242" stop-color="#0002ff"/><stop offset="0.3815" stop-color="#004cff"/><stop offset="0.4362" stop-color="#00c8ff"/><stop offset="0.4544" stop-color="#00e5ff"/><stop offset="0.4935" stop-color="#00f0ed"/><stop offset="0.5326" stop-color="#00f0ea"/><stop offset="0.5352" stop-color="#00f0f4"/><stop offset="0.5404" stop-color="#00d8ff"/><stop offset="0.5586" stop-color="#0056ff"/><stop offset="0.5872" stop-color="#0001ff"/><stop offset="0.6940" stop-color="#00008c"/><stop offset="0.7513" stop-color="#000026"/><stop offset="0.8320" stop-color="#00000a"/><stop offset="0.9987" stop-color="#000001"/></linearGradient><linearGradient id="h107" gradientUnits="userSpaceOnUse" x1="0" y1="0" x2="0" y2="384"><stop offset="0.0013" stop-color="#000000"/><stop offset="0.2591" stop-color="#000000"/><stop offset="0.2721" stop-color="#000089"/><stop offset="0.2878" stop-color="#0000d9"/><stop offset="0.3216" stop-color="#0000ff"/><stop offset="0.3789" stop-color="#0041ff"/><stop offset="0.4570" stop-color="#00e2ff"/><stop offset="0.4727" stop-color="#00f0fd"/><stop offset="0.5326" stop-color="#00f0ea"/><stop offset="0.5378" stop-color="#00f0f9"/><stop offset="0.5612" stop-color="#0090ff"/><stop offset="0.5846" stop-color="#0007ff"/><stop offset="0.5898" stop-color="#0000fe"/><stop offset="0.6940" stop-color="#00008f"/><stop offset="0.7513" stop-color="#000027"/><stop offset="0.8320" stop-color="#00000b"/><stop offset="0.9987" stop-color="#000001"/></linearGradient><linearGradient id="h108" gradientUnits="userSpaceOnUse" x1="0" y1="0" x2="0" y2="384"><stop offset="0.0013" stop-color="#000000"/><stop offset="0.2565" stop-color="#000000"/><stop offset="0.2591" stop-color="#000003"/><stop offset="0.2695" stop-color="#000080"/><stop offset="0.2878" stop-color="#0000dd"/><stop offset="0.3216" stop-color="#0001ff"/><stop offset="0.3763" stop-color="#0037ff"/><stop offset="0.4622" stop-color="#00e2ff"/><stop offset="0.4779" stop-color="#00f0fe"/><stop offset="0.4961" stop-color="#00f0ef"/><stop offset="0.5404" stop-color="#00f0ea"/><stop offset="0.5508" stop-color="#00f0fc"/><stop offset="0.5638" stop-color="#00ceff"/><stop offset="0.5898" stop-color="#004cff"/><stop offset="0.6107" stop-color="#0000f7"/><stop offset="0.6159" stop-color="#0000e5"/><stop offset="0.6966" stop-color="#00008d"/><stop offset="0.7513" stop-color="#000029"/><stop offset="0.8320" stop-color="#00000b"/><stop offset="0.9987" stop-color="#000001"/></linearGradient><linearGradient id="h109" gradientUnits="userSpaceOnUse" x1="0" y1="0" x2="0" y2="384"><stop offset="0.0013" stop-color="#000000"/><stop offset="0.2565" stop-color="#000000"/><stop offset="0.2591" stop-color="#000010"/><stop offset="0.2695" stop-color="#000086"/><stop offset="0.2852" stop-color="#0000d6"/><stop offset="0.3190" stop-color="#0000ff"/><stop offset="0.3711" stop-color="#0028ff"/><stop offset="0.4518" stop-color="#00cdff"/><stop offset="0.4831" stop-color="#00f0ff"/><stop offset="0.5169" stop-color="#00f0ec"/><stop offset="0.5716" stop-color="#00f0ea"/><stop offset="0.5742" stop-color="#00f0f6"/><stop offset="0.6263" stop-color="#0026ff"/><stop offset="0.6706" stop-color="#0000ff"/><stop offset="0.6992" stop-color="#0000f1"/><stop offset="0.7826" stop-color="#000065"/><stop offset="0.8216" stop-color="#00003b"/><stop offset="0.8789" stop-color="#000022"/><stop offset="0.9987" stop-color="#00000c"/></linearGradient><linearGradient id="h110" gradientUnits="userSpaceOnUse" x1="0" y1="0" x2="0" y2="384"><stop offset="0.0013" stop-color="#000000"/><stop offset="0.2565" stop-color="#000000"/><stop offset="0.2669" stop-color="#00007b"/><stop offset="0.2852" stop-color="#0000db"/><stop offset="0.3190" stop-color="#0001ff"/><stop offset="0.3737" stop-color="#0027ff"/><stop offset="0.4544" stop-color="#00c9ff"/><stop offset="0.4883" stop-color="#00f0ff"/><stop offset="0.5091" stop-color="#00f0ee"/><stop offset="0.5638" stop-color="#00f0e9"/><stop offset="0.5977" stop-color="#00f0ed"/><stop offset="0.6003" stop-color="#00f0fa"/><stop offset="0.6263" stop-color="#0096ff"/><stop offset="0.6680" stop-color="#0080ff"/><stop offset="0.6914" stop-color="#0091ff"/><stop offset="0.7044" stop-color="#0089ff"/><stop offset="0.7383" stop-color="#005cff"/><stop offset="0.7721" stop-color="#0000fa"/><stop offset="0.8034" stop-color="#0000aa"/><stop offset="0.8451" stop-color="#00006c"/><stop offset="0.9180" stop-color="#00003c"/><stop offset="0.9987" stop-color="#000020"/></linearGradient><linearGradient id="h111" gradientUnits="userSpaceOnUse" x1="0" y1="0" x2="0" y2="384"><stop offset="0.0013" stop-color="#000000"/><stop offset="0.2539" stop-color="#000000"/><stop offset="0.2565" stop-color="#000009"/><stop offset="0.2669" stop-color="#000083"/><stop offset="0.2826" stop-color="#0000d3"/><stop offset="0.3164" stop-color="#0000fe"/><stop offset="0.3763" stop-color="#0026ff"/><stop offset="0.4128" stop-color="#0077ff"/><stop offset="0.4570" stop-color="#00c5ff"/><stop offset="0.4935" stop-color="#00f0ff"/><stop offset="0.5143" stop-color="#00f0ee"/><stop offset="0.5716" stop-color="#00f0e9"/><stop offset="0.6628" stop-color="#00f0fc"/><stop offset="0.6732" stop-color="#00f0f2"/><stop offset="0.6888" stop-color="#00f0c4"/><stop offset="0.6966" stop-color="#00f0bc"/><stop offset="0.7174" stop-color="#00f0d2"/><stop offset="0.7383" stop-color="#00f0fe"/><stop offset="0.7487" stop-color="#00d0ff"/><stop offset="0.7799" stop-color="#0046ff"/><stop offset="0.8008" stop-color="#0002ff"/><stop offset="0.8346" stop-color="#0000b2"/><stop offset="0.8711" stop-color="#000084"/><stop offset="0.9414" stop-color="#00004c"/><stop offset="0.9987" stop-color="#000032"/></linearGradient><linearGradient id="h112" gradientUnits="userSpaceOnUse" x1="0" y1="0" x2="0" y2="384"><stop offset="0.0013" stop-color="#000000"/><stop offset="0.2539" stop-color="#000000"/><stop offset="0.2669" stop-color="#000089"/><stop offset="0.2826" stop-color="#0000d8"/><stop offset="0.3164" stop-color="#0000ff"/><stop offset="0.3815" stop-color="#002aff"/><stop offset="0.4154" stop-color="#0076ff"/><stop offset="0.4701" stop-color="#00d0ff"/><stop offset="0.4987" stop-color="#00f0ff"/><stop offset="0.5195" stop-color="#00f0ee"/><stop offset="0.5742" stop-color="#00f0e9"/><stop offset="0.6628" stop-color="#00f0f8"/><stop offset="0.6732" stop-color="#00f0ea"/><stop offset="0.6888" stop-color="#00f0b9"/><stop offset="0.6966" stop-color="#00f0af"/><stop offset="0.7201" stop-color="#00f0c7"/><stop offset="0.7409" stop-color="#00f0f8"/><stop offset="0.7487" stop-color="#00dbff"/><stop offset="0.7826" stop-color="#0043ff"/><stop offset="0.8034" stop-color="#0000ff"/><stop offset="0.8372" stop-color="#0000b0"/><stop offset="0.8737" stop-color="#000083"/><stop offset="0.9440" stop-color="#00004c"/><stop offset="0.9987" stop-color="#000034"/></linearGradient><linearGradient id="h113" gradientUnits="userSpaceOnUse" x1="0" y1="0" x2="0" y2="384"><stop offset="0.0013" stop-color="#000000"/><stop offset="0.2539" stop-color="#000000"/><stop offset="0.2643" stop-color="#00007e"/><stop offset="0.2826" stop-color="#0000dc"/><stop offset="0.3164" stop-color="#0001ff"/><stop offset="0.3477" stop-color="#001eff"/><stop offset="0.3841" stop-color="#002bff"/><stop offset="0.4180" stop-color="#0074ff"/><stop offset="0.5039" stop-color="#00f0ff"/><stop offset="0.5247" stop-color="#00f0ee"/><stop offset="0.5768" stop-color="#00f0ea"/><stop offset="0.6602" stop-color="#00f0f6"/><stop offset="0.6732" stop-color="#00f0e3"/><stop offset="0.6914" stop-color="#00f0a7"/><stop offset="0.6992" stop-color="#00f0a2"/><stop offset="0.7279" stop-color="#00f0c5"/><stop offset="0.7461" stop-color="#00f0ff"/><stop offset="0.7799" stop-color="#0055ff"/><stop offset="0.8034" stop-color="#0005ff"/><stop offset="0.8398" stop-color="#0000af"/><stop offset="0.8737" stop-color="#000085"/><stop offset="0.9440" stop-color="#00004e"/><stop offset="0.9987" stop-color="#000035"/></linearGradient><linearGradient id="h114" gradientUnits="userSpaceOnUse" x1="0" y1="0" x2="0" y2="384"><stop offset="0.0013" stop-color="#000000"/><stop offset="0.2513" stop-color="#000000"/><stop offset="0.2539" stop-color="#00000b"/><stop offset="0.2643" stop-color="#000083"/><stop offset="0.2799" stop-color="#0000d4"/><stop offset="0.3138" stop-color="#0000ff"/><stop offset="0.3477" stop-color="#001eff"/><stop offset="0.3867" stop-color="#002cff"/><stop offset="0.4206" stop-color="#0072ff"/><stop offset="0.5091" stop-color="#00f0ff"/><stop offset="0.5430" stop-color="#00f0ed"/><stop offset="0.6602" stop-color="#00f0f3"/><stop offset="0.6732" stop-color="#00f0dd"/><stop offset="0.6888" stop-color="#00f0a2"/><stop offset="0.6992" stop-color="#00f095"/><stop offset="0.7305" stop-color="#00f0bb"/><stop offset="0.7409" stop-color="#00f0d8"/><stop offset="0.7487" stop-color="#00f0ff"/><stop offset="0.7799" stop-color="#005dff"/><stop offset="0.8060" stop-color="#0003ff"/><stop offset="0.8398" stop-color="#0000b2"/><stop offset="0.8763" stop-color="#000084"/><stop offset="0.9466" stop-color="#00004e"/><stop offset="0.9987" stop-color="#000037"/></linearGradient><linearGradient id="h115" gradientUnits="userSpaceOnUse" x1="0" y1="0" x2="0" y2="384"><stop offset="0.0013" stop-color="#000000"/><stop offset="0.2591" stop-color="#000000"/><stop offset="0.2695" stop-color="#00007e"/><stop offset="0.2878" stop-color="#0000dc"/><stop offset="0.3216" stop-color="#0001ff"/><stop offset="0.3529" stop-color="#001eff"/><stop offset="0.3867" stop-color="#0028ff"/><stop offset="0.4258" stop-color="#0073ff"/><stop offset="0.5143" stop-color="#00f0ff"/><stop offset="0.5430" stop-color="#00f0ed"/><stop offset="0.6602" stop-color="#00f0f0"/><stop offset="0.6732" stop-color="#00f0d7"/><stop offset="0.6888" stop-color="#00f096"/><stop offset="0.6992" stop-color="#01f088"/><stop offset="0.7331" stop-color="#00f0b1"/><stop offset="0.7435" stop-color="#00f0d3"/><stop offset="0.7513" stop-color="#00efff"/><stop offset="0.7826" stop-color="#005aff"/><stop offset="0.8086" stop-color="#0001ff"/><stop offset="0.8398" stop-color="#0000b6"/><stop offset="0.8763" stop-color="#000086"/><stop offset="0.9492" stop-color="#00004e"/><stop offset="0.9987" stop-color="#000038"/></linearGradient><linearGradient id="h116" gradientUnits="userSpaceOnUse" x1="0" y1="0" x2="0" y2="384"><stop offset="0.0013" stop-color="#000000"/><stop offset="0.2799" stop-color="#000000"/><stop offset="0.2826" stop-color="#000010"/><stop offset="0.2930" stop-color="#000086"/><stop offset="0.3086" stop-color="#0000d6"/><stop offset="0.3424" stop-color="#0000ff"/><stop offset="0.3867" stop-color="#0023ff"/><stop offset="0.4310" stop-color="#0074ff"/><stop offset="0.4961" stop-color="#00d7ff"/><stop offset="0.5221" stop-color="#00f0fc"/><stop offset="0.5508" stop-color="#00f0ed"/><stop offset="0.6576" stop-color="#00f0ee"/><stop offset="0.6706" stop-color="#00f0d9"/><stop offset="0.6888" stop-color="#00f08a"/><stop offset="0.6992" stop-color="#03ef7a"/><stop offset="0.7331" stop-color="#00f0a1"/><stop offset="0.7435" stop-color="#00f0c3"/><stop offset="0.7513" stop-color="#00f0f0"/><stop offset="0.7539" stop-color="#00edff"/><stop offset="0.7852" stop-color="#0057ff"/><stop offset="0.8086" stop-color="#0006ff"/><stop offset="0.8398" stop-color="#0000b9"/><stop offset="0.8763" stop-color="#000088"/><stop offset="0.9492" stop-color="#000050"/><stop offset="0.9987" stop-color="#00003a"/></linearGradient><linearGradient id="h117" gradientUnits="userSpaceOnUse" x1="0" y1="0" x2="0" y2="384"><stop offset="0.0013" stop-color="#000000"/><stop offset="0.3034" stop-color="#000000"/><stop offset="0.3060" stop-color="#000010"/><stop offset="0.3164" stop-color="#000086"/><stop offset="0.3242" stop-color="#0000b8"/><stop offset="0.3346" stop-color="#0000de"/><stop offset="0.3659" stop-color="#0000ff"/><stop offset="0.4987" stop-color="#00d3ff"/><stop offset="0.5273" stop-color="#00f0fc"/><stop offset="0.5534" stop-color="#00f0ed"/><stop offset="0.6576" stop-color="#00f0ec"/><stop offset="0.6706" stop-color="#00f0d3"/><stop offset="0.6888" stop-color="#02ef7e"/><stop offset="0.6992" stop-color="#05ef6b"/><stop offset="0.7174" stop-color="#03ef77"/><stop offset="0.7357" stop-color="#00f097"/><stop offset="0.7435" stop-color="#00f0b3"/><stop offset="0.7539" stop-color="#00f0f4"/><stop offset="0.7565" stop-color="#00eaff"/><stop offset="0.7878" stop-color="#0053ff"/><stop offset="0.8112" stop-color="#0004ff"/><stop offset="0.8398" stop-color="#0000bd"/><stop offset="0.8711" stop-color="#000090"/><stop offset="0.9466" stop-color="#000053"/><stop offset="0.9987" stop-color="#00003c"/></linearGradient><linearGradient id="h118" gradientUnits="userSpaceOnUse" x1="0" y1="0" x2="0" y2="384"><stop offset="0.0013" stop-color="#000000"/><stop offset="0.3190" stop-color="#000000"/><stop offset="0.3216" stop-color="#000010"/><stop offset="0.3294" stop-color="#00006e"/><stop offset="0.3398" stop-color="#0000ce"/><stop offset="0.3711" stop-color="#0000fd"/><stop offset="0.4388" stop-color="#0072ff"/><stop offset="0.5091" stop-color="#00daff"/><stop offset="0.5326" stop-color="#00f0fd"/><stop offset="0.5586" stop-color="#00f0ee"/><stop offset="0.6576" stop-color="#00f0e9"/><stop offset="0.6706" stop-color="#00f0ce"/><stop offset="0.6914" stop-color="#06ef69"/><stop offset="0.7018" stop-color="#08ee5c"/><stop offset="0.7357" stop-color="#01f086"/><stop offset="0.7461" stop-color="#00f0b0"/><stop offset="0.7565" stop-color="#00f0f8"/><stop offset="0.7878" stop-color="#005bff"/><stop offset="0.8138" stop-color="#0002ff"/><stop offset="0.8398" stop-color="#0000c0"/><stop offset="0.8711" stop-color="#000092"/><stop offset="0.9492" stop-color="#000054"/><stop offset="0.9987" stop-color="#00003d"/></linearGradient><linearGradient id="h119" gradientUnits="userSpaceOnUse" x1="0" y1="0" x2="0" y2="384"><stop offset="0.0013" stop-color="#000000"/><stop offset="0.3294" stop-color="#000000"/><stop offset="0.3320" stop-color="#00000a"/><stop offset="0.3503" stop-color="#0000d8"/><stop offset="0.3737" stop-color="#0000fc"/><stop offset="0.5117" stop-color="#00d4ff"/><stop offset="0.5404" stop-color="#00f0fd"/><stop offset="0.5638" stop-color="#00f0ee"/><stop offset="0.6576" stop-color="#00f0e5"/><stop offset="0.6706" stop-color="#00f0c7"/><stop offset="0.6914" stop-color="#08ee5a"/><stop offset="0.7018" stop-color="#0bed4c"/><stop offset="0.7227" stop-color="#08ee5c"/><stop offset="0.7383" stop-color="#03ef7b"/><stop offset="0.7487" stop-color="#00f0ae"/><stop offset="0.7591" stop-color="#00f0fe"/><stop offset="0.7904" stop-color="#0057ff"/><stop offset="0.8164" stop-color="#0000ff"/><stop offset="0.8398" stop-color="#0000c5"/><stop offset="0.8711" stop-color="#000094"/><stop offset="0.9518" stop-color="#000055"/><stop offset="0.9987" stop-color="#00003f"/></linearGradient><linearGradient id="h120" gradientUnits="userSpaceOnUse" x1="0" y1="0" x2="0" y2="384"><stop offset="0.0013" stop-color="#000000"/><stop offset="0.3398" stop-color="#000000"/><stop offset="0.3581" stop-color="#0000d9"/><stop offset="0.3789" stop-color="#0000ff"/><stop offset="0.5195" stop-color="#00d3ff"/><stop offset="0.5482" stop-color="#00f0fe"/><stop offset="0.6576" stop-color="#00f0e1"/><stop offset="0.6706" stop-color="#00f0bf"/><stop offset="0.6888" stop-color="#09ee55"/><stop offset="0.6992" stop-color="#0eed3b"/><stop offset="0.7201" stop-color="#0ced44"/><stop offset="0.7383" stop-color="#06ee65"/><stop offset="0.7487" stop-color="#00f09a"/><stop offset="0.7617" stop-color="#00efff"/><stop offset="0.7930" stop-color="#0055ff"/><stop offset="0.8190" stop-color="#0000fe"/><stop offset="0.8424" stop-color="#0000c5"/><stop offset="0.8711" stop-color="#000098"/><stop offset="0.9544" stop-color="#000056"/><stop offset="0.9987" stop-color="#000042"/></linearGradient><linearGradient id="h121" gradientUnits="userSpaceOnUse" x1="0" y1="0" x2="0" y2="384"><stop offset="0.0013" stop-color="#000000"/><stop offset="0.3503" stop-color="#000000"/><stop offset="0.3529" stop-color="#000010"/><stop offset="0.3685" stop-color="#0000d8"/><stop offset="0.3711" stop-color="#0000eb"/><stop offset="0.3841" stop-color="#0001ff"/><stop offset="0.5273" stop-color="#00cfff"/><stop offset="0.5612" stop-color="#00f0fd"/><stop offset="0.6576" stop-color="#00f0dd"/><stop offset="0.6706" stop-color="#00f0b6"/><stop offset="0.6914" stop-color="#0eec37"/><stop offset="0.7018" stop-color="#11ec25"/><stop offset="0.7227" stop-color="#10ec2f"/><stop offset="0.7383" stop-color="#0bed4d"/><stop offset="0.7487" stop-color="#02f083"/><stop offset="0.7643" stop-color="#00eeff"/><stop offset="0.7956" stop-color="#0054ff"/><stop offset="0.8216" stop-color="#0000fe"/><stop offset="0.8424" stop-color="#0000cb"/><stop offset="0.8737" stop-color="#00009a"/><stop offset="0.9570" stop-color="#000058"/><stop offset="0.9987" stop-color="#000045"/></linearGradient><linearGradient id="h122" gradientUnits="userSpaceOnUse" x1="0" y1="0" x2="0" y2="384"><stop offset="0.0013" stop-color="#000000"/><stop offset="0.3607" stop-color="#000000"/><stop offset="0.3633" stop-color="#000011"/><stop offset="0.3789" stop-color="#0000e0"/><stop offset="0.3815" stop-color="#0000f3"/><stop offset="0.3893" stop-color="#0000ff"/><stop offset="0.5404" stop-color="#00d1ff"/><stop offset="0.5742" stop-color="#00f0fd"/><stop offset="0.6576" stop-color="#00f0da"/><stop offset="0.6706" stop-color="#00f0ad"/><stop offset="0.6888" stop-color="#0fec30"/><stop offset="0.6966" stop-color="#14eb14"/><stop offset="0.7201" stop-color="#15eb14"/><stop offset="0.7383" stop-color="#0fec34"/><stop offset="0.7487" stop-color="#06ef6b"/><stop offset="0.7669" stop-color="#00edff"/><stop offset="0.7982" stop-color="#0052ff"/><stop offset="0.8242" stop-color="#0000fe"/><stop offset="0.8477" stop-color="#0000c7"/><stop offset="0.8737" stop-color="#00009e"/><stop offset="0.9570" stop-color="#00005c"/><stop offset="0.9987" stop-color="#000048"/></linearGradient><linearGradient id="h123" gradientUnits="userSpaceOnUse" x1="0" y1="0" x2="0" y2="384"><stop offset="0.0013" stop-color="#000000"/><stop offset="0.3711" stop-color="#000000"/><stop offset="0.3737" stop-color="#000011"/><stop offset="0.3893" stop-color="#0000e5"/><stop offset="0.3919" stop-color="#0000f8"/><stop offset="0.3971" stop-color="#0000ff"/><stop offset="0.5560" stop-color="#00d6ff"/><stop offset="0.5872" stop-color="#00f0fd"/><stop offset="0.6419" stop-color="#00f0e9"/><stop offset="0.6576" stop-color="#00f0d7"/><stop offset="0.6706" stop-color="#00f0a3"/><stop offset="0.6888" stop-color="#13eb1b"/><stop offset="0.6940" stop-color="#28ed11"/><stop offset="0.7018" stop-color="#38ef0f"/><stop offset="0.7148" stop-color="#38ef0f"/><stop offset="0.7383" stop-color="#13eb1a"/><stop offset="0.7487" stop-color="#0aee52"/><stop offset="0.7695" stop-color="#00ebff"/><stop offset="0.7982" stop-color="#005cff"/><stop offset="0.8268" stop-color="#0000ff"/><stop offset="0.8737" stop-color="#0000a3"/><stop offset="0.9987" stop-color="#00004b"/></linearGradient><linearGradient id="h124" gradientUnits="userSpaceOnUse" x1="0" y1="0" x2="0" y2="384"><stop offset="0.0013" stop-color="#000000"/><stop offset="0.3815" stop-color="#000000"/><stop offset="0.3841" stop-color="#000012"/><stop offset="0.3997" stop-color="#0000e8"/><stop offset="0.4023" stop-color="#0000fb"/><stop offset="0.4076" stop-color="#0002ff"/><stop offset="0.5742" stop-color="#00dbff"/><stop offset="0.6003" stop-color="#00f0fe"/><stop offset="0.6471" stop-color="#00f0e5"/><stop offset="0.6576" stop-color="#00f0d4"/><stop offset="0.6680" stop-color="#00f0a9"/><stop offset="0.6862" stop-color="#13eb18"/><stop offset="0.6966" stop-color="#4ef10c"/><stop offset="0.7096" stop-color="#59f20b"/><stop offset="0.7305" stop-color="#45f00d"/><stop offset="0.7435" stop-color="#14eb17"/><stop offset="0.7721" stop-color="#00e9ff"/><stop offset="0.8008" stop-color="#005aff"/><stop offset="0.8294" stop-color="#0000ff"/><stop offset="0.8763" stop-color="#0000a5"/><stop offset="0.9987" stop-color="#00004e"/></linearGradient><linearGradient id="h125" gradientUnits="userSpaceOnUse" x1="0" y1="0" x2="0" y2="384"><stop offset="0.0013" stop-color="#000000"/><stop offset="0.3971" stop-color="#000000"/><stop offset="0.3997" stop-color="#000012"/><stop offset="0.4154" stop-color="#0000f0"/><stop offset="0.4180" stop-color="#0004ff"/><stop offset="0.5846" stop-color="#00d8ff"/><stop offset="0.6133" stop-color="#00f0ff"/><stop offset="0.6419" stop-color="#00f0ea"/><stop offset="0.6549" stop-color="#00f0d8"/><stop offset="0.6654" stop-color="#00f0af"/><stop offset="0.6732" stop-color="#03ef7b"/><stop offset="0.6836" stop-color="#13eb19"/><stop offset="0.6940" stop-color="#63f309"/><stop offset="0.7096" stop-color="#7af506"/><stop offset="0.7331" stop-color="#61f30a"/><stop offset="0.7409" stop-color="#43f00e"/><stop offset="0.7461" stop-color="#1eec13"/><stop offset="0.7513" stop-color="#0fec35"/><stop offset="0.7591" stop-color="#02ef7f"/><stop offset="0.7721" stop-color="#00f0f6"/><stop offset="0.7747" stop-color="#00e7ff"/><stop offset="0.8034" stop-color="#0059ff"/><stop offset="0.8320" stop-color="#0001ff"/><stop offset="0.8763" stop-color="#0000aa"/><stop offset="0.9987" stop-color="#000051"/></linearGradient><linearGradient id="h126" gradientUnits="userSpaceOnUse" x1="0" y1="0" x2="0" y2="384"><stop offset="0.0013" stop-color="#000000"/><stop offset="0.4180" stop-color="#000000"/><stop offset="0.4206" stop-color="#000014"/><stop offset="0.4362" stop-color="#0000fb"/><stop offset="0.4388" stop-color="#000fff"/><stop offset="0.5898" stop-color="#00ceff"/><stop offset="0.6263" stop-color="#00f0fd"/><stop offset="0.6471" stop-color="#00f0e7"/><stop offset="0.6576" stop-color="#00f0cd"/><stop offset="0.6706" stop-color="#01f084"/><stop offset="0.6810" stop-color="#12eb1f"/><stop offset="0.6888" stop-color="#5ff30a"/><stop offset="0.6940" stop-color="#83f605"/><stop offset="0.7018" stop-color="#98f802"/><stop offset="0.7122" stop-color="#9cf902"/><stop offset="0.7357" stop-color="#7df506"/><stop offset="0.7435" stop-color="#55f10b"/><stop offset="0.7513" stop-color="#13eb1a"/><stop offset="0.7721" stop-color="#00f0e3"/><stop offset="0.7773" stop-color="#00e5ff"/><stop offset="0.8034" stop-color="#0062ff"/><stop offset="0.8346" stop-color="#0002ff"/><stop offset="0.8763" stop-color="#0000af"/><stop offset="0.9987" stop-color="#000054"/></linearGradient><linearGradient id="h127" gradientUnits="userSpaceOnUse" x1="0" y1="0" x2="0" y2="384"><stop offset="0.0013" stop-color="#000000"/><stop offset="0.4362" stop-color="#000000"/><stop offset="0.4388" stop-color="#000014"/><stop offset="0.4544" stop-color="#0003ff"/><stop offset="0.4570" stop-color="#0016ff"/><stop offset="0.6341" stop-color="#00f0ff"/><stop offset="0.6497" stop-color="#00f0e5"/><stop offset="0.6602" stop-color="#00f0be"/><stop offset="0.6706" stop-color="#03ef78"/><stop offset="0.6784" stop-color="#10ec29"/><stop offset="0.6810" stop-color="#1eec13"/><stop offset="0.6888" stop-color="#7df606"/><stop offset="0.6940" stop-color="#a3f901"/><stop offset="0.7018" stop-color="#b7fb00"/><stop offset="0.7122" stop-color="#bafb00"/><stop offset="0.7305" stop-color="#adfa00"/><stop offset="0.7383" stop-color="#96f803"/><stop offset="0.7461" stop-color="#63f309"/><stop offset="0.7539" stop-color="#13eb19"/><stop offset="0.7747" stop-color="#00f0e6"/><stop offset="0.7773" stop-color="#00f0fd"/><stop offset="0.7799" stop-color="#00e2ff"/><stop offset="0.8060" stop-color="#0061ff"/><stop offset="0.8398" stop-color="#0000fc"/><stop offset="0.8789" stop-color="#0000b2"/><stop offset="0.9987" stop-color="#000058"/></linearGradient><linearGradient id="h128" gradientUnits="userSpaceOnUse" x1="0" y1="0" x2="0" y2="384"><stop offset="0.0013" stop-color="#000000"/><stop offset="0.4518" stop-color="#000000"/><stop offset="0.4544" stop-color="#000015"/><stop offset="0.4622" stop-color="#000095"/><stop offset="0.4701" stop-color="#0009ff"/><stop offset="0.4727" stop-color="#001cff"/><stop offset="0.6419" stop-color="#00f0fe"/><stop offset="0.6523" stop-color="#00f0e1"/><stop offset="0.6602" stop-color="#00f0ba"/><stop offset="0.6706" stop-color="#05ef6b"/><stop offset="0.6784" stop-color="#14eb17"/><stop offset="0.6862" stop-color="#80f606"/><stop offset="0.6914" stop-color="#b1fa00"/><stop offset="0.6992" stop-color="#cdfc00"/><stop offset="0.7122" stop-color="#d5fd00"/><stop offset="0.7305" stop-color="#c8fc00"/><stop offset="0.7409" stop-color="#adfa00"/><stop offset="0.7487" stop-color="#6df408"/><stop offset="0.7565" stop-color="#13eb1a"/><stop offset="0.7669" stop-color="#00f089"/><stop offset="0.7799" stop-color="#00efff"/><stop offset="0.8060" stop-color="#006aff"/><stop offset="0.8424" stop-color="#0000fd"/><stop offset="0.8789" stop-color="#0000b8"/><stop offset="0.9987" stop-color="#00005b"/></linearGradient><linearGradient id="h129" gradientUnits="userSpaceOnUse" x1="0" y1="0" x2="0" y2="384"><stop offset="0.0013" stop-color="#000000"/><stop offset="0.4596" stop-color="#000000"/><stop offset="0.4622" stop-color="#000007"/><stop offset="0.4779" stop-color="#0000fa"/><stop offset="0.4805" stop-color="#0019ff"/><stop offset="0.6003" stop-color="#00a5ff"/><stop offset="0.6445" stop-color="#00ecff"/><stop offset="0.6549" stop-color="#00f0d9"/><stop offset="0.6654" stop-color="#00f08f"/><stop offset="0.6758" stop-color="#11ec24"/><stop offset="0.6784" stop-color="#29ed11"/><stop offset="0.6862" stop-color="#9ff901"/><stop offset="0.6914" stop-color="#cafc00"/><stop offset="0.6992" stop-color="#e8fe00"/><stop offset="0.7148" stop-color="#f1fe00"/><stop offset="0.7305" stop-color="#e5fd00"/><stop offset="0.7409" stop-color="#c9fc00"/><stop offset="0.7461" stop-color="#abfa00"/><stop offset="0.7565" stop-color="#2eee11"/><stop offset="0.7591" stop-color="#13eb1c"/><stop offset="0.7643" stop-color="#09ee56"/><stop offset="0.7826" stop-color="#00ecff"/><stop offset="0.8086" stop-color="#006aff"/><stop offset="0.8451" stop-color="#0000ff"/><stop offset="0.8789" stop-color="#0000bd"/><stop offset="0.9987" stop-color="#00005e"/></linearGradient><linearGradient id="h130" gradientUnits="userSpaceOnUse" x1="0" y1="0" x2="0" y2="384"><stop offset="0.0013" stop-color="#000000"/><stop offset="0.4674" stop-color="#000000"/><stop offset="0.4701" stop-color="#000007"/><stop offset="0.4857" stop-color="#0000f7"/><stop offset="0.4883" stop-color="#0016ff"/><stop offset="0.6081" stop-color="#009eff"/><stop offset="0.6471" stop-color="#00e9ff"/><stop offset="0.6549" stop-color="#00f0de"/><stop offset="0.6654" stop-color="#01f089"/><stop offset="0.6758" stop-color="#16eb14"/><stop offset="0.6862" stop-color="#b9fb00"/><stop offset="0.6940" stop-color="#f2fe00"/><stop offset="0.6992" stop-color="#fffb00"/><stop offset="0.7148" stop-color="#fff300"/><stop offset="0.7305" stop-color="#fffc00"/><stop offset="0.7383" stop-color="#f1fe00"/><stop offset="0.7487" stop-color="#b3fb00"/><stop offset="0.7591" stop-color="#2bed11"/><stop offset="0.7617" stop-color="#12eb20"/><stop offset="0.7695" stop-color="#04ef76"/><stop offset="0.7826" stop-color="#00f0f1"/><stop offset="0.7852" stop-color="#00eaff"/><stop offset="0.8112" stop-color="#006aff"/><stop offset="0.8477" stop-color="#0001ff"/><stop offset="0.8815" stop-color="#0000c0"/><stop offset="0.9987" stop-color="#000062"/></linearGradient><linearGradient id="h131" gradientUnits="userSpaceOnUse" x1="0" y1="0" x2="0" y2="384"><stop offset="0.0013" stop-color="#000000"/><stop offset="0.4753" stop-color="#000000"/><stop offset="0.4779" stop-color="#000014"/><stop offset="0.4935" stop-color="#0000ff"/><stop offset="0.4961" stop-color="#0012ff"/><stop offset="0.6159" stop-color="#009aff"/><stop offset="0.6367" stop-color="#00bfff"/><stop offset="0.6497" stop-color="#00e9ff"/><stop offset="0.6549" stop-color="#00f0e4"/><stop offset="0.6654" stop-color="#02f082"/><stop offset="0.6732" stop-color="#11ec24"/><stop offset="0.6758" stop-color="#2ced11"/><stop offset="0.6836" stop-color="#b3fb00"/><stop offset="0.6914" stop-color="#feff00"/><stop offset="0.6940" stop-color="#fff200"/><stop offset="0.7018" stop-color="#ffdf00"/><stop offset="0.7174" stop-color="#ffd900"/><stop offset="0.7331" stop-color="#ffe500"/><stop offset="0.7409" stop-color="#fffb00"/><stop offset="0.7461" stop-color="#e4fd00"/><stop offset="0.7513" stop-color="#b8fb00"/><stop offset="0.7617" stop-color="#26ed12"/><stop offset="0.7643" stop-color="#11ec24"/><stop offset="0.7721" stop-color="#03ef7a"/><stop offset="0.7852" stop-color="#00f0f5"/><stop offset="0.7878" stop-color="#00e7ff"/><stop offset="0.8138" stop-color="#006aff"/><stop offset="0.8503" stop-color="#0001ff"/><stop offset="0.8815" stop-color="#0000c5"/><stop offset="0.9987" stop-color="#000065"/></linearGradient><linearGradient id="h132" gradientUnits="userSpaceOnUse" x1="0" y1="0" x2="0" y2="384"><stop offset="0.0013" stop-color="#000000"/><stop offset="0.4805" stop-color="#000000"/><stop offset="0.4909" stop-color="#00009e"/><stop offset="0.4987" stop-color="#000aff"/><stop offset="0.6237" stop-color="#0096ff"/><stop offset="0.6393" stop-color="#00b6ff"/><stop offset="0.6523" stop-color="#00eeff"/><stop offset="0.6654" stop-color="#03ef7c"/><stop offset="0.6732" stop-color="#14eb16"/><stop offset="0.6810" stop-color="#a5f901"/><stop offset="0.6888" stop-color="#fffb00"/><stop offset="0.6992" stop-color="#ffca00"/><stop offset="0.7174" stop-color="#ffbf00"/><stop offset="0.7357" stop-color="#ffcf00"/><stop offset="0.7461" stop-color="#fffd00"/><stop offset="0.7539" stop-color="#b8fb00"/><stop offset="0.7643" stop-color="#20ec12"/><stop offset="0.7747" stop-color="#02ef7e"/><stop offset="0.7826" stop-color="#00f0ca"/><stop offset="0.7878" stop-color="#00f0f9"/><stop offset="0.7904" stop-color="#00e5ff"/><stop offset="0.8034" stop-color="#009eff"/><stop offset="0.8190" stop-color="#0060ff"/><stop offset="0.8529" stop-color="#0001ff"/><stop offset="0.8841" stop-color="#0000c8"/><stop offset="0.9987" stop-color="#000068"/></linearGradient><linearGradient id="h133" gradientUnits="userSpaceOnUse" x1="0" y1="0" x2="0" y2="384"><stop offset="0.0013" stop-color="#000000"/><stop offset="0.4831" stop-color="#000000"/><stop offset="0.4857" stop-color="#000013"/><stop offset="0.5013" stop-color="#0000f0"/><stop offset="0.5039" stop-color="#0004ff"/><stop offset="0.6263" stop-color="#008cff"/><stop offset="0.6419" stop-color="#00b1ff"/><stop offset="0.6523" stop-color="#00e6ff"/><stop offset="0.6549" stop-color="#00f0f3"/><stop offset="0.6628" stop-color="#00f097"/><stop offset="0.6706" stop-color="#10ec2d"/><stop offset="0.6732" stop-color="#25ed12"/><stop offset="0.6810" stop-color="#bafb00"/><stop offset="0.6862" stop-color="#fffe00"/><stop offset="0.6914" stop-color="#ffd100"/><stop offset="0.6966" stop-color="#ffb800"/><stop offset="0.7148" stop-color="#ffa500"/><stop offset="0.7357" stop-color="#ffb400"/><stop offset="0.7435" stop-color="#ffd200"/><stop offset="0.7487" stop-color="#fff600"/><stop offset="0.7513" stop-color="#f0fe00"/><stop offset="0.7565" stop-color="#b6fb00"/><stop offset="0.7669" stop-color="#19ec13"/><stop offset="0.7773" stop-color="#01f083"/><stop offset="0.7852" stop-color="#00f0cf"/><stop offset="0.7904" stop-color="#00f0fd"/><stop offset="0.7930" stop-color="#00e2ff"/><stop offset="0.8060" stop-color="#009dff"/><stop offset="0.8242" stop-color="#0056ff"/><stop offset="0.8555" stop-color="#0001ff"/><stop offset="0.8867" stop-color="#0000ca"/><stop offset="0.9987" stop-color="#00006b"/></linearGradient><linearGradient id="h134" gradientUnits="userSpaceOnUse" x1="0" y1="0" x2="0" y2="384"><stop offset="0.0013" stop-color="#000000"/><stop offset="0.4883" stop-color="#000000"/><stop offset="0.4909" stop-color="#000012"/><stop offset="0.5065" stop-color="#0000ea"/><stop offset="0.5117" stop-color="#0000ff"/><stop offset="0.6263" stop-color="#007fff"/><stop offset="0.6419" stop-color="#00a6ff"/><stop offset="0.6523" stop-color="#00e0ff"/><stop offset="0.6549" stop-color="#00f0f9"/><stop offset="0.6628" stop-color="#00f093"/><stop offset="0.6706" stop-color="#12ec20"/><stop offset="0.6732" stop-color="#37ef0f"/><stop offset="0.6810" stop-color="#cefc00"/><stop offset="0.6836" stop-color="#f5fe00"/><stop offset="0.6862" stop-color="#ffe900"/><stop offset="0.6914" stop-color="#ffba00"/><stop offset="0.6992" stop-color="#ff9900"/><stop offset="0.7201" stop-color="#ff8b00"/><stop offset="0.7383" stop-color="#ffa100"/><stop offset="0.7435" stop-color="#ffb800"/><stop offset="0.7513" stop-color="#fff400"/><stop offset="0.7539" stop-color="#effe00"/><stop offset="0.7591" stop-color="#b0fa00"/><stop offset="0.7669" stop-color="#38ef0f"/><stop offset="0.7695" stop-color="#14eb16"/><stop offset="0.7799" stop-color="#00f08a"/><stop offset="0.7930" stop-color="#00edff"/><stop offset="0.8060" stop-color="#00a7ff"/><stop offset="0.8242" stop-color="#005fff"/><stop offset="0.8581" stop-color="#0001ff"/><stop offset="0.8945" stop-color="#0000c7"/><stop offset="0.9987" stop-color="#00006e"/></linearGradient><linearGradient id="h135" gradientUnits="userSpaceOnUse" x1="0" y1="0" x2="0" y2="384"><stop offset="0.0013" stop-color="#000000"/><stop offset="0.4935" stop-color="#000000"/><stop offset="0.4961" stop-color="#000012"/><stop offset="0.5117" stop-color="#0000e4"/><stop offset="0.5143" stop-color="#0000f6"/><stop offset="0.5247" stop-color="#0001ff"/><stop offset="0.5898" stop-color="#003fff"/><stop offset="0.6263" stop-color="#0072ff"/><stop offset="0.6419" stop-color="#009cff"/><stop offset="0.6523" stop-color="#00ddff"/><stop offset="0.6549" stop-color="#00f0fb"/><stop offset="0.6628" stop-color="#00f08e"/><stop offset="0.6706" stop-color="#15eb14"/><stop offset="0.6784" stop-color="#b7fb00"/><stop offset="0.6836" stop-color="#fff400"/><stop offset="0.6888" stop-color="#ffb900"/><stop offset="0.6966" stop-color="#ff8800"/><stop offset="0.7174" stop-color="#ff6e00"/><stop offset="0.7383" stop-color="#ff8600"/><stop offset="0.7461" stop-color="#ffaf00"/><stop offset="0.7539" stop-color="#fff600"/><stop offset="0.7617" stop-color="#a8fa00"/><stop offset="0.7695" stop-color="#2fee10"/><stop offset="0.7721" stop-color="#12eb1d"/><stop offset="0.7799" stop-color="#04ef75"/><stop offset="0.7930" stop-color="#00f0f2"/><stop offset="0.7956" stop-color="#00e9ff"/><stop offset="0.8060" stop-color="#00b1ff"/><stop offset="0.8268" stop-color="#005dff"/><stop offset="0.8607" stop-color="#0000ff"/><stop offset="0.9076" stop-color="#0000be"/><stop offset="0.9987" stop-color="#000071"/></linearGradient><linearGradient id="h136" gradientUnits="userSpaceOnUse" x1="0" y1="0" x2="0" y2="384"><stop offset="0.0013" stop-color="#000000"/><stop offset="0.4987" stop-color="#000000"/><stop offset="0.5013" stop-color="#000011"/><stop offset="0.5169" stop-color="#0000de"/><stop offset="0.5195" stop-color="#0000f0"/><stop offset="0.5378" stop-color="#0002ff"/><stop offset="0.5924" stop-color="#0033ff"/><stop offset="0.6263" stop-color="#0064ff"/><stop offset="0.6419" stop-color="#0094ff"/><stop offset="0.6523" stop-color="#00dbff"/><stop offset="0.6549" stop-color="#00f0fb"/><stop offset="0.6628" stop-color="#01f086"/><stop offset="0.6680" stop-color="#0fec31"/><stop offset="0.6706" stop-color="#25ed12"/><stop offset="0.6758" stop-color="#97f803"/><stop offset="0.6810" stop-color="#f5fe00"/><stop offset="0.6836" stop-color="#ffe200"/><stop offset="0.6888" stop-color="#ffa400"/><stop offset="0.6966" stop-color="#ff6e00"/><stop offset="0.7070" stop-color="#ff5800"/><stop offset="0.7227" stop-color="#ff5200"/><stop offset="0.7331" stop-color="#ff5c00"/><stop offset="0.7409" stop-color="#ff7500"/><stop offset="0.7487" stop-color="#ffac00"/><stop offset="0.7565" stop-color="#fffc00"/><stop offset="0.7643" stop-color="#9cf902"/><stop offset="0.7721" stop-color="#23ed12"/><stop offset="0.7747" stop-color="#11ec26"/><stop offset="0.7826" stop-color="#02ef7d"/><stop offset="0.7956" stop-color="#00f0fa"/><stop offset="0.7982" stop-color="#00e4ff"/><stop offset="0.8268" stop-color="#0065ff"/><stop offset="0.8633" stop-color="#0000fe"/><stop offset="0.9154" stop-color="#0000ba"/><stop offset="0.9987" stop-color="#000074"/></linearGradient><linearGradient id="h137" gradientUnits="userSpaceOnUse" x1="0" y1="0" x2="0" y2="384"><stop offset="0.0013" stop-color="#000000"/><stop offset="0.5039" stop-color="#000000"/><stop offset="0.5065" stop-color="#000011"/><stop offset="0.5221" stop-color="#0000d9"/><stop offset="0.5247" stop-color="#0000ea"/><stop offset="0.5508" stop-color="#0001ff"/><stop offset="0.5924" stop-color="#0026ff"/><stop offset="0.6263" stop-color="#0056ff"/><stop offset="0.6393" stop-color="#007fff"/><stop offset="0.6523" stop-color="#00dbff"/><stop offset="0.6549" stop-color="#00f0f8"/><stop offset="0.6628" stop-color="#02ef7e"/><stop offset="0.6680" stop-color="#11ec25"/><stop offset="0.6706" stop-color="#36ee0f"/><stop offset="0.6758" stop-color="#abfa00"/><stop offset="0.6810" stop-color="#fff700"/><stop offset="0.6888" stop-color="#ff9000"/><stop offset="0.6966" stop-color="#ff5600"/><stop offset="0.7174" stop-color="#ff3700"/><stop offset="0.7331" stop-color="#ff4100"/><stop offset="0.7409" stop-color="#ff5b00"/><stop offset="0.7487" stop-color="#ff9500"/><stop offset="0.7591" stop-color="#f8ff00"/><stop offset="0.7747" stop-color="#16eb14"/><stop offset="0.7852" stop-color="#01f087"/><stop offset="0.7982" stop-color="#00eeff"/><stop offset="0.8294" stop-color="#0063ff"/><stop offset="0.8659" stop-color="#0000fd"/><stop offset="0.9232" stop-color="#0000b5"/><stop offset="0.9987" stop-color="#000076"/></linearGradient><linearGradient id="h138" gradientUnits="userSpaceOnUse" x1="0" y1="0" x2="0" y2="384"><stop offset="0.0013" stop-color="#000000"/><stop offset="0.5430" stop-color="#000000"/><stop offset="0.5456" stop-color="#000013"/><stop offset="0.5612" stop-color="#0000ed"/><stop offset="0.5638" stop-color="#0000ff"/><stop offset="0.6003" stop-color="#0022ff"/><stop offset="0.6289" stop-color="#004fff"/><stop offset="0.6419" stop-color="#0086ff"/><stop offset="0.6523" stop-color="#00dbff"/><stop offset="0.6549" stop-color="#00f0f6"/><stop offset="0.6628" stop-color="#04ef75"/><stop offset="0.6680" stop-color="#13eb19"/><stop offset="0.6784" stop-color="#eafe00"/><stop offset="0.6810" stop-color="#ffe700"/><stop offset="0.6888" stop-color="#ff7c00"/><stop offset="0.6966" stop-color="#ff3f00"/><stop offset="0.7044" stop-color="#ff2a00"/><stop offset="0.7201" stop-color="#ff1f00"/><stop offset="0.7331" stop-color="#ff2900"/><stop offset="0.7409" stop-color="#ff4200"/><stop offset="0.7487" stop-color="#ff7f00"/><stop offset="0.7591" stop-color="#fff300"/><stop offset="0.7669" stop-color="#a7fa00"/><stop offset="0.7747" stop-color="#2ced11"/><stop offset="0.7773" stop-color="#12eb20"/><stop offset="0.7852" stop-color="#03ef77"/><stop offset="0.7982" stop-color="#00f0f5"/><stop offset="0.8008" stop-color="#00e7ff"/><stop offset="0.8294" stop-color="#0069ff"/><stop offset="0.8659" stop-color="#0002ff"/><stop offset="0.9362" stop-color="#0000ab"/><stop offset="0.9987" stop-color="#000078"/></linearGradient><linearGradient id="h139" gradientUnits="userSpaceOnUse" x1="0" y1="0" x2="0" y2="384"><stop offset="0.0013" stop-color="#000000"/><stop offset="0.5508" stop-color="#000000"/><stop offset="0.5534" stop-color="#000012"/><stop offset="0.5690" stop-color="#0000e8"/><stop offset="0.5716" stop-color="#0000fa"/><stop offset="0.5794" stop-color="#0002ff"/><stop offset="0.6289" stop-color="#0043ff"/><stop offset="0.6419" stop-color="#007fff"/><stop offset="0.6523" stop-color="#00dbff"/><stop offset="0.6549" stop-color="#00f0f3"/><stop offset="0.6628" stop-color="#05ef6d"/><stop offset="0.6680" stop-color="#1bec13"/><stop offset="0.6784" stop-color="#f9ff00"/><stop offset="0.6810" stop-color="#ffd900"/><stop offset="0.6888" stop-color="#ff6900"/><stop offset="0.6966" stop-color="#ff2b00"/><stop offset="0.7070" stop-color="#ff1200"/><stop offset="0.7227" stop-color="#ff0a00"/><stop offset="0.7357" stop-color="#ff1800"/><stop offset="0.7435" stop-color="#ff3d00"/><stop offset="0.7487" stop-color="#ff6a00"/><stop offset="0.7617" stop-color="#fcff00"/><stop offset="0.7773" stop-color="#19eb13"/><stop offset="0.7878" stop-color="#01f085"/><stop offset="0.8008" stop-color="#00efff"/><stop offset="0.8294" stop-color="#006eff"/><stop offset="0.8685" stop-color="#0000ff"/><stop offset="0.9466" stop-color="#0000a3"/><stop offset="0.9987" stop-color="#00007b"/></linearGradient><linearGradient id="h140" gradientUnits="userSpaceOnUse" x1="0" y1="0" x2="0" y2="384"><stop offset="0.0013" stop-color="#000000"/><stop offset="0.5586" stop-color="#000000"/><stop offset="0.5612" stop-color="#000012"/><stop offset="0.5768" stop-color="#0000e4"/><stop offset="0.5794" stop-color="#0000f5"/><stop offset="0.5898" stop-color="#0000ff"/><stop offset="0.6159" stop-color="#001dff"/><stop offset="0.6315" stop-color="#0040ff"/><stop offset="0.6419" stop-color="#0079ff"/><stop offset="0.6523" stop-color="#00dbff"/><stop offset="0.6549" stop-color="#00f0f1"/><stop offset="0.6628" stop-color="#06ee66"/><stop offset="0.6680" stop-color="#27ed11"/><stop offset="0.6732" stop-color="#a2f901"/><stop offset="0.6784" stop-color="#fff900"/><stop offset="0.6862" stop-color="#ff7b00"/><stop offset="0.6914" stop-color="#ff3d00"/><stop offset="0.6966" stop-color="#ff1a00"/><stop offset="0.7018" stop-color="#ff0a00"/><stop offset="0.7383" stop-color="#ff0e00"/><stop offset="0.7461" stop-color="#ff4000"/><stop offset="0.7617" stop-color="#fff500"/><stop offset="0.7643" stop-color="#e8fe00"/><stop offset="0.7773" stop-color="#29ed11"/><stop offset="0.7799" stop-color="#12ec22"/><stop offset="0.7956" stop-color="#00f0c8"/><stop offset="0.8008" stop-color="#00f0f7"/><stop offset="0.8034" stop-color="#00e7ff"/><stop offset="0.8320" stop-color="#006aff"/><stop offset="0.8711" stop-color="#0000fe"/><stop offset="0.9518" stop-color="#0000a0"/><stop offset="0.9987" stop-color="#00007c"/></linearGradient><linearGradient id="h141" gradientUnits="userSpaceOnUse" x1="0" y1="0" x2="0" y2="384"><stop offset="0.0013" stop-color="#000000"/><stop offset="0.5638" stop-color="#000000"/><stop offset="0.5664" stop-color="#000011"/><stop offset="0.5820" stop-color="#0000de"/><stop offset="0.5846" stop-color="#0000ef"/><stop offset="0.6003" stop-color="#0000ff"/><stop offset="0.6211" stop-color="#001aff"/><stop offset="0.6315" stop-color="#0036ff"/><stop offset="0.6419" stop-color="#0073ff"/><stop offset="0.6523" stop-color="#00dbff"/><stop offset="0.6549" stop-color="#00f0f0"/><stop offset="0.6654" stop-color="#10ec2e"/><stop offset="0.6680" stop-color="#31ee10"/><stop offset="0.6732" stop-color="#adfa00"/><stop offset="0.6784" stop-color="#ffef00"/><stop offset="0.6888" stop-color="#ff4c00"/><stop offset="0.6940" stop-color="#ff1b00"/><stop offset="0.6992" stop-color="#fd0900"/><stop offset="0.7409" stop-color="#ff0b00"/><stop offset="0.7487" stop-color="#ff4b00"/><stop offset="0.7617" stop-color="#ffea00"/><stop offset="0.7643" stop-color="#f4fe00"/><stop offset="0.7799" stop-color="#13eb18"/><stop offset="0.7930" stop-color="#00f0a6"/><stop offset="0.8034" stop-color="#00ecff"/><stop offset="0.8320" stop-color="#006eff"/><stop offset="0.8711" stop-color="#0001ff"/><stop offset="0.9544" stop-color="#00009f"/><stop offset="0.9987" stop-color="#00007e"/></linearGradient><linearGradient id="h142" gradientUnits="userSpaceOnUse" x1="0" y1="0" x2="0" y2="384"><stop offset="0.0013" stop-color="#000000"/><stop offset="0.5690" stop-color="#000000"/><stop offset="0.5716" stop-color="#000011"/><stop offset="0.5820" stop-color="#00009b"/><stop offset="0.5872" stop-color="#0000d8"/><stop offset="0.5898" stop-color="#0000ea"/><stop offset="0.6107" stop-color="#0001ff"/><stop offset="0.6237" stop-color="#0015ff"/><stop offset="0.6341" stop-color="#0039ff"/><stop offset="0.6419" stop-color="#006eff"/><stop offset="0.6523" stop-color="#00dbff"/><stop offset="0.6549" stop-color="#00f0ef"/><stop offset="0.6654" stop-color="#10ec29"/><stop offset="0.6680" stop-color="#38ef0f"/><stop offset="0.6758" stop-color="#e5fd00"/><stop offset="0.6784" stop-color="#ffe800"/><stop offset="0.6888" stop-color="#ff4200"/><stop offset="0.6940" stop-color="#ff1000"/><stop offset="0.6966" stop-color="#fd0900"/><stop offset="0.7435" stop-color="#ff1100"/><stop offset="0.7487" stop-color="#ff4000"/><stop offset="0.7643" stop-color="#fdff00"/><stop offset="0.7799" stop-color="#19ec13"/><stop offset="0.7904" stop-color="#01f085"/><stop offset="0.8034" stop-color="#00f0ff"/><stop offset="0.8320" stop-color="#0071ff"/><stop offset="0.8607" stop-color="#001aff"/><stop offset="0.8737" stop-color="#0000fe"/><stop offset="0.9544" stop-color="#0000a0"/><stop offset="0.9987" stop-color="#00007f"/></linearGradient><linearGradient id="h143" gradientUnits="userSpaceOnUse" x1="0" y1="0" x2="0" y2="384"><stop offset="0.0013" stop-color="#000000"/><stop offset="0.5742" stop-color="#000000"/><stop offset="0.5768" stop-color="#000011"/><stop offset="0.5872" stop-color="#000098"/><stop offset="0.5951" stop-color="#0000e5"/><stop offset="0.6185" stop-color="#0002ff"/><stop offset="0.6289" stop-color="#0019ff"/><stop offset="0.6367" stop-color="#0040ff"/><stop offset="0.6445" stop-color="#0082ff"/><stop offset="0.6523" stop-color="#00daff"/><stop offset="0.6549" stop-color="#00f0ef"/><stop offset="0.6654" stop-color="#11ec25"/><stop offset="0.6680" stop-color="#3eef0e"/><stop offset="0.6758" stop-color="#ebfe00"/><stop offset="0.6784" stop-color="#ffe300"/><stop offset="0.6862" stop-color="#ff5e00"/><stop offset="0.6940" stop-color="#ff0a00"/><stop offset="0.7201" stop-color="#f60500"/><stop offset="0.7435" stop-color="#ff0a00"/><stop offset="0.7513" stop-color="#ff5600"/><stop offset="0.7643" stop-color="#fffb00"/><stop offset="0.7669" stop-color="#e1fd00"/><stop offset="0.7799" stop-color="#20ec12"/><stop offset="0.7826" stop-color="#10ec29"/><stop offset="0.7982" stop-color="#00f0ce"/><stop offset="0.8034" stop-color="#00f0fb"/><stop offset="0.8060" stop-color="#00e5ff"/><stop offset="0.8320" stop-color="#0073ff"/><stop offset="0.8607" stop-color="#001bff"/><stop offset="0.8737" stop-color="#0001ff"/><stop offset="0.9570" stop-color="#00009f"/><stop offset="0.9987" stop-color="#000080"/></linearGradient><linearGradient id="h144" gradientUnits="userSpaceOnUse" x1="0" y1="0" x2="0" y2="384"><stop offset="0.0013" stop-color="#000000"/><stop offset="0.5820" stop-color="#000000"/><stop offset="0.6003" stop-color="#0000e1"/><stop offset="0.6237" stop-color="#0001ff"/><stop offset="0.6367" stop-color="#0039ff"/><stop offset="0.6445" stop-color="#007fff"/><stop offset="0.6523" stop-color="#00daff"/><stop offset="0.6549" stop-color="#00f0ee"/><stop offset="0.6654" stop-color="#12ec23"/><stop offset="0.6680" stop-color="#41f00e"/><stop offset="0.6758" stop-color="#eefe00"/><stop offset="0.6784" stop-color="#ffdf00"/><stop offset="0.6888" stop-color="#ff3600"/><stop offset="0.6940" stop-color="#fe0900"/><stop offset="0.7253" stop-color="#f50500"/><stop offset="0.7435" stop-color="#fe0900"/><stop offset="0.7461" stop-color="#ff1900"/><stop offset="0.7643" stop-color="#fff700"/><stop offset="0.7721" stop-color="#a1f901"/><stop offset="0.7799" stop-color="#25ed12"/><stop offset="0.7826" stop-color="#11ec25"/><stop offset="0.7904" stop-color="#03ef7d"/><stop offset="0.8034" stop-color="#00f0f8"/><stop offset="0.8060" stop-color="#00e6ff"/><stop offset="0.8320" stop-color="#0074ff"/><stop offset="0.8607" stop-color="#001dff"/><stop offset="0.8737" stop-color="#0002ff"/><stop offset="0.9570" stop-color="#0000a0"/><stop offset="0.9987" stop-color="#000081"/></linearGradient><linearGradient id="h145" gradientUnits="userSpaceOnUse" x1="0" y1="0" x2="0" y2="384"><stop offset="0.0013" stop-color="#000000"/><stop offset="0.5872" stop-color="#000000"/><stop offset="0.5898" stop-color="#000010"/><stop offset="0.6055" stop-color="#0000cf"/><stop offset="0.6081" stop-color="#0000df"/><stop offset="0.6289" stop-color="#0006ff"/><stop offset="0.6393" stop-color="#0048ff"/><stop offset="0.6523" stop-color="#00daff"/><stop offset="0.6549" stop-color="#00f0ee"/><stop offset="0.6654" stop-color="#12ec21"/><stop offset="0.6706" stop-color="#83f605"/><stop offset="0.6758" stop-color="#f1fe00"/><stop offset="0.6784" stop-color="#ffdd00"/><stop offset="0.6888" stop-color="#ff3300"/><stop offset="0.6940" stop-color="#fd0900"/><stop offset="0.7305" stop-color="#f50500"/><stop offset="0.7435" stop-color="#fd0900"/><stop offset="0.7461" stop-color="#ff1500"/><stop offset="0.7643" stop-color="#fff500"/><stop offset="0.7721" stop-color="#a4f901"/><stop offset="0.7799" stop-color="#28ed11"/><stop offset="0.7826" stop-color="#12ec23"/><stop offset="0.7904" stop-color="#03ef7a"/><stop offset="0.8008" stop-color="#00f0e1"/><stop offset="0.8060" stop-color="#00e8ff"/><stop offset="0.8320" stop-color="#0075ff"/><stop offset="0.8607" stop-color="#001dff"/><stop offset="0.8737" stop-color="#0003ff"/><stop offset="0.9570" stop-color="#0000a0"/><stop offset="0.9987" stop-color="#000082"/></linearGradient><linearGradient id="h146" gradientUnits="userSpaceOnUse" x1="0" y1="0" x2="0" y2="384"><stop offset="0.0013" stop-color="#000000"/><stop offset="0.5924" stop-color="#000000"/><stop offset="0.6107" stop-color="#0000d8"/><stop offset="0.6211" stop-color="#0000e1"/><stop offset="0.6315" stop-color="#0009ff"/><stop offset="0.6393" stop-color="#0045ff"/><stop offset="0.6523" stop-color="#00d9ff"/><stop offset="0.6549" stop-color="#00f0ee"/><stop offset="0.6654" stop-color="#12ec20"/><stop offset="0.6706" stop-color="#85f605"/><stop offset="0.6758" stop-color="#f2fe00"/><stop offset="0.6784" stop-color="#ffdc00"/><stop offset="0.6888" stop-color="#ff3100"/><stop offset="0.6940" stop-color="#fd0900"/><stop offset="0.7305" stop-color="#f50500"/><stop offset="0.7461" stop-color="#ff1300"/><stop offset="0.7643" stop-color="#fff300"/><stop offset="0.7721" stop-color="#a7fa00"/><stop offset="0.7799" stop-color="#2aed11"/><stop offset="0.7826" stop-color="#12ec21"/><stop offset="0.7904" stop-color="#03ef79"/><stop offset="0.8008" stop-color="#00f0df"/><stop offset="0.8060" stop-color="#00e8ff"/><stop offset="0.8346" stop-color="#006dff"/><stop offset="0.8607" stop-color="#001eff"/><stop offset="0.8763" stop-color="#0000ff"/><stop offset="0.9570" stop-color="#0000a1"/><stop offset="0.9987" stop-color="#000082"/></linearGradient><linearGradient id="h147" gradientUnits="userSpaceOnUse" x1="0" y1="0" x2="0" y2="384"><stop offset="0.0013" stop-color="#000000"/><stop offset="0.5951" stop-color="#000000"/><stop offset="0.5977" stop-color="#000010"/><stop offset="0.6133" stop-color="#0000c1"/><stop offset="0.6237" stop-color="#0000da"/><stop offset="0.6315" stop-color="#0002ff"/><stop offset="0.6393" stop-color="#0042ff"/><stop offset="0.6523" stop-color="#00d9ff"/><stop offset="0.6549" stop-color="#00f0ee"/><stop offset="0.6654" stop-color="#12eb20"/><stop offset="0.6706" stop-color="#86f605"/><stop offset="0.6758" stop-color="#f3fe00"/><stop offset="0.6784" stop-color="#ffdb00"/><stop offset="0.6862" stop-color="#ff5400"/><stop offset="0.6914" stop-color="#ff1300"/><stop offset="0.6966" stop-color="#fa0800"/><stop offset="0.7305" stop-color="#f50500"/><stop offset="0.7461" stop-color="#ff1200"/><stop offset="0.7643" stop-color="#fff200"/><stop offset="0.7669" stop-color="#ebfe00"/><stop offset="0.7721" stop-color="#a8fa00"/><stop offset="0.7799" stop-color="#2ced11"/><stop offset="0.7826" stop-color="#12ec20"/><stop offset="0.7904" stop-color="#03ef78"/><stop offset="0.8008" stop-color="#00f0df"/><stop offset="0.8060" stop-color="#00e9ff"/><stop offset="0.8346" stop-color="#006eff"/><stop offset="0.8607" stop-color="#001eff"/><stop offset="0.8763" stop-color="#0000ff"/><stop offset="0.9570" stop-color="#0000a1"/><stop offset="0.9987" stop-color="#000083"/></linearGradient><linearGradient id="h148" gradientUnits="userSpaceOnUse" x1="0" y1="0" x2="0" y2="384"><stop offset="0.0013" stop-color="#000000"/><stop offset="0.6003" stop-color="#000000"/><stop offset="0.6029" stop-color="#000010"/><stop offset="0.6107" stop-color="#00006e"/><stop offset="0.6185" stop-color="#0000b7"/><stop offset="0.6315" stop-color="#0000fb"/><stop offset="0.6341" stop-color="#0010ff"/><stop offset="0.6419" stop-color="#005bff"/><stop offset="0.6523" stop-color="#00d9ff"/><stop offset="0.6549" stop-color="#00f0ee"/><stop offset="0.6654" stop-color="#12eb1f"/><stop offset="0.6706" stop-color="#86f605"/><stop offset="0.6758" stop-color="#f3fe00"/><stop offset="0.6784" stop-color="#ffdb00"/><stop offset="0.6862" stop-color="#ff5400"/><stop offset="0.6914" stop-color="#ff1300"/><stop offset="0.6992" stop-color="#f80700"/><stop offset="0.7305" stop-color="#f40500"/><stop offset="0.7461" stop-color="#ff1100"/><stop offset="0.7643" stop-color="#fff100"/><stop offset="0.7669" stop-color="#ebfe00"/><stop offset="0.7721" stop-color="#a9fa00"/><stop offset="0.7799" stop-color="#2ced11"/><stop offset="0.7826" stop-color="#12eb20"/><stop offset="0.7904" stop-color="#03ef78"/><stop offset="0.8008" stop-color="#00f0de"/><stop offset="0.8060" stop-color="#00e9ff"/><stop offset="0.8346" stop-color="#006eff"/><stop offset="0.8607" stop-color="#001fff"/><stop offset="0.8763" stop-color="#0001ff"/><stop offset="0.9570" stop-color="#0000a1"/><stop offset="0.9987" stop-color="#000083"/></linearGradient><linearGradient id="h149" gradientUnits="userSpaceOnUse" x1="0" y1="0" x2="0" y2="384"><stop offset="0.0013" stop-color="#000000"/><stop offset="0.6055" stop-color="#000000"/><stop offset="0.6081" stop-color="#000010"/><stop offset="0.6159" stop-color="#00006e"/><stop offset="0.6263" stop-color="#0000d2"/><stop offset="0.6341" stop-color="#000dff"/><stop offset="0.6419" stop-color="#005bff"/><stop offset="0.6523" stop-color="#00d9ff"/><stop offset="0.6549" stop-color="#00f0ee"/><stop offset="0.6654" stop-color="#12eb1f"/><stop offset="0.6706" stop-color="#86f605"/><stop offset="0.6758" stop-color="#f3fe00"/><stop offset="0.6784" stop-color="#ffdb00"/><stop offset="0.6862" stop-color="#ff5300"/><stop offset="0.6914" stop-color="#ff1200"/><stop offset="0.6992" stop-color="#f80700"/><stop offset="0.7305" stop-color="#f40500"/><stop offset="0.7461" stop-color="#ff1100"/><stop offset="0.7643" stop-color="#fff100"/><stop offset="0.7669" stop-color="#ecfe00"/><stop offset="0.7721" stop-color="#a9fa00"/><stop offset="0.7799" stop-color="#2ded11"/><stop offset="0.7826" stop-color="#12eb1f"/><stop offset="0.7904" stop-color="#03ef77"/><stop offset="0.8008" stop-color="#00f0de"/><stop offset="0.8060" stop-color="#00e9ff"/><stop offset="0.8346" stop-color="#006eff"/><stop offset="0.8607" stop-color="#001fff"/><stop offset="0.8763" stop-color="#0001ff"/><stop offset="0.9570" stop-color="#0000a2"/><stop offset="0.9987" stop-color="#000083"/></linearGradient><linearGradient id="h150" gradientUnits="userSpaceOnUse" x1="0" y1="0" x2="0" y2="384"><stop offset="0.0013" stop-color="#000000"/><stop offset="0.6107" stop-color="#000000"/><stop offset="0.6211" stop-color="#00007e"/><stop offset="0.6237" stop-color="#00008e"/><stop offset="0.6289" stop-color="#0000de"/><stop offset="0.6341" stop-color="#000cff"/><stop offset="0.6419" stop-color="#005aff"/><stop offset="0.6523" stop-color="#00d9ff"/><stop offset="0.6549" stop-color="#00f0ee"/><stop offset="0.6654" stop-color="#12eb1f"/><stop offset="0.6706" stop-color="#86f605"/><stop offset="0.6758" stop-color="#f3fe00"/><stop offset="0.6784" stop-color="#ffdb00"/><stop offset="0.6862" stop-color="#ff5300"/><stop offset="0.6914" stop-color="#ff1200"/><stop offset="0.6992" stop-color="#f80700"/><stop offset="0.7305" stop-color="#f40500"/><stop offset="0.7461" stop-color="#ff1100"/><stop offset="0.7643" stop-color="#fff100"/><stop offset="0.7669" stop-color="#ecfe00"/><stop offset="0.7721" stop-color="#aafa00"/><stop offset="0.7799" stop-color="#2dee11"/><stop offset="0.7826" stop-color="#12eb1f"/><stop offset="0.7904" stop-color="#04ef77"/><stop offset="0.8008" stop-color="#00f0de"/><stop offset="0.8060" stop-color="#00eaff"/><stop offset="0.8346" stop-color="#006eff"/><stop offset="0.8607" stop-color="#001fff"/><stop offset="0.8763" stop-color="#0001ff"/><stop offset="0.9570" stop-color="#0000a2"/><stop offset="0.9987" stop-color="#000083"/></linearGradient><linearGradient id="h151" gradientUnits="userSpaceOnUse" x1="0" y1="0" x2="0" y2="384"><stop offset="0.0013" stop-color="#000000"/><stop offset="0.6133" stop-color="#000000"/><stop offset="0.6159" stop-color="#000010"/><stop offset="0.6263" stop-color="#000088"/><stop offset="0.6315" stop-color="#0000e3"/><stop offset="0.6341" stop-color="#000bff"/><stop offset="0.6419" stop-color="#005aff"/><stop offset="0.6523" stop-color="#00d9ff"/><stop offset="0.6549" stop-color="#00f0ee"/><stop offset="0.6654" stop-color="#12eb1f"/><stop offset="0.6706" stop-color="#87f605"/><stop offset="0.6758" stop-color="#f3fe00"/><stop offset="0.6784" stop-color="#ffda00"/><stop offset="0.6862" stop-color="#ff5300"/><stop offset="0.6914" stop-color="#ff1200"/><stop offset="0.6992" stop-color="#f80700"/><stop offset="0.7331" stop-color="#f50500"/><stop offset="0.7461" stop-color="#ff1000"/><stop offset="0.7643" stop-color="#fff100"/><stop offset="0.7669" stop-color="#ecfe00"/><stop offset="0.7721" stop-color="#aafa00"/><stop offset="0.7799" stop-color="#2dee11"/><stop offset="0.7826" stop-color="#12eb1f"/><stop offset="0.7904" stop-color="#04ef77"/><stop offset="0.8008" stop-color="#00f0dd"/><stop offset="0.8060" stop-color="#00eaff"/><stop offset="0.8346" stop-color="#006eff"/><stop offset="0.8607" stop-color="#001fff"/><stop offset="0.8763" stop-color="#0001ff"/><stop offset="0.9570" stop-color="#0000a2"/><stop offset="0.9987" stop-color="#000083"/></linearGradient><linearGradient id="h152" gradientUnits="userSpaceOnUse" x1="0" y1="0" x2="0" y2="384"><stop offset="0.0013" stop-color="#000000"/><stop offset="0.6185" stop-color="#000000"/><stop offset="0.6263" stop-color="#00005e"/><stop offset="0.6341" stop-color="#0000e9"/><stop offset="0.6367" stop-color="#0023ff"/><stop offset="0.6523" stop-color="#00d9ff"/><stop offset="0.6549" stop-color="#00f0ee"/><stop offset="0.6654" stop-color="#12eb1f"/><stop offset="0.6706" stop-color="#87f605"/><stop offset="0.6758" stop-color="#f3fe00"/><stop offset="0.6784" stop-color="#ffda00"/><stop offset="0.6862" stop-color="#ff5300"/><stop offset="0.6914" stop-color="#ff1200"/><stop offset="0.6992" stop-color="#f80700"/><stop offset="0.7331" stop-color="#f50500"/><stop offset="0.7461" stop-color="#ff1000"/><stop offset="0.7643" stop-color="#fff000"/><stop offset="0.7669" stop-color="#ecfe00"/><stop offset="0.7721" stop-color="#aafa00"/><stop offset="0.7799" stop-color="#2eee11"/><stop offset="0.7826" stop-color="#12eb1f"/><stop offset="0.7904" stop-color="#04ef77"/><stop offset="0.8008" stop-color="#00f0dd"/><stop offset="0.8060" stop-color="#00eaff"/><stop offset="0.8346" stop-color="#006eff"/><stop offset="0.8607" stop-color="#001fff"/><stop offset="0.8763" stop-color="#0001ff"/><stop offset="0.9570" stop-color="#0000a2"/><stop offset="0.9987" stop-color="#000083"/></linearGradient><linearGradient id="h153" gradientUnits="userSpaceOnUse" x1="0" y1="0" x2="0" y2="384"><stop offset="0.0013" stop-color="#000000"/><stop offset="0.6211" stop-color="#000000"/><stop offset="0.6237" stop-color="#000010"/><stop offset="0.6289" stop-color="#000053"/><stop offset="0.6367" stop-color="#0000ed"/><stop offset="0.6393" stop-color="#002bff"/><stop offset="0.6419" stop-color="#005aff"/><stop offset="0.6523" stop-color="#00d9ff"/><stop offset="0.6549" stop-color="#00f0ee"/><stop offset="0.6654" stop-color="#12eb1f"/><stop offset="0.6706" stop-color="#87f605"/><stop offset="0.6758" stop-color="#f4fe00"/><stop offset="0.6784" stop-color="#ffda00"/><stop offset="0.6862" stop-color="#ff5300"/><stop offset="0.6914" stop-color="#ff1200"/><stop offset="0.6992" stop-color="#f80700"/><stop offset="0.7331" stop-color="#f50500"/><stop offset="0.7461" stop-color="#ff1000"/><stop offset="0.7643" stop-color="#fff000"/><stop offset="0.7669" stop-color="#edfe00"/><stop offset="0.7721" stop-color="#aafa00"/><stop offset="0.7799" stop-color="#2eee11"/><stop offset="0.7826" stop-color="#12eb1f"/><stop offset="0.7904" stop-color="#04ef76"/><stop offset="0.8008" stop-color="#00f0dd"/><stop offset="0.8060" stop-color="#00eaff"/><stop offset="0.8346" stop-color="#006eff"/><stop offset="0.8607" stop-color="#001fff"/><stop offset="0.8763" stop-color="#0001ff"/><stop offset="0.9570" stop-color="#0000a2"/><stop offset="0.9987" stop-color="#000083"/></linearGradient><linearGradient id="h154" gradientUnits="userSpaceOnUse" x1="0" y1="0" x2="0" y2="384"><stop offset="0.0013" stop-color="#000000"/><stop offset="0.6237" stop-color="#000000"/><stop offset="0.6263" stop-color="#000010"/><stop offset="0.6289" stop-color="#000032"/><stop offset="0.6393" stop-color="#0006ff"/><stop offset="0.6445" stop-color="#0078ff"/><stop offset="0.6523" stop-color="#00d9ff"/><stop offset="0.6549" stop-color="#00f0ee"/><stop offset="0.6654" stop-color="#12eb1f"/><stop offset="0.6706" stop-color="#87f605"/><stop offset="0.6758" stop-color="#f4fe00"/><stop offset="0.6784" stop-color="#ffda00"/><stop offset="0.6862" stop-color="#ff5300"/><stop offset="0.6914" stop-color="#ff1200"/><stop offset="0.6992" stop-color="#f80600"/><stop offset="0.7331" stop-color="#f50500"/><stop offset="0.7461" stop-color="#ff1000"/><stop offset="0.7643" stop-color="#fff000"/><stop offset="0.7669" stop-color="#edfe00"/><stop offset="0.7721" stop-color="#aafa00"/><stop offset="0.7799" stop-color="#2eee11"/><stop offset="0.7826" stop-color="#12eb1e"/><stop offset="0.7904" stop-color="#04ef76"/><stop offset="0.8008" stop-color="#00f0dd"/><stop offset="0.8060" stop-color="#00eaff"/><stop offset="0.8346" stop-color="#006eff"/><stop offset="0.8607" stop-color="#001fff"/><stop offset="0.8763" stop-color="#0001ff"/><stop offset="0.9570" stop-color="#0000a2"/><stop offset="0.9987" stop-color="#000083"/></linearGradient><linearGradient id="h155" gradientUnits="userSpaceOnUse" x1="0" y1="0" x2="0" y2="384"><stop offset="0.0013" stop-color="#000000"/><stop offset="0.6263" stop-color="#000000"/><stop offset="0.6289" stop-color="#000011"/><stop offset="0.6315" stop-color="#000038"/><stop offset="0.6393" stop-color="#0000db"/><stop offset="0.6419" stop-color="#001cff"/><stop offset="0.6471" stop-color="#0097ff"/><stop offset="0.6523" stop-color="#00d9ff"/><stop offset="0.6549" stop-color="#00f0ee"/><stop offset="0.6654" stop-color="#12eb1f"/><stop offset="0.6706" stop-color="#87f605"/><stop offset="0.6758" stop-color="#f4fe00"/><stop offset="0.6784" stop-color="#ffda00"/><stop offset="0.6862" stop-color="#ff5300"/><stop offset="0.6914" stop-color="#ff1200"/><stop offset="0.7331" stop-color="#f50500"/><stop offset="0.7461" stop-color="#ff1000"/><stop offset="0.7643" stop-color="#fff000"/><stop offset="0.7669" stop-color="#edfe00"/><stop offset="0.7721" stop-color="#aafa00"/><stop offset="0.7799" stop-color="#2eee11"/><stop offset="0.7826" stop-color="#12eb1e"/><stop offset="0.7904" stop-color="#04ef76"/><stop offset="0.8008" stop-color="#00f0dd"/><stop offset="0.8060" stop-color="#00eaff"/><stop offset="0.8346" stop-color="#006eff"/><stop offset="0.8607" stop-color="#001fff"/><stop offset="0.8763" stop-color="#0001ff"/><stop offset="0.9596" stop-color="#00009f"/><stop offset="0.9987" stop-color="#000083"/></linearGradient><linearGradient id="h156" gradientUnits="userSpaceOnUse" x1="0" y1="0" x2="0" y2="384"><stop offset="0.0013" stop-color="#000000"/><stop offset="0.6237" stop-color="#000000"/><stop offset="0.6263" stop-color="#000005"/><stop offset="0.6289" stop-color="#000027"/><stop offset="0.6341" stop-color="#000085"/><stop offset="0.6393" stop-color="#0000f7"/><stop offset="0.6419" stop-color="#0038ff"/><stop offset="0.6445" stop-color="#0078ff"/><stop offset="0.6523" stop-color="#00d9ff"/><stop offset="0.6549" stop-color="#00f0ee"/><stop offset="0.6654" stop-color="#12eb1f"/><stop offset="0.6706" stop-color="#87f605"/><stop offset="0.6758" stop-color="#f4fe00"/><stop offset="0.6784" stop-color="#ffda00"/><stop offset="0.6862" stop-color="#ff5300"/><stop offset="0.6914" stop-color="#ff1200"/><stop offset="0.7331" stop-color="#f50500"/><stop offset="0.7461" stop-color="#ff1000"/><stop offset="0.7643" stop-color="#fff000"/><stop offset="0.7669" stop-color="#edfe00"/><stop offset="0.7721" stop-color="#aafa00"/><stop offset="0.7799" stop-color="#2eee11"/><stop offset="0.7826" stop-color="#12eb1e"/><stop offset="0.7904" stop-color="#04ef76"/><stop offset="0.8008" stop-color="#00f0dd"/><stop offset="0.8060" stop-color="#00eaff"/><stop offset="0.8346" stop-color="#006eff"/><stop offset="0.8607" stop-color="#001fff"/><stop offset="0.8763" stop-color="#0001ff"/><stop offset="0.9596" stop-color="#00009f"/><stop offset="0.9987" stop-color="#000083"/></linearGradient><filter id="nz" x="0" y="0" width="100%" height="100%" color-interpolation-filters="sRGB"><feTurbulence type="fractalNoise" baseFrequency="0.55 0.35" numOctaves="2" seed="11" result="t"/><feDisplacementMap in="SourceGraphic" in2="t" scale="7" xChannelSelector="R" yChannelSelector="G"/></filter></defs><g filter="url(#nz)"><rect x="-10" y="-10" width="12.6" height="404" fill="url(#h0)"/><rect x="2" y="-10" width="2.6" height="404" fill="url(#h1)"/><rect x="4" y="-10" width="2.6" height="404" fill="url(#h2)"/><rect x="6" y="-10" width="2.6" height="404" fill="url(#h3)"/><rect x="8" y="-10" width="2.6" height="404" fill="url(#h4)"/><rect x="10" y="-10" width="2.6" height="404" fill="url(#h5)"/><rect x="12" y="-10" width="2.6" height="404" fill="url(#h6)"/><rect x="14" y="-10" width="2.6" height="404" fill="url(#h7)"/><rect x="16" y="-10" width="2.6" height="404" fill="url(#h8)"/><rect x="18" y="-10" width="2.6" height="404" fill="url(#h9)"/><rect x="20" y="-10" width="2.6" height="404" fill="url(#h10)"/><rect x="22" y="-10" width="2.6" height="404" fill="url(#h11)"/><rect x="24" y="-10" width="2.6" height="404" fill="url(#h12)"/><rect x="26" y="-10" width="2.6" height="404" fill="url(#h13)"/><rect x="28" y="-10" width="2.6" height="404" fill="url(#h14)"/><rect x="30" y="-10" width="2.6" height="404" fill="url(#h15)"/><rect x="32" y="-10" width="2.6" height="404" fill="url(#h16)"/><rect x="34" y="-10" width="2.6" height="404" fill="url(#h17)"/><rect x="36" y="-10" width="2.6" height="404" fill="url(#h18)"/><rect x="38" y="-10" width="2.6" height="404" fill="url(#h19)"/><rect x="40" y="-10" width="2.6" height="404" fill="url(#h20)"/><rect x="42" y="-10" width="2.6" height="404" fill="url(#h21)"/><rect x="44" y="-10" width="2.6" height="404" fill="url(#h22)"/><rect x="46" y="-10" width="2.6" height="404" fill="url(#h23)"/><rect x="48" y="-10" width="2.6" height="404" fill="url(#h24)"/><rect x="50" y="-10" width="2.6" height="404" fill="url(#h25)"/><rect x="52" y="-10" width="2.6" height="404" fill="url(#h26)"/><rect x="54" y="-10" width="2.6" height="404" fill="url(#h27)"/><rect x="56" y="-10" width="2.6" height="404" fill="url(#h28)"/><rect x="58" y="-10" width="2.6" height="404" fill="url(#h29)"/><rect x="60" y="-10" width="2.6" height="404" fill="url(#h30)"/><rect x="62" y="-10" width="2.6" height="404" fill="url(#h31)"/><rect x="64" y="-10" width="2.6" height="404" fill="url(#h32)"/><rect x="66" y="-10" width="2.6" height="404" fill="url(#h33)"/><rect x="68" y="-10" width="2.6" height="404" fill="url(#h34)"/><rect x="70" y="-10" width="2.6" height="404" fill="url(#h35)"/><rect x="72" y="-10" width="2.6" height="404" fill="url(#h36)"/><rect x="74" y="-10" width="2.6" height="404" fill="url(#h37)"/><rect x="76" y="-10" width="2.6" height="404" fill="url(#h38)"/><rect x="78" y="-10" width="2.6" height="404" fill="url(#h39)"/><rect x="80" y="-10" width="2.6" height="404" fill="url(#h40)"/><rect x="82" y="-10" width="2.6" height="404" fill="url(#h41)"/><rect x="84" y="-10" width="2.6" height="404" fill="url(#h42)"/><rect x="86" y="-10" width="2.6" height="404" fill="url(#h43)"/><rect x="88" y="-10" width="2.6" height="404" fill="url(#h44)"/><rect x="90" y="-10" width="2.6" height="404" fill="url(#h45)"/><rect x="92" y="-10" width="2.6" height="404" fill="url(#h46)"/><rect x="94" y="-10" width="2.6" height="404" fill="url(#h47)"/><rect x="96" y="-10" width="2.6" height="404" fill="url(#h48)"/><rect x="98" y="-10" width="2.6" height="404" fill="url(#h49)"/><rect x="100" y="-10" width="2.6" height="404" fill="url(#h50)"/><rect x="102" y="-10" width="2.6" height="404" fill="url(#h51)"/><rect x="104" y="-10" width="2.6" height="404" fill="url(#h52)"/><rect x="106" y="-10" width="2.6" height="404" fill="url(#h53)"/><rect x="108" y="-10" width="2.6" height="404" fill="url(#h54)"/><rect x="110" y="-10" width="2.6" height="404" fill="url(#h55)"/><rect x="112" y="-10" width="2.6" height="404" fill="url(#h56)"/><rect x="114" y="-10" width="2.6" height="404" fill="url(#h57)"/><rect x="116" y="-10" width="2.6" height="404" fill="url(#h58)"/><rect x="118" y="-10" width="2.6" height="404" fill="url(#h59)"/><rect x="120" y="-10" width="2.6" height="404" fill="url(#h60)"/><rect x="122" y="-10" width="2.6" height="404" fill="url(#h61)"/><rect x="124" y="-10" width="2.6" height="404" fill="url(#h62)"/><rect x="126" y="-10" width="2.6" height="404" fill="url(#h63)"/><rect x="128" y="-10" width="2.6" height="404" fill="url(#h64)"/><rect x="130" y="-10" width="2.6" height="404" fill="url(#h65)"/><rect x="132" y="-10" width="2.6" height="404" fill="url(#h66)"/><rect x="134" y="-10" width="2.6" height="404" fill="url(#h67)"/><rect x="136" y="-10" width="2.6" height="404" fill="url(#h68)"/><rect x="138" y="-10" width="2.6" height="404" fill="url(#h69)"/><rect x="140" y="-10" width="2.6" height="404" fill="url(#h70)"/><rect x="142" y="-10" width="2.6" height="404" fill="url(#h71)"/><rect x="144" y="-10" width="2.6" height="404" fill="url(#h72)"/><rect x="146" y="-10" width="2.6" height="404" fill="url(#h73)"/><rect x="148" y="-10" width="2.6" height="404" fill="url(#h74)"/><rect x="150" y="-10" width="2.6" height="404" fill="url(#h75)"/><rect x="152" y="-10" width="2.6" height="404" fill="url(#h76)"/><rect x="154" y="-10" width="2.6" height="404" fill="url(#h77)"/><rect x="156" y="-10" width="2.6" height="404" fill="url(#h78)"/><rect x="158" y="-10" width="2.6" height="404" fill="url(#h79)"/><rect x="160" y="-10" width="2.6" height="404" fill="url(#h80)"/><rect x="162" y="-10" width="2.6" height="404" fill="url(#h81)"/><rect x="164" y="-10" width="2.6" height="404" fill="url(#h82)"/><rect x="166" y="-10" width="2.6" height="404" fill="url(#h83)"/><rect x="168" y="-10" width="2.6" height="404" fill="url(#h84)"/><rect x="170" y="-10" width="2.6" height="404" fill="url(#h85)"/><rect x="172" y="-10" width="2.6" height="404" fill="url(#h86)"/><rect x="174" y="-10" width="2.6" height="404" fill="url(#h87)"/><rect x="176" y="-10" width="2.6" height="404" fill="url(#h88)"/><rect x="178" y="-10" width="2.6" height="404" fill="url(#h89)"/><rect x="180" y="-10" width="2.6" height="404" fill="url(#h90)"/><rect x="182" y="-10" width="2.6" height="404" fill="url(#h91)"/><rect x="184" y="-10" width="1.6" height="404" fill="url(#h92)"/><rect x="185" y="-10" width="1.6" height="404" fill="url(#h93)"/><rect x="186" y="-10" width="1.6" height="404" fill="url(#h94)"/><rect x="187" y="-10" width="1.6" height="404" fill="url(#h95)"/><rect x="188" y="-10" width="1.6" height="404" fill="url(#h96)"/><rect x="189" y="-10" width="1.6" height="404" fill="url(#h97)"/><rect x="190" y="-10" width="1.6" height="404" fill="url(#h98)"/><rect x="191" y="-10" width="1.6" height="404" fill="url(#h99)"/><rect x="192" y="-10" width="1.6" height="404" fill="url(#h100)"/><rect x="193" y="-10" width="1.6" height="404" fill="url(#h101)"/><rect x="194" y="-10" width="1.6" height="404" fill="url(#h102)"/><rect x="195" y="-10" width="1.6" height="404" fill="url(#h103)"/><rect x="196" y="-10" width="1.6" height="404" fill="url(#h104)"/><rect x="197" y="-10" width="1.6" height="404" fill="url(#h105)"/><rect x="198" y="-10" width="1.6" height="404" fill="url(#h106)"/><rect x="199" y="-10" width="1.6" height="404" fill="url(#h107)"/><rect x="200" y="-10" width="1.6" height="404" fill="url(#h108)"/><rect x="201" y="-10" width="1.6" height="404" fill="url(#h109)"/><rect x="202" y="-10" width="1.6" height="404" fill="url(#h110)"/><rect x="203" y="-10" width="1.6" height="404" fill="url(#h111)"/><rect x="204" y="-10" width="1.6" height="404" fill="url(#h112)"/><rect x="205" y="-10" width="1.6" height="404" fill="url(#h113)"/><rect x="206" y="-10" width="1.6" height="404" fill="url(#h114)"/><rect x="207" y="-10" width="1.6" height="404" fill="url(#h115)"/><rect x="208" y="-10" width="1.6" height="404" fill="url(#h116)"/><rect x="209" y="-10" width="1.6" height="404" fill="url(#h117)"/><rect x="210" y="-10" width="1.6" height="404" fill="url(#h118)"/><rect x="211" y="-10" width="1.6" height="404" fill="url(#h119)"/><rect x="212" y="-10" width="2.6" height="404" fill="url(#h120)"/><rect x="214" y="-10" width="2.6" height="404" fill="url(#h121)"/><rect x="216" y="-10" width="2.6" height="404" fill="url(#h122)"/><rect x="218" y="-10" width="2.6" height="404" fill="url(#h123)"/><rect x="220" y="-10" width="2.6" height="404" fill="url(#h124)"/><rect x="222" y="-10" width="2.6" height="404" fill="url(#h125)"/><rect x="224" y="-10" width="2.6" height="404" fill="url(#h126)"/><rect x="226" y="-10" width="2.6" height="404" fill="url(#h127)"/><rect x="228" y="-10" width="2.6" height="404" fill="url(#h128)"/><rect x="230" y="-10" width="2.6" height="404" fill="url(#h129)"/><rect x="232" y="-10" width="2.6" height="404" fill="url(#h130)"/><rect x="234" y="-10" width="2.6" height="404" fill="url(#h131)"/><rect x="236" y="-10" width="2.6" height="404" fill="url(#h132)"/><rect x="238" y="-10" width="2.6" height="404" fill="url(#h133)"/><rect x="240" y="-10" width="2.6" height="404" fill="url(#h134)"/><rect x="242" y="-10" width="2.6" height="404" fill="url(#h135)"/><rect x="244" y="-10" width="2.6" height="404" fill="url(#h136)"/><rect x="246" y="-10" width="2.6" height="404" fill="url(#h137)"/><rect x="248" y="-10" width="2.6" height="404" fill="url(#h138)"/><rect x="250" y="-10" width="2.6" height="404" fill="url(#h139)"/><rect x="252" y="-10" width="2.6" height="404" fill="url(#h140)"/><rect x="254" y="-10" width="2.6" height="404" fill="url(#h141)"/><rect x="256" y="-10" width="2.6" height="404" fill="url(#h142)"/><rect x="258" y="-10" width="2.6" height="404" fill="url(#h143)"/><rect x="260" y="-10" width="2.6" height="404" fill="url(#h144)"/><rect x="262" y="-10" width="2.6" height="404" fill="url(#h145)"/><rect x="264" y="-10" width="2.6" height="404" fill="url(#h146)"/><rect x="266" y="-10" width="2.6" height="404" fill="url(#h147)"/><rect x="268" y="-10" width="2.6" height="404" fill="url(#h148)"/><rect x="270" y="-10" width="2.6" height="404" fill="url(#h149)"/><rect x="272" y="-10" width="2.6" height="404" fill="url(#h150)"/><rect x="274" y="-10" width="2.6" height="404" fill="url(#h151)"/><rect x="276" y="-10" width="2.6" height="404" fill="url(#h152)"/><rect x="278" y="-10" width="2.6" height="404" fill="url(#h153)"/><rect x="280" y="-10" width="2.6" height="404" fill="url(#h154)"/><rect x="282" y="-10" width="2.6" height="404" fill="url(#h155)"/><rect x="284" y="-10" width="12" height="404" fill="url(#h156)"/></g>
<defs><linearGradient id="spg" gradientUnits="userSpaceOnUse" x1="0" y1="169" x2="0" y2="333"><stop offset="0.000" stop-color="#0000ec" stop-opacity="1.00"/><stop offset="0.018" stop-color="#53f10c" stop-opacity="1.00"/><stop offset="0.037" stop-color="#ff8600" stop-opacity="1.00"/><stop offset="0.061" stop-color="#f20400" stop-opacity="1.00"/><stop offset="0.213" stop-color="#f20400" stop-opacity="1.00"/><stop offset="0.250" stop-color="#ff2700" stop-opacity="1.00"/><stop offset="0.280" stop-color="#ff8c00" stop-opacity="1.00"/><stop offset="0.317" stop-color="#ffdf00" stop-opacity="1.00"/><stop offset="0.354" stop-color="#c6fc00" stop-opacity="1.00"/><stop offset="0.390" stop-color="#72f408" stop-opacity="1.00"/><stop offset="0.427" stop-color="#14eb14" stop-opacity="1.00"/><stop offset="0.506" stop-color="#00f0a9" stop-opacity="1.00"/><stop offset="0.579" stop-color="#00f0ff" stop-opacity="1.00"/><stop offset="0.652" stop-color="#00a0ff" stop-opacity="1.00"/><stop offset="0.756" stop-color="#0050ff" stop-opacity="1.00"/><stop offset="0.878" stop-color="#0000ff" stop-opacity="0.50"/><stop offset="1.000" stop-color="#0000e5" stop-opacity="0.00"/></linearGradient><filter id="spb" x="-50%" y="-5%" width="200%" height="110%"><feGaussianBlur stdDeviation="0.55"/></filter></defs><g filter="url(#spb)"><polygon points="196.7,170.0 196.7,172.0 196.4,174.0 196.0,176.0 195.4,180.0 194.9,184.0 194.5,188.0 194.2,192.0 194.0,196.0 194.0,200.0 194.0,204.0 194.8,207.0 195.5,209.5 197.8,212.0 200.1,209.5 200.8,207.0 201.6,204.0 201.6,200.0 201.6,196.0 201.3,192.0 201.1,188.0 200.6,184.0 200.2,180.0 199.5,176.0 199.2,174.0 198.9,172.0 198.9,170.0" fill="url(#spg)"/><polyline points="194.9,202.0 194.8,205.0 194.6,208.0 194.4,211.0 194.2,214.0 193.9,217.0 193.6,220.0 193.2,223.0 192.9,226.0 192.6,229.0 192.4,232.0 192.2,235.0 191.9,238.0 191.7,241.0 191.4,244.0 191.2,247.0 191.0,250.0 190.7,253.0 190.6,256.0 190.4,259.0 190.3,262.0 190.2,265.0 190.1,268.0 190.1,271.0 190.0,274.0 189.9,277.0 189.9,280.0 189.8,283.0 189.8,286.0 189.8,289.0 189.8,292.0 189.7,295.0 189.7,298.0 189.7,301.0 189.7,304.0 189.7,307.0 189.7,310.0 189.6,313.0 189.6,316.0 189.6,319.0 189.6,322.0 189.6,325.0 189.6,328.0 189.6,331.0" fill="none" stroke="url(#spg)" stroke-width="2.5" stroke-linecap="round"/><polyline points="200.7,202.0 200.8,205.0 201.0,208.0 201.2,211.0 201.4,214.0 201.7,217.0 202.0,220.0 202.4,223.0 202.7,226.0 203.0,229.0 203.2,232.0 203.4,235.0 203.7,238.0 203.9,241.0 204.2,244.0 204.4,247.0 204.6,250.0 204.8,253.0 205.0,256.0 205.1,259.0 205.3,262.0 205.4,265.0 205.5,268.0 205.5,271.0 205.6,274.0 205.7,277.0 205.7,280.0 205.8,283.0 205.8,286.0 205.8,289.0 205.8,292.0 205.9,295.0 205.9,298.0 205.9,301.0 205.9,304.0 205.9,307.0 205.9,310.0 205.9,313.0 206.0,316.0 206.0,319.0 206.0,322.0 206.0,325.0 206.0,328.0 206.0,331.0" fill="none" stroke="url(#spg)" stroke-width="2.5" stroke-linecap="round"/></g>
<path d="M29.5 0V383.6M57.5 0V383.6M86.5 0V383.6M114.5 0V383.6M143.5 0V383.6M172.5 0V383.6M200.5 0V383.6M229.5 0V383.6M257.5 0V383.6M0 38.5H286M0 77.5H286M0 115.5H286M0 153.5H286M0 192.5H286M0 230.5H286M0 269.5H286M0 307.5H286M0 345.5H286" stroke="#ffffff" stroke-width="1" fill="none" opacity="0.17"/>
<clipPath id="abv"><polygon points="-5,-5 -3.0,233.0 0.0,233.0 3.0,235.0 7.0,233.0 11.0,236.0 15.0,233.0 18.0,232.0 21.0,228.0 24.0,224.0 27.0,219.0 29.0,214.0 32.0,211.0 34.0,206.0 37.0,203.0 39.0,198.0 42.0,194.0 45.0,188.0 48.0,184.0 50.0,178.0 53.0,175.0 55.0,171.0 57.0,167.0 60.0,162.0 62.0,155.0 64.0,150.0 67.0,144.0 69.0,139.0 72.0,136.0 75.0,132.0 77.0,124.0 79.0,117.0 81.0,109.0 82.0,102.0 83.0,95.0 85.0,90.0 87.0,93.0 90.0,95.0 93.0,98.0 97.0,98.0 100.0,96.0 103.0,93.0 106.0,97.0 110.0,95.0 115.0,94.0 121.0,93.0 127.0,93.0 133.0,92.0 139.0,92.0 145.0,93.0 151.0,94.0 157.0,93.0 163.0,93.0 169.0,94.0 175.0,95.0 181.0,96.0 187.0,96.0 193.0,95.0 199.0,93.0 204.0,91.0 207.0,90.0 208.0,95.0 209.0,107.0 211.0,119.0 214.0,126.0 217.0,132.0 220.0,138.0 222.0,142.0 224.0,150.0 226.0,158.0 229.0,167.0 232.0,172.0 235.0,176.0 239.0,179.0 243.0,183.0 247.0,187.0 248.0,195.0 249.0,202.0 253.0,208.0 257.0,212.0 259.0,214.0 263.0,219.0 267.0,222.0 271.0,226.0 275.0,229.0 279.0,232.0 283.0,234.0 286.0,233.0 289.0,233.0 291,-5"/></clipPath>
<g clip-path="url(#abv)"><path d="M29.5 0V383.6M57.5 0V383.6M86.5 0V383.6M114.5 0V383.6M143.5 0V383.6M172.5 0V383.6M200.5 0V383.6M229.5 0V383.6M257.5 0V383.6M0 38.5H286M0 77.5H286M0 115.5H286M0 153.5H286M0 192.5H286M0 230.5H286M0 269.5H286M0 307.5H286M0 345.5H286" stroke="#7a7a7a" stroke-width="1" fill="none" opacity="1.0"/></g>
<rect x="0.5" y="0.5" width="285" height="383" fill="none" stroke="#6e6e6e" opacity="0.8"/>
<polyline points="0.0,279.5 30.0,279.5 38.0,275.5 45.0,267.5 51.0,258.5 57.0,248.5 63.0,234.5 69.0,219.5 77.0,201.5 82.0,186.5 89.0,174.5 97.0,167.5 107.0,160.5 122.0,151.5 137.0,144.0 149.0,143.5 159.0,144.5 172.0,151.5 187.0,159.5 197.0,165.5 203.0,175.5 207.0,184.5 215.0,200.5 222.0,216.5 229.5,236.5 235.0,247.5 240.0,255.5 245.0,262.5 250.0,268.0 255.0,272.5 260.0,276.0 269.5,279.0 286.0,279.5" fill="none" stroke="#46f29a" stroke-width="0.9" stroke-linejoin="round"/>
<polyline points="-3.0,233.3 -1.7,232.5 -0.4,234.6 0.9,232.8 2.2,235.6 3.5,235.2 4.8,233.2 6.1,234.5 7.4,232.4 8.7,235.0 10.0,234.4 11.3,235.1 12.6,235.5 13.9,236.2 15.2,232.4 16.5,232.3 17.8,233.6 19.1,233.4 20.4,230.1 21.7,227.6 23.0,228.3 24.3,222.6 25.6,223.8 26.9,219.3 28.2,215.5 29.5,212.9 30.8,212.4 32.1,213.1 33.4,207.2 34.7,206.6 36.0,205.6 37.3,202.7 38.6,200.2 39.9,196.0 41.2,194.2 42.5,192.8 43.8,192.2 45.1,188.6 46.4,186.4 47.7,185.8 49.0,181.8 50.3,177.9 51.6,178.6 52.9,176.9 54.2,172.5 55.5,171.3 56.8,168.5 58.1,167.7 59.4,165.0 60.7,159.7 62.0,158.0 63.3,151.1 64.6,149.5 65.9,148.3 67.2,143.0 68.5,141.2 69.8,137.3 71.1,138.6 72.4,137.6 73.7,135.0 75.0,134.6 76.3,127.0 77.6,123.7 78.9,118.7 80.2,113.5 81.5,106.3 82.8,98.8 84.1,95.1 85.4,91.5 86.7,94.2 88.0,92.8 89.3,96.4 90.6,97.2 91.9,100.0 93.2,100.4 94.5,98.1 95.8,98.5 97.1,99.6 98.4,96.1 99.7,97.0 101.0,94.6 102.3,93.1 103.6,92.9 104.9,97.7 106.2,96.3 107.5,96.2 108.8,96.1 110.1,97.5 111.4,94.0 112.7,95.2 114.0,95.4 115.3,96.6 116.6,96.1 117.9,96.0 119.2,93.4 120.5,93.7 121.8,93.4 123.1,95.6 124.4,95.9 125.7,92.5 127.0,92.6 128.3,92.7 129.6,92.4 130.9,93.3 132.2,93.5 133.5,92.0 134.8,90.9 136.1,92.7 137.4,92.5 138.7,93.3 140.0,95.1 141.3,94.2 142.6,93.7 143.9,94.3 145.2,94.8 146.5,92.4 147.8,96.1 149.1,95.9 150.4,96.5 151.7,96.1 153.0,94.2 154.3,94.0 155.6,92.6 156.9,94.6 158.2,92.2 159.5,92.2 160.8,92.8 162.1,92.6 163.4,93.4 164.7,92.4 166.0,92.4 167.3,93.3 168.6,93.3 169.9,94.6 171.2,93.4 172.5,97.2 173.8,96.3 175.1,94.5 176.4,95.2 177.7,95.8 179.0,96.1 180.3,95.3 181.6,98.5 182.9,99.1 184.2,96.9 185.5,96.9 186.8,95.3 188.1,95.1 189.4,95.9 190.7,95.4 192.0,97.5 193.3,94.5 194.6,93.5 195.9,96.9 197.2,94.7 198.5,92.7 199.8,93.9 201.1,91.2 202.4,92.8 203.7,94.1 205.0,93.2 206.3,92.1 207.6,93.0 208.9,106.2 210.2,113.8 211.5,122.3 212.8,124.3 214.1,128.4 215.4,129.1 216.7,131.2 218.0,136.3 219.3,139.6 220.6,141.7 221.9,144.1 223.2,149.1 224.5,154.0 225.8,157.1 227.1,162.4 228.4,165.6 229.7,167.2 231.0,169.4 232.3,172.5 233.6,174.1 234.9,177.7 236.2,179.8 237.5,178.7 238.8,181.7 240.1,183.1 241.4,184.3 242.7,183.1 244.0,183.8 245.3,185.2 246.6,186.3 247.9,194.0 249.2,203.8 250.5,206.9 251.8,208.6 253.1,209.0 254.4,211.0 255.7,213.0 257.0,211.3 258.3,215.0 259.6,217.5 260.9,218.6 262.2,220.1 263.5,220.3 264.8,220.0 266.1,223.5 267.4,222.7 268.7,226.0 270.0,228.0 271.3,226.8 272.6,227.8 273.9,231.1 275.2,231.1 276.5,229.7 277.8,230.5 279.1,231.6 280.4,235.4 281.7,235.6 283.0,233.5 284.3,235.9 285.6,236.2 286.9,234.7 288.2,233.4" fill="none" stroke="#f7ef3a" stroke-width="1.1" stroke-linejoin="round"/>
<rect x="140.39999999999998" y="89.19999999999999" width="10.5" height="10.5" fill="none" stroke="#fff" stroke-width="1.1"/>
<text x="138.29999999999995" y="84.6" font-family="'Liberation Sans',sans-serif" font-size="11.5" fill="#f4f4f4">MR</text>
<path d="M199.5 87.4l6.3 6.3l-6.3 6.3l-6.3 -6.3z" fill="none" stroke="#cfcfcf" stroke-width="1"/>
<text x="193.29999999999995" y="84" font-family="'Liberation Sans',sans-serif" font-size="11.5" fill="#bdbdbd">M1</text>
<text x="12.399999999999977" y="20.80000000000001" font-family="'Liberation Sans',sans-serif" font-size="11" fill="#fff">MR: -58.59 dBm</text>
<text x="12.399999999999977" y="33.099999999999994" font-family="'Liberation Sans',sans-serif" font-size="11" fill="#fff">100.699922 MHz</text>
</svg>
<div class="a" style="left:4px;top:548px;width:800px;height:34px;background:#efebde;border-top:1.5px solid #fbfaf4;box-sizing:border-box;"></div>
<div class="t" id="mk" style="left:15.5px;top:559.00px;font-size:12.4px;font-weight:bold;letter-spacing:-0.3px;">Markers</div>
<div class="b d" style="left:77px;top:555.5px;width:57.5px;height:21.5px;"><span id="df" style="top:3.75px;font-size:12px;">Define</span></div>
<svg class="a" style="left:148px;top:563.7px" width="11" height="6.5" viewBox="0 0 11 6.5"><path d="M0 0H11L5.5 6.5Z" fill="#b9b9c6"/><path d="M11 0L5.5 6.5" stroke="#1a1a8a" stroke-width="1" fill="none"/><path d="M0 0H11" stroke="#8a8a99" stroke-width="0.8"/></svg>
<div class="t" id="mr" style="left:168px;top:559.00px;font-size:12.3px;">MR</div>
<div class="a" style="left:218px;top:554.5px;width:86.5px;height:20.5px;box-sizing:border-box;border:1px solid #7f9db9;background:#fff;"></div>
<div class="t" id="fq" style="left:222.5px;top:558.50px;font-size:12.3px;">Frequency</div>
<div class="a" style="left:289.5px;top:556px;width:14px;height:17.5px;border-radius:2px;background:linear-gradient(#cfdcf8,#b4c8f0);box-sizing:border-box;border:1px solid #b8caf0;"></div>
<svg class="a" style="left:289.5px;top:556px" width="14" height="17.5" viewBox="0 0 14 17.5"><path d="M3.6 6.8L7 10.4L10.4 6.8" fill="none" stroke="#35456e" stroke-width="1.9"/></svg>
<div class="a" style="left:305.5px;top:554.5px;width:112px;height:20.5px;box-sizing:border-box;border:1px solid #7f9db9;background:#fff;"></div>
<div class="t" id="fv" style="left:309px;top:558.50px;font-size:12.3px;">100.699754 MHz</div>
<div class="b " style="left:429.3px;top:555.5px;width:69.5px;height:21.5px;"><span id="tc" style="top:3.75px;font-size:12px;">To Center</span></div>
<div class="b " style="left:509.3px;top:555.5px;width:45.19999999999999px;height:21.5px;"><span id="pk" style="top:3.75px;font-size:12px;">Peak</span></div>
<div class="b " style="left:565.3px;top:555.5px;width:21.5px;height:21.5px;"><span style="top:2.75px;font-size:12px;"></span></div>
<svg class="a" style="left:570.05px;top:560px" width="12" height="12" viewBox="-6 -6 12 12"><g transform="rotate(180)"><path d="M-4 -2H-0.3V-4.8L4.6 0L-0.3 4.8V2H-4Z" fill="#00006e"/></g></svg>
<div class="b " style="left:597.3px;top:555.5px;width:21.300000000000068px;height:21.5px;"><span style="top:2.75px;font-size:12px;"></span></div>
<svg class="a" style="left:601.95px;top:560px" width="12" height="12" viewBox="-6 -6 12 12"><g transform="rotate(0)"><path d="M-4 -2H-0.3V-4.8L4.6 0L-0.3 4.8V2H-4Z" fill="#00006e"/></g></svg>
<div class="b " style="left:629.3px;top:555.5px;width:21.300000000000068px;height:21.5px;"><span style="top:2.75px;font-size:12px;"></span></div>
<svg class="a" style="left:633.95px;top:560px" width="12" height="12" viewBox="-6 -6 12 12"><g transform="rotate(90)"><path d="M-4 -2H-0.3V-4.8L4.6 0L-0.3 4.8V2H-4Z" fill="#00006e"/></g></svg>
<div class="b " style="left:661px;top:555.5px;width:21.799999999999955px;height:21.5px;"><span style="top:2.75px;font-size:12px;"></span></div>
<svg class="a" style="left:665.9px;top:560px" width="12" height="12" viewBox="-6 -6 12 12"><g transform="rotate(270)"><path d="M-4 -2H-0.3V-4.8L4.6 0L-0.3 4.8V2H-4Z" fill="#00006e"/></g></svg>
<div class="b d" style="left:694.8px;top:555.5px;width:52.0px;height:21.5px;"><span id="tb" style="top:3.75px;font-size:12px;">Table</span></div>
<div class="b " style="left:766px;top:555.5px;width:27.5px;height:21.5px;"><span id="xx" style="top:2.75px;font-size:13px;font-weight:bold;">X</span></div>
<div class="a" style="left:4px;top:582px;width:800px;height:22px;background:#efebde;border-top:1px solid #c5c2b2;box-sizing:border-box;box-shadow:inset 0 1px 0 #f8f7f0;"></div>
<div class="t" id="s0" style="left:5.5px;top:588.00px;font-size:12.3px;">Stopped</div>
<div class="t" id="s1" style="left:107.5px;top:588.00px;font-size:12.3px;">Acq BW: 625.00 kHz, Acq Length: 744.960 us</div>
<div class="t" id="s2" style="left:392.5px;top:588.00px;font-size:12.3px;">Real Time</div>
<div class="t" id="s3" style="left:459.5px;top:588.00px;font-size:12.3px;">Free Run</div>
<div class="t" id="s4" style="left:554px;top:588.00px;font-size:12.3px;">Ref: Int</div>
<div class="t" id="s5" style="left:609.3px;top:588.00px;font-size:12.3px;">Atten: 10 dB</div>
<div class="sep" style="left:101px"></div>
<div class="sep" style="left:386px"></div>
<div class="sep" style="left:453.5px"></div>
<div class="sep" style="left:548.5px"></div>
<div class="sep" style="left:603.5px"></div>
<div class="sep" style="left:691px"></div>
<div class="sep" style="left:745.5px"></div>
<div class="sep" style="left:801px"></div>
</body></html>
